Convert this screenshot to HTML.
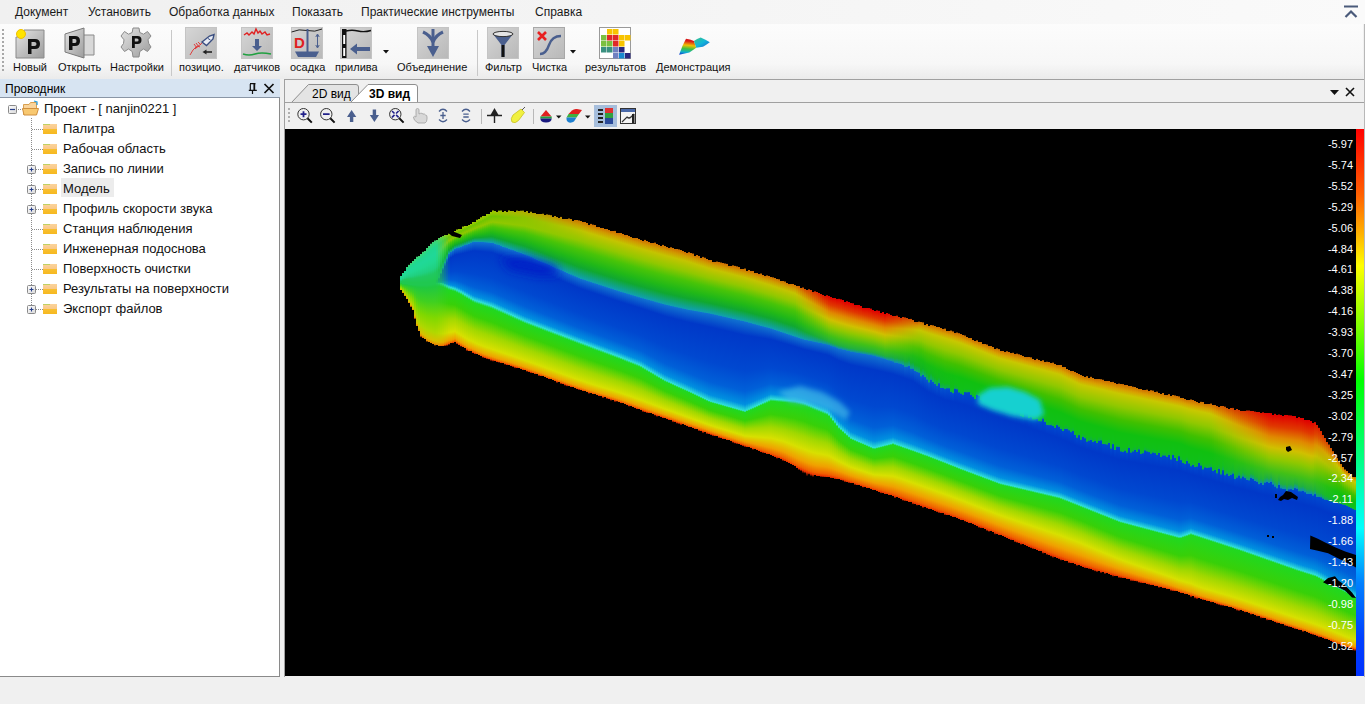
<!DOCTYPE html>
<html><head><meta charset="utf-8">
<style>
*{margin:0;padding:0;box-sizing:border-box}
html,body{width:1365px;height:704px;overflow:hidden;background:#f0f0f0;font-family:"Liberation Sans",sans-serif;font-size:12px;color:#000;position:relative}
.a{position:absolute;white-space:nowrap}
svg{position:absolute;overflow:visible}
#menu{left:0;top:0;width:1365px;height:24px;background:linear-gradient(to right,#f0f0f0,#f4f4f4 45%,#fafafa)}
#menu span{position:absolute;top:5px;font-size:12px;color:#1a1a1a}
#tb{left:0;top:24px;width:1363px;height:55px;background:linear-gradient(#fcfcfc,#f7f7f7 72%,#ebebeb)}
.lbl{position:absolute;top:37px;font-size:11px;color:#111}
.sep{position:absolute;top:6px;width:1px;height:46px;background:#c8c8c8}
#exp-h{left:0;top:79px;width:280px;height:19px;background:#d7e4f2;border-bottom:1px solid #8a96a6}
#exp{left:0;top:98px;width:280px;height:579px;background:#fff;border-right:1px solid #8a8a8a;border-bottom:1px solid #8a8a8a}
.tr{position:absolute;font-size:13px;color:#111}
#doc{left:284px;top:79px;width:1081px;height:598px;background:#f0f0f0;border-left:1px solid #a0a0a0;border-top:1px solid #a0a0a0}
#vt{left:285px;top:102px;width:1079px;height:27px;background:#f0f0f0;border-top:1px solid #a0a0a0}
#view{left:285px;top:129px;width:1071px;height:547px;background:#000;overflow:hidden}
#view i{position:absolute;top:0;height:547px}
#cbar{left:1356px;top:129px;width:8px;height:547px;background:linear-gradient(#ff0000,#ff6000 12%,#ffb000 19%,#ffff00 25%,#80ff00 36%,#00ff00 46%,#00ff80 60%,#00ffff 73%,#0080ff 83%,#0040ff 93%,#0030ff)}
#rb{left:1364px;top:24px;width:1px;height:653px;background:#b8b8b8}
#labels span{position:absolute;right:3px;color:#fff;font-size:11px;line-height:12px}
</style></head><body>
<div id="menu" class="a">
<span style="left:15px">Документ</span>
<span style="left:88px">Установить</span>
<span style="left:169px">Обработка данных</span>
<span style="left:292px">Показать</span>
<span style="left:361px">Практические инструменты</span>
<span style="left:535px">Справка</span>
<svg style="left:1343px;top:5px" width="16" height="14" viewBox="0 0 16 14"><path d="M1 1.5H15" stroke="#4a5a7a" stroke-width="2"/><path d="M2.5 12L8 6.5L13.5 12" stroke="#4a5a7a" stroke-width="2.2" fill="none"/></svg>
</div>
<div id="tb" class="a">
<svg style="left:2px;top:5px" width="3" height="44"><g fill="#a8a8a8"><rect x="0" y="0" width="2" height="2"/><rect x="0" y="4" width="2" height="2"/><rect x="0" y="8" width="2" height="2"/><rect x="0" y="12" width="2" height="2"/><rect x="0" y="16" width="2" height="2"/><rect x="0" y="20" width="2" height="2"/><rect x="0" y="24" width="2" height="2"/><rect x="0" y="28" width="2" height="2"/><rect x="0" y="32" width="2" height="2"/><rect x="0" y="36" width="2" height="2"/><rect x="0" y="40" width="2" height="2"/></g></svg>
<svg style="left:14px;top:3px" width="32" height="32" viewBox="0 0 32 32">
<defs><linearGradient id="gg" x1="0" y1="0" x2="1" y2="1"><stop offset="0" stop-color="#e4e4e4"/><stop offset="1" stop-color="#9c9c9c"/></linearGradient></defs>
<path d="M2 10H10V3H30V31H2Z" fill="url(#gg)" stroke="#8a8a8a"/>
<circle cx="7" cy="7" r="4.5" fill="#ffe400" stroke="#f0c000"/>
<path d="M14 27V12H21Q26 12 26 17Q26 22 21 22H17.5V27Z M17.5 15V19H20.5Q22.5 19 22.5 17Q22.5 15 20.5 15Z" fill="#111"/>
</svg>
<svg style="left:63px;top:3px" width="32" height="32" viewBox="0 0 32 32">
<path d="M19 8H31V28H19Z" fill="#d8d8d8" stroke="#8a8a8a"/>
<path d="M2 7L21 1V31L2 25Z" fill="url(#gg)" stroke="#7a7a7a"/>
<path d="M6 23V9H12Q17 9 17 14Q17 19 12 19H9.5V23Z M9.5 12V16H12Q13.5 16 13.5 14Q13.5 12 12 12Z" fill="#111"/>
</svg>
<svg style="left:120px;top:3px" width="32" height="32" viewBox="0 0 32 32">
<path d="M13 1H19L19.8 5.5L23.5 7.2L27.5 4.5L31 9L28 12.8L28.8 16.5L31 20L27.5 24.5L23.5 22L19.8 24.5L19 30H13L12.2 24.5L8.5 22L4.5 24.5L1 20L3.5 16.5L4 12.8L1 9L4.5 4.5L8.5 7.2L12.2 5.5Z" fill="url(#gg)" stroke="#8a8a8a"/>
<path d="M12 21V9H17.5Q21.5 9 21.5 13Q21.5 17 17.5 17H14.8V21Z M14.8 11.5V14.5H17Q18.6 14.5 18.6 13Q18.6 11.5 17 11.5Z" fill="#111"/>
</svg>
<div class="sep" style="left:171px"></div>
<svg style="left:185px;top:3px" width="32" height="32" viewBox="0 0 32 32">
<defs><linearGradient id="gb" x1="0" y1="0" x2="1" y2="1"><stop offset="0" stop-color="#d6d6d6"/><stop offset="1" stop-color="#b8b8b8"/></linearGradient></defs>
<rect x="0.5" y="0.5" width="31" height="31" fill="url(#gb)" stroke="#c4c4c4"/>
<path d="M17 15L24.5 9L29 7.5L28 12L21.5 18.5Z" fill="#e8ecf4" stroke="#3a4e80" stroke-width="1.4"/>
<path d="M23 11.5L25.5 13" stroke="#3a4e80" stroke-width="1"/>
<path d="M5 28Q8 22 11 20Q13 18 15 20M9 17L12 21M11 16L14 20M13 15L16 18M10 22L17 16" stroke="#e03030" stroke-width="0.9" fill="none"/>
<path d="M19 25H27" stroke="#222" stroke-width="1.6"/><path d="M21.5 22.5L17.5 25L21.5 27.5Z" fill="#222"/>
</svg>
<svg style="left:241px;top:3px" width="32" height="32" viewBox="0 0 32 32">
<rect x="0.5" y="0.5" width="31" height="31" fill="url(#gb)" stroke="#c4c4c4"/>
<path d="M3 8L6 6L8 8L11 5L13 7L15 2L17 6L19 4L21 7L24 5L26 8L29 7" stroke="#e02020" stroke-width="1.4" fill="none"/>
<path d="M14 12H18V19H21L16 24L11 19H14Z" fill="#4a5f8e"/>
<path d="M2 27Q8 29 14 27T30 27" stroke="#20a040" stroke-width="1.6" fill="none"/>
</svg>
<svg style="left:291px;top:3px" width="32" height="32" viewBox="0 0 32 32">
<rect x="0.5" y="0.5" width="31" height="31" fill="url(#gb)" stroke="#c4c4c4"/>
<path d="M0.5 5Q8 1.5 16 3.5T31 2" stroke="#222" stroke-width="1" fill="none"/>
<path d="M16.5 2V25" stroke="#4a5f8e" stroke-width="2"/>
<path d="M4 24.5H28L25 30H7Z" fill="#4a5f8e"/>
<text x="3" y="21" font-family="Liberation Sans" font-weight="bold" font-size="15" fill="#e02020">D</text>
<path d="M26.5 8V20M24.8 10L26.5 7L28.2 10M24.8 18L26.5 21L28.2 18" stroke="#4a5f8e" stroke-width="1" fill="none"/>
</svg>
<svg style="left:340px;top:3px" width="32" height="32" viewBox="0 0 32 32">
<rect x="0.5" y="0.5" width="31" height="31" fill="url(#gb)" stroke="#c4c4c4"/>
<rect x="2" y="2" width="4.5" height="29" fill="#111"/><rect x="3.2" y="8" width="2" height="9" fill="#fff"/><rect x="3.2" y="21" width="2" height="8" fill="#fff"/>
<path d="M6 4Q12 2.5 18 4T31 3.5" stroke="#111" stroke-width="1.4" fill="none"/>
<path d="M10 22L17 16.5V20H30V24H17V27.5Z" fill="#4a5f8e"/>
</svg>
<svg style="left:383px;top:26px" width="6" height="4"><path d="M0 0H6L3 3.5Z" fill="#111"/></svg>
<svg style="left:417px;top:3px" width="32" height="32" viewBox="0 0 32 32">
<rect x="0.5" y="0.5" width="31" height="31" fill="url(#gb)" stroke="#c4c4c4"/>
<path d="M6 5Q13 8 16 15M26 5Q19 8 16 15" stroke="#4a5f8e" stroke-width="3.2" fill="none"/>
<path d="M16 2V20" stroke="#4a5f8e" stroke-width="3"/>
<path d="M10 19H22L16 30Z" fill="#4a5f8e"/>
</svg>
<div class="sep" style="left:477px"></div>
<svg style="left:487px;top:3px" width="32" height="32" viewBox="0 0 32 32">
<rect x="0.5" y="0.5" width="31" height="31" fill="url(#gb)" stroke="#c4c4c4"/>
<path d="M6 7L14.5 18V30H17.5V18L26 7Z" fill="#4a5f8e"/>
<path d="M14.5 18H17.5V30H14.5Z" fill="#111"/>
<ellipse cx="16" cy="7" rx="10" ry="2.6" fill="#e4e4e4" stroke="#333" stroke-width="1"/>
</svg>
<svg style="left:533px;top:3px" width="32" height="32" viewBox="0 0 32 32">
<rect x="0.5" y="0.5" width="31" height="31" fill="url(#gb)" stroke="#a8a8a8"/>
<path d="M5 5L13 13M13 5L5 13" stroke="#e82020" stroke-width="2.6"/>
<path d="M7 27Q13 27 16 18T28 9" stroke="#4a5f8e" stroke-width="2.4" fill="none"/>
</svg>
<svg style="left:570px;top:26px" width="6" height="4"><path d="M0 0H6L3 3.5Z" fill="#111"/></svg>
<svg style="left:599px;top:3px" width="32" height="32" viewBox="0 0 32 32">
<rect x="0.5" y="0.5" width="31" height="31" fill="#fff" stroke="#9a9a9a"/>
<g><rect x="8" y="2" width="5.5" height="5.5" fill="#f8c400"/><rect x="14" y="2" width="5.5" height="5.5" fill="#f8c400"/><rect x="2" y="8" width="5.5" height="5.5" fill="#7cc040"/><rect x="8" y="8" width="5.5" height="5.5" fill="#e02828"/><rect x="14" y="8" width="5.5" height="5.5" fill="#e02828"/><rect x="20" y="8" width="5.5" height="5.5" fill="#f8c400"/><rect x="26" y="8" width="5.5" height="5.5" fill="#f8c400"/><rect x="2" y="14" width="5.5" height="5.5" fill="#7cc040"/><rect x="8" y="14" width="5.5" height="5.5" fill="#7cc040"/><rect x="14" y="14" width="5.5" height="5.5" fill="#e02828"/><rect x="20" y="14" width="5.5" height="5.5" fill="#f8c400"/><rect x="2" y="20" width="5.5" height="5.5" fill="#3a9080"/><rect x="8" y="20" width="5.5" height="5.5" fill="#3a9080"/><rect x="14" y="20" width="5.5" height="5.5" fill="#7080c0"/><rect x="20" y="20" width="5.5" height="5.5" fill="#2a2880"/><rect x="14" y="26" width="5.5" height="5.5" fill="#7080c0"/><rect x="20" y="26" width="5.5" height="5.5" fill="#1888d0"/><rect x="26" y="26" width="5.5" height="5.5" fill="#2a2880"/></g>
</svg>
<svg style="left:678px;top:12px" width="34" height="22" viewBox="0 0 34 22">
<defs><linearGradient id="gd" x1="0.2" y1="0.1" x2="0.1" y2="1"><stop offset="0" stop-color="#d81818"/><stop offset="0.3" stop-color="#f0c000"/><stop offset="0.55" stop-color="#40c040"/><stop offset="0.8" stop-color="#10b0d0"/><stop offset="1" stop-color="#1030d0"/></linearGradient>
<linearGradient id="gd2" x1="0" y1="0" x2="1" y2="1"><stop offset="0" stop-color="#40c080"/><stop offset="0.5" stop-color="#10b8d8"/><stop offset="1" stop-color="#2060d0"/></linearGradient></defs>
<path d="M1.1 18.7Q4 10 8 2.8Q12 3 15.9 5L18.2 11.8L11.4 16.4Z" fill="url(#gd)"/>
<path d="M15.9 5Q19 3 22.7 1.6Q27 3.5 31.8 6.2Q28 9 25 10.7L18.2 11.8Z" fill="url(#gd2)"/>
</svg>
<span class="lbl" style="left:13px">Новый</span>
<span class="lbl" style="left:58px">Открыть</span>
<span class="lbl" style="left:110px">Настройки</span>
<span class="lbl" style="left:179px">позицио.</span>
<span class="lbl" style="left:234px">датчиков</span>
<span class="lbl" style="left:290px">осадка</span>
<span class="lbl" style="left:335px">прилива</span>
<span class="lbl" style="left:397px">Объединение</span>
<span class="lbl" style="left:485px">Фильтр</span>
<span class="lbl" style="left:532px">Чистка</span>
<span class="lbl" style="left:585px">результатов</span>
<span class="lbl" style="left:656px">Демонстрация</span>

</div>
<div id="exp-h" class="a"><span class="a" style="left:5px;top:3px">Проводник</span>
<svg style="left:246px;top:3px" width="30" height="13" viewBox="0 0 30 13">
<path d="M4.3 2V8M8.3 2V8M4 1.7H9.5M2.8 8.3H10.8M6.5 8.5V12" stroke="#111" stroke-width="1.2" fill="none"/><rect x="7.6" y="2" width="1.6" height="6.3" fill="#111"/>
<path d="M18.5 2L27.5 11M27.5 2L18.5 11" stroke="#111" stroke-width="1.7"/>
</svg>

</div>
<div id="exp" class="a">
<svg style="left:0;top:0" width="280" height="240">
<defs><linearGradient id="fo" x1="0" y1="0" x2="0" y2="1"><stop offset="0" stop-color="#fbd39a"/><stop offset="0.45" stop-color="#f9c98a"/><stop offset="0.5" stop-color="#f8c030"/><stop offset="1" stop-color="#f6b820"/></linearGradient>
<linearGradient id="bx" x1="0" y1="0" x2="1" y2="1"><stop offset="0" stop-color="#ffffff"/><stop offset="1" stop-color="#d8d8d8"/></linearGradient></defs>
<path d="M31.5 20V211" stroke="#8c8c8c" stroke-dasharray="1 1" shape-rendering="crispEdges"/>
<rect x="8.5" y="7.5" width="8" height="8" rx="1" fill="url(#bx)" stroke="#8a8a8a"/>
<path d="M10 11.5H15" stroke="#28408a" stroke-width="1.2"/>
<path d="M18 11.5H23" stroke="#8c8c8c" stroke-dasharray="1 1"/>
<path d="M23.5 6.5H29L30.5 4.5H36.5V16.5H23.5Z" fill="#f9d49c" stroke="#d8a050"/>
<path d="M34 3L37 4V7" stroke="#2aa0e0" stroke-width="1.3" fill="none"/>
<path d="M22.5 10.5H38.5L36.5 17H24Z" fill="#f8c870" stroke="#d09040"/>
<path d="M32 31.5H43" stroke="#8c8c8c" stroke-dasharray="1 1"/>
<rect x="43" y="26" width="14" height="10" fill="url(#fo)"/>
<path d="M43 26.5H50" stroke="#c0d060" stroke-width="1"/>
<path d="M32 51.5H43" stroke="#8c8c8c" stroke-dasharray="1 1"/>
<rect x="43" y="46" width="14" height="10" fill="url(#fo)"/>
<path d="M43 46.5H50" stroke="#c0d060" stroke-width="1"/>
<path d="M32 71.5H43" stroke="#8c8c8c" stroke-dasharray="1 1"/>
<rect x="27.5" y="67.5" width="8" height="8" rx="1" fill="url(#bx)" stroke="#8a8a8a"/>
<path d="M29.5 71.5H33.5M31.5 69.5V73.5" stroke="#28408a" stroke-width="1.1"/>
<rect x="43" y="66" width="14" height="10" fill="url(#fo)"/>
<path d="M43 66.5H50" stroke="#c0d060" stroke-width="1"/>
<path d="M32 91.5H43" stroke="#8c8c8c" stroke-dasharray="1 1"/>
<rect x="27.5" y="87.5" width="8" height="8" rx="1" fill="url(#bx)" stroke="#8a8a8a"/>
<path d="M29.5 91.5H33.5M31.5 89.5V93.5" stroke="#28408a" stroke-width="1.1"/>
<rect x="43" y="86" width="14" height="10" fill="url(#fo)"/>
<path d="M43 86.5H50" stroke="#c0d060" stroke-width="1"/>
<path d="M32 111.5H43" stroke="#8c8c8c" stroke-dasharray="1 1"/>
<rect x="27.5" y="107.5" width="8" height="8" rx="1" fill="url(#bx)" stroke="#8a8a8a"/>
<path d="M29.5 111.5H33.5M31.5 109.5V113.5" stroke="#28408a" stroke-width="1.1"/>
<rect x="43" y="106" width="14" height="10" fill="url(#fo)"/>
<path d="M43 106.5H50" stroke="#c0d060" stroke-width="1"/>
<path d="M32 131.5H43" stroke="#8c8c8c" stroke-dasharray="1 1"/>
<rect x="43" y="126" width="14" height="10" fill="url(#fo)"/>
<path d="M43 126.5H50" stroke="#c0d060" stroke-width="1"/>
<path d="M32 151.5H43" stroke="#8c8c8c" stroke-dasharray="1 1"/>
<rect x="43" y="146" width="14" height="10" fill="url(#fo)"/>
<path d="M43 146.5H50" stroke="#c0d060" stroke-width="1"/>
<path d="M32 171.5H43" stroke="#8c8c8c" stroke-dasharray="1 1"/>
<rect x="43" y="166" width="14" height="10" fill="url(#fo)"/>
<path d="M43 166.5H50" stroke="#c0d060" stroke-width="1"/>
<path d="M32 191.5H43" stroke="#8c8c8c" stroke-dasharray="1 1"/>
<rect x="27.5" y="187.5" width="8" height="8" rx="1" fill="url(#bx)" stroke="#8a8a8a"/>
<path d="M29.5 191.5H33.5M31.5 189.5V193.5" stroke="#28408a" stroke-width="1.1"/>
<rect x="43" y="186" width="14" height="10" fill="url(#fo)"/>
<path d="M43 186.5H50" stroke="#c0d060" stroke-width="1"/>
<path d="M32 211.5H43" stroke="#8c8c8c" stroke-dasharray="1 1"/>
<rect x="27.5" y="207.5" width="8" height="8" rx="1" fill="url(#bx)" stroke="#8a8a8a"/>
<path d="M29.5 211.5H33.5M31.5 209.5V213.5" stroke="#28408a" stroke-width="1.1"/>
<rect x="43" y="206" width="14" height="10" fill="url(#fo)"/>
<path d="M43 206.5H50" stroke="#c0d060" stroke-width="1"/>
</svg>
<div class="a" style="left:61px;top:80px;width:53px;height:19px;background:#ececec"></div>
<span class="tr" style="left:44px;top:3px">Проект - [ nanjin0221 ]</span>
<span class="tr" style="left:63px;top:23px">Палитра</span>
<span class="tr" style="left:63px;top:43px">Рабочая область</span>
<span class="tr" style="left:63px;top:63px">Запись по линии</span>
<span class="tr" style="left:63px;top:83px">Модель</span>
<span class="tr" style="left:63px;top:103px">Профиль скорости звука</span>
<span class="tr" style="left:63px;top:123px">Станция наблюдения</span>
<span class="tr" style="left:63px;top:143px">Инженерная подоснова</span>
<span class="tr" style="left:63px;top:163px">Поверхность очистки</span>
<span class="tr" style="left:63px;top:183px">Результаты на поверхности</span>
<span class="tr" style="left:63px;top:203px">Экспорт файлов</span>
</div>
<div id="doc" class="a">
<svg style="left:0;top:0" width="1080" height="23">
<path d="M6.5 22.5L23.5 4.5H71Q73.5 4.5 73.5 7V22.5" fill="#e4e4e4" stroke="#8e8e8e"/>
<path d="M0 22.5H6.5M132.5 22.5H1080" stroke="#8e8e8e"/>
<path d="M65 23L83 4.5H130Q132.5 4.5 132.5 7V23" fill="#fff" stroke="#8e8e8e"/>
<path d="M1045 10H1054L1049.5 15Z" fill="#111"/>
<path d="M1061 8L1069 16M1069 8L1061 16" stroke="#111" stroke-width="1.6"/>
</svg>
<span class="a" style="left:27px;top:7px;font-size:12px">2D вид</span>
<span class="a" style="left:84px;top:7px;font-size:12px;font-weight:bold">3D вид</span>

</div>
<div id="vt" class="a">
<svg style="left:0;top:0" width="360" height="26" viewBox="285 103 360 26">
<g fill="#b0b0b0"><rect x="288" y="108" width="2" height="2"/><rect x="288" y="112" width="2" height="2"/><rect x="288" y="116" width="2" height="2"/><rect x="288" y="120" width="2" height="2"/></g>
<g fill="none" stroke="#333" stroke-width="1"><circle cx="303.5" cy="114.2" r="5.7"/><circle cx="326.3" cy="114.2" r="5.7"/><circle cx="395.3" cy="114.2" r="5.7"/></g>
<g stroke="#111" stroke-width="2"><path d="M307.5 118.3L311.8 122.6M330.3 118.3L334.6 122.6M399.3 118.3L403.6 122.6"/></g>
<path d="M300.5 114.2H306.5M303.5 111.2V117.2M323 114.2H329.6" stroke="#22228a" stroke-width="1.8"/>
<path d="M392 111L394.5 113.5M398.6 111L396.1 113.5M392 117.4L394.5 114.9M398.6 117.4L396.1 114.9" stroke="#22228a" stroke-width="1.6"/>
<path d="M351.6 110L356.3 117H353.3V122H349.9V117H347Z" fill="#4a5f8e"/>
<path d="M374.4 122L379 115H376.1V109.6H372.7V115H369.8Z" fill="#4a5f8e"/>
<path d="M418 123Q413 120 413.5 117Q414 115.5 416 117V110Q416 108.5 417.5 108.5Q419 108.5 419 110V114L420.5 113.3Q422 113 423 114Q424.5 113.5 425.5 115Q427 115 427 117V119Q427 122 425 123Z" fill="#d8d8d8" stroke="#a0a0a0" stroke-width="0.8"/>
<g stroke="#4a5f8e" stroke-width="1.3" fill="none"><path d="M439 111.5Q443 107 447 111.5M439 119.5Q443 124 447 119.5"/><path d="M443 112V119M440.3 115.5H445.7"/>
<path d="M462 111.5Q466 107 470 111.5M462 119.5Q466 124 470 119.5M463.3 114.2H468.7M463.3 117H468.7"/></g>
<path d="M481.5 109V124" stroke="#b8b8b8"/>
<path d="M494.5 123V114M487 115.5H502" stroke="#222" stroke-width="1.4"/><path d="M494.5 108L498.5 115H490.5Z" fill="#222"/>
<path d="M512 122Q510 119 513 115L521 109L524.5 112.5L518.5 120.5Q515 124 512 122Z" fill="#f0f040" stroke="#c8c020" stroke-width="0.8"/><path d="M522 110L525 107" stroke="#555"/>
<path d="M533.5 109V124" stroke="#b8b8b8"/>
<path d="M546 110L551.5 116.5H540.5Z" fill="#e02020"/><path d="M540.3 116.5H551.7V118.5H540.3Z" fill="#20a040"/><path d="M540.3 118.5H551.7Q551.5 122.5 546 122.5Q540.5 122.5 540.3 118.5Z" fill="#1a1a80"/>
<path d="M556 115.5H561.5L558.75 118.5Z" fill="#111"/>
<path d="M572 110.5Q574 108.5 577 109L582 110L579 114H568.5Z" fill="#e02020"/><path d="M568.5 114H579L576.5 117.5H566.5Z" fill="#40b040"/><path d="M566.5 117.5H576.5L574 121.5Q572 123 569 122.5Q566 121.5 566.5 117.5Z" fill="#1e80d0"/>
<path d="M585 115.5H590.5L587.75 118.5Z" fill="#111"/>
<rect x="594" y="105" width="23" height="22" fill="#a6bedc"/>
<g fill="#222"><rect x="598" y="109" width="5" height="2"/><rect x="598" y="113" width="5" height="2"/><rect x="598" y="117" width="5" height="2"/><rect x="598" y="121" width="5" height="2"/></g>
<rect x="605" y="108" width="8" height="5" fill="#e03030"/><rect x="605" y="113" width="8" height="5" fill="#30a040"/><rect x="605" y="118" width="8" height="6" fill="#2a4a9a"/>
<rect x="620.5" y="108.5" width="15" height="15" fill="#f4f4f4" stroke="#333"/><rect x="621" y="109" width="14" height="3" fill="#4a6aaa"/>
<path d="M622 122L627 117Q629 119 631 117L634 114" stroke="#333" stroke-width="1.2" fill="none"/><rect x="632" y="114" width="2.5" height="9" fill="#222"/>
</svg>

</div>
<div id="view" class="a"><i style="left:115px;width:2px;background:linear-gradient(#000 147.0px,#40d070 147.0px,#30d880 147.4px,#20d890 148.0px,#20d898 149.0px,#20d890 150.0px,#20d080 151.1px,#20c860 151.8px,#20c850 152.9px,#20c850 153.0px,#20c850 153.1px,#20c850 153.6px,#20c850 153.8px,#20c850 153.9px,#20c850 154.0px,#20c840 154.4px,#40d020 156.1px,#80d800 157.9px,#b0d800 159.6px,#d8c000 160.6px,#e89000 160.9px,#e07000 161.0px,#000 161.0px)"></i>
<i style="left:117px;width:2px;background:linear-gradient(#000 143.5px,#40d070 143.7px,#30d880 144.3px,#20d890 145.2px,#20d898 146.8px,#20d890 148.3px,#20d080 150.0px,#20c860 151.1px,#20c850 152.9px,#20c850 153.0px,#20c850 153.2px,#20c850 153.9px,#20c850 154.3px,#20c850 154.6px,#20c850 154.7px,#20c840 155.1px,#40d020 157.4px,#80d800 159.7px,#b0d800 161.9px,#d8c000 163.1px,#e89000 163.6px,#e07000 163.7px,#000 164.5px)"></i>
<i style="left:119px;width:2px;background:linear-gradient(#000 141.8px,#40d070 141.8px,#30d880 141.8px,#20d890 142.6px,#20d898 144.9px,#20d890 146.8px,#20d080 149.1px,#20c860 150.5px,#20c850 152.8px,#20c850 153.0px,#20c850 153.3px,#20c850 154.1px,#20c850 154.6px,#20c850 154.9px,#20c850 155.0px,#20c840 155.6px,#40d020 158.5px,#80d800 161.5px,#b0d800 164.3px,#d8c000 166.0px,#e89000 166.6px,#e07000 166.7px,#000 166.8px)"></i>
<i style="left:121px;width:2px;background:linear-gradient(#000 138.0px,#40d070 138.0px,#30d880 139.1px,#20d890 140.4px,#20d898 143.1px,#20d890 145.5px,#20d080 148.2px,#20c860 150.0px,#20c850 152.8px,#20c850 153.0px,#20c850 153.3px,#20c850 154.1px,#20c850 154.6px,#20c850 154.9px,#20c850 155.0px,#20c840 155.8px,#40d020 159.5px,#80d800 163.4px,#b0d800 167.0px,#d8c000 169.1px,#e89000 169.9px,#e07000 170.0px,#000 168.5px)"></i>
<i style="left:123px;width:2px;background:linear-gradient(#000 135.4px,#40d070 136.0px,#30d880 137.2px,#20d890 138.8px,#20d898 141.9px,#20d890 144.7px,#20d080 147.8px,#20c860 149.9px,#20c850 153.1px,#20c850 153.3px,#20c850 153.6px,#20c850 154.4px,#20c850 154.9px,#20c850 155.2px,#20c850 155.3px,#20c840 156.2px,#40d020 160.8px,#80d800 165.6px,#b0d800 170.0px,#d8c000 172.6px,#e89000 173.5px,#e07000 173.7px,#000 173.7px)"></i>
<i style="left:125px;width:2px;background:linear-gradient(#000 134.4px,#40d070 134.4px,#30d880 135.4px,#20d890 137.1px,#20d898 140.7px,#20d890 143.8px,#20d080 147.4px,#20c860 149.7px,#20c850 153.4px,#20c850 153.7px,#20c850 154.0px,#20c850 154.8px,#20c850 155.2px,#20c850 155.5px,#20c850 155.7px,#20c840 156.8px,#40d020 162.2px,#80d800 167.8px,#b0d800 173.0px,#d8c000 176.0px,#e89000 177.1px,#e07000 177.3px,#000 178.4px)"></i>
<i style="left:127px;width:2px;background:linear-gradient(#000 131.7px,#40d070 132.0px,#30d880 133.5px,#20d890 135.5px,#20d898 139.5px,#20d890 143.0px,#20d080 147.0px,#20c860 149.6px,#20c850 153.7px,#20c850 154.0px,#20c850 154.3px,#20c850 155.1px,#20c850 155.6px,#20c850 155.9px,#20c850 156.0px,#20c840 157.2px,#40d020 163.5px,#80d800 170.0px,#b0d800 176.0px,#d8c000 179.5px,#e89000 180.8px,#e07000 181.0px,#000 179.4px)"></i>
<i style="left:129px;width:2px;background:linear-gradient(#000 129.5px,#40d070 130.0px,#30d880 131.7px,#20d890 133.8px,#20d898 138.2px,#20d890 142.0px,#20d080 146.3px,#20c860 149.2px,#20c850 153.6px,#20c850 154.0px,#20c850 154.3px,#20c850 155.1px,#20c850 155.6px,#20c850 155.9px,#20c850 156.0px,#20c840 157.6px,#40d020 165.9px,#80d800 174.5px,#b0d800 182.4px,#d8c000 187.0px,#e89000 188.7px,#e07000 189.0px,#000 190.5px)"></i>
<i style="left:131px;width:2px;background:linear-gradient(#000 127.3px,#40d070 128.0px,#30d880 129.8px,#20d890 132.2px,#20d898 136.8px,#20d890 141.0px,#20d080 145.7px,#20c860 148.8px,#20c850 153.6px,#20c850 154.0px,#20c850 154.3px,#20c850 155.1px,#20c850 155.6px,#20c850 155.9px,#20c850 156.0px,#20c840 158.1px,#40d020 168.3px,#80d800 179.0px,#b0d800 188.8px,#d8c000 194.5px,#e89000 196.6px,#e07000 197.0px,#000 196.8px)"></i>
<i style="left:133px;width:2px;background:linear-gradient(#000 127.5px,#40d070 127.5px,#30d880 128.4px,#20d890 130.9px,#20d898 135.9px,#20d890 140.2px,#20d080 145.2px,#20c860 148.5px,#20c850 153.6px,#20c850 154.0px,#20c850 154.3px,#20c850 155.1px,#20c850 155.6px,#20c850 155.9px,#20c850 156.0px,#20c840 158.3px,#40d020 169.8px,#80d800 181.8px,#b0d800 192.8px,#d8c000 199.2px,#e89000 201.5px,#e07000 202.0px,#000 200.3px)"></i>
<i style="left:135px;width:2px;background:linear-gradient(#000 125.2px,#40d070 125.2px,#30d880 127.0px,#20d890 129.6px,#20d898 134.9px,#20d890 139.5px,#20d080 144.7px,#20c860 148.2px,#20c850 153.6px,#20c850 154.0px,#20c850 154.3px,#20c850 155.1px,#20c850 155.6px,#20c850 155.9px,#20c850 156.0px,#20c840 158.6px,#40d020 171.3px,#80d800 184.6px,#b0d800 196.8px,#d8c000 203.9px,#e89000 206.5px,#e07000 207.0px,#000 208.6px)"></i>
<i style="left:137px;width:2px;background:linear-gradient(#000 122.4px,#40d070 123.0px,#30d880 125.2px,#20d890 128.0px,#20d898 133.5px,#20d890 138.5px,#20d080 144.1px,#20c860 147.8px,#20c850 153.5px,#20c850 154.0px,#20c850 154.3px,#20c850 155.1px,#20c850 155.6px,#20c850 155.9px,#20c850 156.0px,#20c840 158.6px,#40d020 171.8px,#80d800 185.5px,#b0d800 198.1px,#d8c000 205.5px,#e89000 208.1px,#e07000 208.7px,#000 208.8px)"></i>
<i style="left:139px;width:2px;background:linear-gradient(#000 122.0px,#40d070 122.0px,#30d880 123.3px,#20d890 126.3px,#20d898 132.2px,#20d890 137.5px,#20d080 143.4px,#20c860 147.4px,#20c850 153.5px,#20c850 154.0px,#20c850 154.3px,#20c850 155.1px,#20c850 155.6px,#20c850 155.9px,#20c850 156.0px,#20c840 158.7px,#40d020 172.3px,#80d800 186.4px,#b0d800 199.5px,#d8c000 207.1px,#e89000 209.8px,#e07000 210.3px,#000 209.0px)"></i>
<i style="left:141px;width:2px;background:linear-gradient(#000 119.1px,#40d070 119.1px,#30d880 121.4px,#20d890 124.6px,#20d898 130.9px,#20d890 136.5px,#20d080 142.8px,#20c860 147.0px,#20c850 153.5px,#20c850 154.0px,#20c850 154.3px,#20c850 155.1px,#20c850 155.6px,#20c850 155.9px,#20c850 156.0px,#20c840 158.8px,#40d020 172.8px,#80d800 187.4px,#b0d800 200.8px,#d8c000 208.6px,#e89000 211.4px,#e07000 212.0px,#000 212.9px)"></i>
<i style="left:143px;width:2px;background:linear-gradient(#000 117.4px,#40d070 117.4px,#30d880 119.6px,#20d890 122.9px,#20d898 129.5px,#20d890 135.3px,#20d080 141.9px,#20c860 146.3px,#20c850 153.1px,#20c850 153.7px,#20c850 154.0px,#20c850 154.8px,#20c850 155.2px,#20c850 155.5px,#20c850 155.7px,#20c840 158.5px,#40d020 172.9px,#80d800 187.8px,#b0d800 201.5px,#d8c000 209.6px,#e89000 212.4px,#e07000 213.0px,#000 212.9px)"></i>
<i style="left:145px;width:2px;background:linear-gradient(#000 114.3px,#40d070 115.0px,#30d880 117.7px,#20d890 121.1px,#20d898 128.0px,#20d890 134.2px,#20d080 141.1px,#20c860 145.7px,#20c850 152.8px,#20c850 153.3px,#20c850 153.6px,#20c850 154.4px,#20c850 154.9px,#20c850 155.2px,#20c850 155.3px,#20c840 158.3px,#40d020 172.9px,#80d800 188.2px,#b0d800 202.3px,#d8c000 210.5px,#e89000 213.4px,#e07000 214.0px,#000 214.0px)"></i>
<i style="left:147px;width:2px;background:linear-gradient(#000 112.7px,#40d070 113.0px,#30d880 115.8px,#20d890 119.4px,#20d898 126.6px,#20d890 133.0px,#20d080 140.2px,#20c860 145.0px,#20c850 152.4px,#20c850 153.0px,#20c850 153.3px,#20c850 154.1px,#20c850 154.6px,#20c850 154.9px,#20c850 155.0px,#20c840 158.0px,#40d020 173.0px,#80d800 188.6px,#b0d800 203.0px,#d8c000 211.4px,#e89000 214.4px,#e07000 215.0px,#000 214.9px)"></i>
<i style="left:149px;width:2px;background:linear-gradient(#000 111.3px,#40d070 111.7px,#30d880 114.5px,#20d890 118.1px,#20d898 125.3px,#20d890 131.7px,#20d080 138.9px,#20c860 143.7px,#20c850 151.1px,#20c850 151.7px,#20c850 152.1px,#20c850 153.3px,#20c850 154.0px,#20c850 154.5px,#20c850 154.7px,#20c840 157.7px,#40d020 173.0px,#80d800 188.8px,#b0d800 203.5px,#d8c000 212.0px,#e89000 215.1px,#e07000 215.7px,#000 216.9px)"></i>
<i style="left:151px;width:2px;background:linear-gradient(#000 111.0px,#47cf68 111.0px,#37d777 113.1px,#26d786 116.7px,#28d78d 123.9px,#23d786 130.3px,#20ce79 137.5px,#1fc65d 142.3px,#1fc557 149.7px,#1fc259 150.3px,#1ebe59 150.9px,#1ebf59 152.5px,#1ec15a 153.5px,#1ec45a 154.1px,#21ca5a 154.3px,#20c93e 157.4px,#3fd01e 172.9px,#82d800 189.1px,#b3d900 203.9px,#dabe00 212.6px,#e98d00 215.7px,#e16b00 216.3px,#000 215.7px)"></i>
<i style="left:153px;width:2px;background:linear-gradient(#000 109.2px,#55ce58 109.2px,#45d565 111.8px,#31d471 115.4px,#38d577 122.6px,#29d473 129.0px,#20cb6a 136.2px,#1dc156 141.0px,#1dbf65 148.4px,#1db56b 149.0px,#19a96a 149.8px,#19ad6b 151.8px,#19b26d 152.9px,#19bc6f 153.6px,#23cd6d 154.0px,#20cb39 157.1px,#3ed01b 172.9px,#87d800 189.3px,#b9da00 204.4px,#ddb900 213.2px,#ea8600 216.4px,#e26200 217.0px,#000 216.2px)"></i>
<i style="left:155px;width:2px;background:linear-gradient(#000 107.9px,#62cd48 108.0px,#52d252 110.5px,#3dd15d 113.8px,#48d262 120.2px,#2ed15f 126.0px,#20c75b 132.5px,#1abd4f 136.8px,#1aba72 143.5px,#1aa97e 144.0px,#15957b 145.6px,#159a7e 149.8px,#15a381 152.2px,#15b483 153.8px,#26d181 154.5px,#20ce35 157.6px,#3dd017 173.2px,#8bd800 189.5px,#bedb00 204.5px,#e1b500 213.2px,#eb7f00 216.4px,#e35900 217.0px,#000 216.5px)"></i>
<i style="left:157px;width:2px;background:linear-gradient(#000 107.4px,#70cc38 107.4px,#60d040 109.2px,#48ce48 112.1px,#58d04c 117.9px,#34ce4c 123.0px,#20c44c 128.8px,#18b848 132.6px,#18b480 138.5px,#189c90 139.0px,#10808c 141.4px,#108890 147.8px,#109494 151.5px,#10ac98 153.9px,#28d494 155.0px,#20d030 158.1px,#3cd014 173.6px,#90d800 189.7px,#c4dc00 204.6px,#e4b000 213.3px,#ec7800 216.4px,#e45000 217.0px,#000 216.5px)"></i>
<i style="left:159px;width:2px;background:linear-gradient(#000 106.2px,#7ecb28 106.3px,#6ece2e 108.3px,#53cb33 110.8px,#68ce36 115.9px,#3acb39 120.3px,#20c13d 125.4px,#16b341 128.7px,#16ae8e 133.9px,#168fa2 134.3px,#0b6b9d 137.6px,#0b76a2 146.2px,#0b85a7 151.2px,#0ba4ad 154.5px,#2ad7a7 156.0px,#20d22b 159.0px,#3bd011 174.1px,#95d800 189.8px,#cadd00 204.3px,#e7ab00 212.7px,#ed7100 215.7px,#e54700 216.3px,#000 217.1px)"></i>
<i style="left:161px;width:2px;background:linear-gradient(#000 105.5px,#8bca18 105.7px,#7bcb1b 107.3px,#5fc81f 109.5px,#78cb21 113.8px,#3fc825 117.7px,#20bd2e 122.0px,#13af3a 124.9px,#13a99b 129.3px,#1383b5 129.7px,#0757ae 133.8px,#0763b5 144.7px,#0776bb 151.0px,#079cc1 155.1px,#2ddbbb 157.0px,#20d527 159.9px,#3ad00d 174.6px,#99d800 189.9px,#cfde00 203.9px,#eba700 212.1px,#ee6a00 215.1px,#e63e00 215.7px,#000 217.1px)"></i>
<i style="left:163px;width:2px;background:linear-gradient(#000 104.2px,#99c908 105.0px,#89c909 106.4px,#6ac50a 108.2px,#88c90b 111.8px,#45c512 115.0px,#20ba1f 118.6px,#11aa33 121.0px,#11a3a9 124.7px,#1176c7 125.0px,#0242bf 129.9px,#0251c7 143.1px,#0267ce 150.7px,#0294d6 155.7px,#2fdece 158.0px,#20d722 160.9px,#39d00a 175.1px,#9ed800 189.9px,#d5df00 203.6px,#eea200 211.6px,#ef6300 214.4px,#e73500 215.0px,#000 215.9px)"></i>
<i style="left:165px;width:2px;background:linear-gradient(#000 103.8px,#a0c800 104.0px,#90c800 105.4px,#70c400 107.1px,#90c800 110.6px,#48c408 113.7px,#20b818 117.1px,#10a830 119.5px,#10a0b0 123.0px,#1070d0 123.3px,#0038c8 128.6px,#0048d0 142.8px,#0060d8 150.9px,#0090e0 156.2px,#30e0d8 158.7px,#20d820 161.5px,#38d008 175.4px,#a0d800 189.8px,#d8e000 203.2px,#f0a000 211.0px,#f06000 213.8px,#e83000 214.3px,#000 214.1px)"></i>
<i style="left:167px;width:2px;background:linear-gradient(#000 103.3px,#a0c800 103.3px,#90c800 104.3px,#70c400 106.0px,#90c800 109.3px,#48c408 112.3px,#20b818 115.7px,#10a830 117.9px,#10a0b0 121.4px,#1070d0 121.7px,#0038c8 127.3px,#0048d0 142.4px,#0060d8 151.0px,#0090e0 156.7px,#30e0d8 159.3px,#20d820 162.0px,#38d008 175.6px,#a0d800 189.8px,#d8e000 202.8px,#f0a000 210.4px,#f06000 213.1px,#e83000 213.7px,#000 213.7px)"></i>
<i style="left:169px;width:2px;background:linear-gradient(#000 101.8px,#a0c800 102.0px,#90c800 103.3px,#70c400 104.9px,#90c800 108.1px,#48c408 111.0px,#20b818 114.2px,#10a830 116.4px,#10a0b0 119.7px,#1070d0 120.0px,#0038c8 126.0px,#0048d0 142.0px,#0060d8 151.2px,#0090e0 157.2px,#30e0d8 160.0px,#20d820 162.6px,#38d008 175.9px,#a0d800 189.7px,#d8e000 202.4px,#f0a000 209.8px,#f06000 212.5px,#e83000 213.0px,#000 211.2px)"></i>
<i style="left:171px;width:2px;background:linear-gradient(#000 100.0px,#a0c800 101.0px,#90c800 102.3px,#70c400 103.9px,#90c800 107.2px,#48c408 110.2px,#20b818 113.5px,#10a830 115.7px,#10a0b0 119.1px,#1070d0 119.3px,#0038c8 125.6px,#0048d0 142.2px,#0060d8 151.8px,#0090e0 158.1px,#30e0d8 161.0px,#20d820 163.7px,#38d008 177.0px,#a0d800 190.9px,#d8e000 203.7px,#f0a000 211.1px,#f06000 213.8px,#e83000 214.3px,#000 215.1px)"></i>
<i style="left:173px;width:2px;background:linear-gradient(#000 100.1px,#a0c800 100.1px,#90c800 101.3px,#70c400 103.0px,#90c800 106.3px,#48c408 109.3px,#20b818 112.7px,#10a830 114.9px,#10a0b0 118.4px,#1070d0 118.7px,#0038c8 125.2px,#0048d0 142.5px,#0060d8 152.5px,#0090e0 159.0px,#30e0d8 162.0px,#20d820 164.7px,#38d008 178.1px,#a0d800 192.1px,#d8e000 204.9px,#f0a000 212.4px,#f06000 215.1px,#e83000 215.7px,#000 216.4px)"></i>
<i style="left:175px;width:2px;background:linear-gradient(#000 100.1px,#a0c800 100.1px,#90c800 100.3px,#70c400 102.0px,#90c800 105.5px,#48c408 108.5px,#20b818 111.9px,#10a830 114.2px,#10a0b0 117.7px,#1070d0 118.0px,#0038c8 124.8px,#0048d0 142.8px,#0060d8 153.1px,#0090e0 159.9px,#30e0d8 163.0px,#20d820 165.7px,#38d008 179.2px,#a0d800 193.2px,#d8e000 206.2px,#f0a000 213.8px,#f06000 216.5px,#e83000 217.0px,#000 217.7px)"></i>
<i style="left:177px;width:2px;background:linear-gradient(#000 97.0px,#a0c800 98.1px,#90c800 99.4px,#70c400 101.1px,#90c800 104.6px,#48c408 107.7px,#20b818 111.1px,#10a830 113.4px,#10a0b0 116.9px,#1070d0 117.2px,#0038c8 124.3px,#0048d0 143.1px,#0060d8 153.9px,#0090e0 160.9px,#30e0d8 164.2px,#20d820 166.9px,#38d008 180.4px,#a0d800 194.5px,#d8e000 207.4px,#f0a000 215.0px,#f06000 217.7px,#e83000 218.2px,#000 217.5px)"></i>
<i style="left:179px;width:2px;background:linear-gradient(#000 97.4px,#a0c800 97.4px,#90c800 98.5px,#70c400 100.2px,#90c800 103.7px,#48c408 106.8px,#20b818 110.3px,#10a830 112.6px,#10a0b0 116.2px,#1070d0 116.5px,#0038c8 123.8px,#0048d0 143.4px,#0060d8 154.7px,#0090e0 162.0px,#30e0d8 165.5px,#20d820 168.2px,#38d008 181.7px,#a0d800 195.7px,#d8e000 208.7px,#f0a000 216.2px,#f06000 218.9px,#e83000 219.5px,#000 218.5px)"></i>
<i style="left:181px;width:2px;background:linear-gradient(#000 97.3px,#a0c800 97.3px,#90c800 97.6px,#70c400 99.3px,#90c800 102.8px,#48c408 106.0px,#20b818 109.5px,#10a830 111.8px,#10a0b0 115.4px,#1070d0 115.7px,#0038c8 123.3px,#0048d0 143.7px,#0060d8 155.5px,#0090e0 163.1px,#30e0d8 166.7px,#20d820 169.4px,#38d008 182.9px,#a0d800 196.9px,#d8e000 209.9px,#f0a000 217.5px,#f06000 220.2px,#e83000 220.7px,#000 222.3px)"></i>
<i style="left:183px;width:2px;background:linear-gradient(#000 96.1px,#a0c800 96.1px,#90c800 96.7px,#70c400 98.4px,#90c800 102.0px,#48c408 105.1px,#20b818 108.6px,#10a830 111.0px,#10a0b0 114.6px,#1070d0 114.9px,#0038c8 122.9px,#0048d0 144.1px,#0060d8 156.3px,#0090e0 164.2px,#30e0d8 167.9px,#20d820 170.6px,#38d008 184.1px,#a0d800 198.2px,#d8e000 211.1px,#f0a000 218.7px,#f06000 221.4px,#e83000 221.9px,#000 221.8px)"></i>
<i style="left:185px;width:2px;background:linear-gradient(#000 95.2px,#a0c800 95.2px,#90c800 95.8px,#70c400 97.5px,#90c800 101.1px,#48c408 104.3px,#20b818 107.8px,#10a830 110.2px,#10a0b0 113.9px,#1070d0 114.2px,#0038c8 122.4px,#0048d0 144.4px,#0060d8 157.1px,#0090e0 165.3px,#30e0d8 169.2px,#20d820 171.8px,#38d008 185.1px,#a0d800 199.0px,#d8e000 211.8px,#f0a000 219.3px,#f06000 221.9px,#e83000 222.5px,#000 221.8px)"></i>
<i style="left:187px;width:2px;background:linear-gradient(#000 93.0px,#a0c800 93.5px,#90c800 94.9px,#70c400 96.6px,#90c800 100.2px,#48c408 103.4px,#20b818 107.0px,#10a830 109.4px,#10a0b0 113.1px,#1070d0 113.4px,#0038c8 121.9px,#0048d0 144.7px,#0060d8 157.8px,#0090e0 166.4px,#30e0d8 170.4px,#20d820 173.0px,#38d008 186.3px,#a0d800 200.1px,#d8e000 212.8px,#f0a000 220.3px,#f06000 222.9px,#e83000 223.5px,#000 224.3px)"></i>
<i style="left:189px;width:2px;background:linear-gradient(#000 93.0px,#a0c800 93.0px,#90c800 93.8px,#70c400 95.7px,#90c800 99.4px,#48c408 102.7px,#20b818 106.4px,#10a830 108.9px,#10a0b0 112.7px,#1070d0 113.1px,#0038c8 121.8px,#0048d0 145.1px,#0060d8 158.5px,#0090e0 167.3px,#30e0d8 171.3px,#20d820 174.0px,#38d008 187.3px,#a0d800 201.1px,#d8e000 213.8px,#f0a000 221.2px,#f06000 223.9px,#e83000 224.4px,#000 225.3px)"></i>
<i style="left:191px;width:2px;background:linear-gradient(#000 90.3px,#a0c800 91.2px,#90c800 92.7px,#70c400 94.7px,#90c800 98.6px,#48c408 102.2px,#20b818 106.1px,#10a830 108.8px,#10a0b0 112.8px,#1070d0 113.2px,#0038c8 122.0px,#0048d0 145.5px,#0060d8 159.1px,#0090e0 167.9px,#30e0d8 172.0px,#20d820 174.7px,#38d008 188.0px,#a0d800 201.9px,#d8e000 214.7px,#f0a000 222.1px,#f06000 224.8px,#e83000 225.3px,#000 225.4px)"></i>
<i style="left:193px;width:2px;background:linear-gradient(#000 89.5px,#a0c800 89.9px,#90c800 91.6px,#70c400 93.7px,#90c800 97.9px,#48c408 101.6px,#20b818 105.8px,#10a830 108.6px,#10a0b0 112.9px,#1070d0 113.3px,#0038c8 122.2px,#0048d0 145.9px,#0060d8 159.6px,#0090e0 168.5px,#30e0d8 172.7px,#20d820 175.3px,#38d008 188.7px,#a0d800 202.6px,#d8e000 215.5px,#f0a000 223.0px,#f06000 225.7px,#e83000 226.2px,#000 225.9px)"></i>
<i style="left:195px;width:2px;background:linear-gradient(#000 87.9px,#a0c800 88.7px,#90c800 90.4px,#70c400 92.7px,#90c800 97.1px,#48c408 101.1px,#20b818 105.5px,#10a830 108.5px,#10a0b0 113.0px,#1070d0 113.4px,#0038c8 122.4px,#0048d0 146.4px,#0060d8 160.1px,#0090e0 169.1px,#30e0d8 173.3px,#20d820 176.0px,#38d008 189.4px,#a0d800 203.4px,#d8e000 216.3px,#f0a000 223.8px,#f06000 226.5px,#e83000 227.0px,#000 227.0px)"></i>
<i style="left:197px;width:2px;background:linear-gradient(#000 87.4px,#a0c800 87.5px,#90c800 89.3px,#70c400 91.7px,#90c800 96.3px,#48c408 100.5px,#20b818 105.2px,#10a830 108.3px,#10a0b0 113.1px,#1070d0 113.5px,#0038c8 122.6px,#0048d0 146.8px,#0060d8 160.7px,#0090e0 169.8px,#30e0d8 174.0px,#20d820 176.7px,#38d008 190.1px,#a0d800 204.1px,#d8e000 217.1px,#f0a000 224.6px,#f06000 227.3px,#e83000 227.8px,#000 229.0px)"></i>
<i style="left:199px;width:2px;background:linear-gradient(#000 87.0px,#a0c800 87.0px,#90c800 88.2px,#70c400 90.7px,#90c800 95.6px,#48c408 99.9px,#20b818 104.9px,#10a830 108.1px,#10a0b0 113.2px,#1070d0 113.6px,#0038c8 122.8px,#0048d0 147.2px,#0060d8 161.2px,#0090e0 170.4px,#30e0d8 174.7px,#20d820 177.4px,#38d008 190.8px,#a0d800 204.8px,#d8e000 217.8px,#f0a000 225.3px,#f06000 228.0px,#e83000 228.6px,#000 228.7px)"></i>
<i style="left:201px;width:2px;background:linear-gradient(#000 85.0px,#a0c800 85.1px,#90c800 87.1px,#70c400 89.6px,#90c800 94.8px,#48c408 99.4px,#20b818 104.5px,#10a830 108.0px,#10a0b0 113.3px,#1070d0 113.7px,#0038c8 123.0px,#0048d0 147.6px,#0060d8 161.8px,#0090e0 171.0px,#30e0d8 175.3px,#20d820 178.0px,#38d008 191.5px,#a0d800 205.5px,#d8e000 218.5px,#f0a000 226.0px,#f06000 228.7px,#e83000 229.3px,#000 230.3px)"></i>
<i style="left:203px;width:2px;background:linear-gradient(#000 84.8px,#a0c800 84.8px,#90c800 85.9px,#70c400 88.6px,#90c800 94.0px,#48c408 98.8px,#20b818 104.2px,#10a830 107.8px,#10a0b0 113.4px,#1070d0 113.8px,#0038c8 123.2px,#0048d0 148.0px,#0060d8 162.3px,#0090e0 171.6px,#30e0d8 176.0px,#20d820 178.7px,#38d008 192.2px,#a0d800 206.2px,#d8e000 219.1px,#f0a000 226.7px,#f06000 229.4px,#e83000 229.9px,#000 230.6px)"></i>
<i style="left:205px;width:2px;background:linear-gradient(#000 83.3px,#a0c700 83.3px,#91c800 84.8px,#71c400 87.6px,#90c800 93.3px,#48c408 98.3px,#20b818 103.9px,#10a830 107.7px,#10a0b0 113.5px,#1070d0 113.9px,#0038c8 123.4px,#0048d0 148.4px,#0060d8 162.9px,#0090e0 172.3px,#30e0d8 176.7px,#20d820 179.4px,#38d008 192.8px,#a0d800 206.9px,#d8e000 219.8px,#f0a000 227.3px,#f06000 230.0px,#e83000 230.6px,#000 232.2px)"></i>
<i style="left:207px;width:2px;background:linear-gradient(#000 80.9px,#a1c500 82.0px,#92c700 84.3px,#73c400 87.2px,#90c800 93.0px,#48c408 98.2px,#20b818 104.0px,#10a830 107.9px,#10a0b0 113.9px,#1070d0 114.4px,#0038c8 123.8px,#0048d0 149.1px,#0060d8 163.6px,#0090e0 173.0px,#30e0d8 177.5px,#20d820 180.1px,#38d008 193.6px,#a0d800 207.6px,#d8e000 220.5px,#f0a000 228.0px,#f06000 230.7px,#e83000 231.2px,#000 232.7px)"></i>
<i style="left:209px;width:2px;background:linear-gradient(#000 81.5px,#a2c400 82.0px,#93c600 84.3px,#74c400 87.3px,#90c800 93.3px,#48c408 98.5px,#20b818 104.5px,#10a830 108.5px,#10a0b0 114.6px,#1070d0 115.1px,#0038c8 124.6px,#0048d0 149.9px,#0060d8 164.4px,#0090e0 173.9px,#30e0d8 178.4px,#20d820 181.0px,#38d008 194.4px,#a0d800 208.3px,#d8e000 221.1px,#f0a000 228.6px,#f06000 231.3px,#e83000 231.8px,#000 231.8px)"></i>
<i style="left:211px;width:2px;background:linear-gradient(#000 82.7px,#a3c200 82.7px,#94c500 84.4px,#76c400 87.4px,#90c800 93.5px,#48c408 98.9px,#20b818 105.0px,#10a830 109.1px,#10a0b0 115.3px,#1070d0 115.8px,#0038c8 125.3px,#0048d0 150.7px,#0060d8 165.3px,#0090e0 174.8px,#30e0d8 179.3px,#20d820 181.9px,#38d008 195.2px,#a0d800 209.1px,#d8e000 221.8px,#f0a000 229.3px,#f06000 231.9px,#e83000 232.5px,#000 233.3px)"></i>
<i style="left:213px;width:2px;background:linear-gradient(#000 81.2px,#a4c000 82.0px,#96c400 84.4px,#78c400 87.5px,#90c800 93.7px,#48c408 99.3px,#20b818 105.5px,#10a830 109.6px,#10a0b0 116.0px,#1070d0 116.5px,#0038c8 126.1px,#0048d0 151.5px,#0060d8 166.2px,#0090e0 175.7px,#30e0d8 180.2px,#20d820 182.8px,#38d008 196.1px,#a0d800 209.8px,#d8e000 222.5px,#f0a000 229.9px,#f06000 232.6px,#e83000 233.1px,#000 233.7px)"></i>
<i style="left:215px;width:2px;background:linear-gradient(#000 81.0px,#a5be00 82.0px,#97c300 84.5px,#79c400 87.6px,#90c800 94.0px,#48c408 99.6px,#20b818 106.0px,#10a830 110.2px,#10a0b0 116.7px,#1070d0 117.3px,#0038c8 126.8px,#0048d0 152.4px,#0060d8 167.1px,#0090e0 176.6px,#30e0d8 181.1px,#20d820 183.7px,#38d008 196.9px,#a0d800 210.6px,#d8e000 223.2px,#f0a000 230.6px,#f06000 233.2px,#e83000 233.7px,#000 233.2px)"></i>
<i style="left:217px;width:2px;background:linear-gradient(#000 82.8px,#a6bd00 82.8px,#98c200 84.5px,#7bc400 87.8px,#90c800 94.2px,#48c408 100.0px,#20b818 106.5px,#10a830 110.8px,#10a0b0 117.5px,#1070d0 118.0px,#0038c8 127.6px,#0048d0 153.2px,#0060d8 167.9px,#0090e0 177.5px,#30e0d8 182.0px,#20d820 184.6px,#38d008 197.7px,#a0d800 211.3px,#d8e000 223.9px,#f0a000 231.2px,#f06000 233.8px,#e83000 234.3px,#000 234.1px)"></i>
<i style="left:219px;width:2px;background:linear-gradient(#000 82.2px,#a7bb00 82.2px,#9ac100 84.6px,#7dc400 87.9px,#90c800 94.5px,#48c408 100.4px,#20b818 107.0px,#10a830 111.4px,#10a0b0 118.2px,#1070d0 118.7px,#0038c8 128.4px,#0048d0 154.0px,#0060d8 168.8px,#0090e0 178.4px,#30e0d8 182.9px,#20d820 185.5px,#38d008 198.5px,#a0d800 212.0px,#d8e000 224.5px,#f0a000 231.8px,#f06000 234.4px,#e83000 234.9px,#000 235.8px)"></i>
<i style="left:221px;width:2px;background:linear-gradient(#000 82.8px,#a8b900 82.8px,#9bc000 84.6px,#7ec400 88.0px,#90c800 94.7px,#48c408 100.7px,#20b818 107.5px,#10a830 112.0px,#10a0b0 118.9px,#1070d0 119.5px,#0038c8 129.1px,#0048d0 154.9px,#0060d8 169.7px,#0090e0 179.3px,#30e0d8 183.8px,#20d820 186.4px,#38d008 199.3px,#a0d800 212.8px,#d8e000 225.2px,#f0a000 232.4px,#f06000 235.0px,#e83000 235.5px,#000 236.5px)"></i>
<i style="left:223px;width:2px;background:linear-gradient(#000 80.8px,#a9b700 82.0px,#9cbf00 84.7px,#80c400 88.1px,#90c800 95.0px,#48c408 101.1px,#20b818 108.0px,#10a830 112.5px,#10a0b0 119.6px,#1070d0 120.2px,#0038c8 129.9px,#0048d0 155.7px,#0060d8 170.5px,#0090e0 180.2px,#30e0d8 184.7px,#20d820 187.3px,#38d008 200.2px,#a0d800 213.5px,#d8e000 225.9px,#f0a000 233.1px,#f06000 235.6px,#e83000 236.2px,#000 235.9px)"></i>
<i style="left:225px;width:2px;background:linear-gradient(#000 81.9px,#aab600 82.0px,#9dbe00 84.7px,#82c400 88.2px,#90c800 95.2px,#48c408 101.5px,#20b818 108.5px,#10a830 113.1px,#10a0b0 120.3px,#1070d0 120.9px,#0038c8 130.6px,#0048d0 156.5px,#0060d8 171.4px,#0090e0 181.1px,#30e0d8 185.6px,#20d820 188.2px,#38d008 201.0px,#a0d800 214.3px,#d8e000 226.5px,#f0a000 233.7px,#f06000 236.2px,#e83000 236.8px,#000 235.2px)"></i>
<i style="left:227px;width:2px;background:linear-gradient(#000 82.1px,#abb400 82.1px,#9fbd00 84.8px,#83c400 88.3px,#90c800 95.5px,#48c408 101.8px,#20b818 109.0px,#10a830 113.7px,#10a0b0 121.0px,#1070d0 121.6px,#0038c8 131.4px,#0048d0 157.3px,#0060d8 172.3px,#0090e0 182.0px,#30e0d8 186.5px,#20d820 189.1px,#38d008 201.8px,#a0d800 215.0px,#d8e000 227.2px,#f0a000 234.3px,#f06000 236.9px,#e83000 237.4px,#000 237.8px)"></i>
<i style="left:229px;width:2px;background:linear-gradient(#000 82.8px,#acb200 82.8px,#a0bc00 84.8px,#85c400 88.5px,#90c800 95.7px,#48c408 102.2px,#20b818 109.4px,#10a830 114.3px,#10a0b0 121.8px,#1070d0 122.4px,#0038c8 132.1px,#0048d0 158.2px,#0060d8 173.1px,#0090e0 182.9px,#30e0d8 187.5px,#20d820 190.0px,#38d008 202.6px,#a0d800 215.8px,#d8e000 227.9px,#f0a000 235.0px,#f06000 237.5px,#e83000 238.0px,#000 239.6px)"></i>
<i style="left:231px;width:2px;background:linear-gradient(#000 81.1px,#adb000 82.0px,#a1bb00 84.9px,#87c400 88.6px,#90c800 96.0px,#48c408 102.5px,#20b818 109.9px,#10a830 114.9px,#10a0b0 122.5px,#1070d0 123.1px,#0038c8 132.9px,#0048d0 159.0px,#0060d8 174.0px,#0090e0 183.8px,#30e0d8 188.4px,#20d820 190.9px,#38d008 203.4px,#a0d800 216.5px,#d8e000 228.6px,#f0a000 235.6px,#f06000 238.1px,#e83000 238.6px,#000 237.6px)"></i>
<i style="left:233px;width:2px;background:linear-gradient(#000 82.4px,#aeae00 82.4px,#a3ba00 84.9px,#88c400 88.7px,#90c800 96.2px,#48c408 102.9px,#20b818 110.4px,#10a830 115.5px,#10a0b0 123.2px,#1070d0 123.8px,#0038c8 133.6px,#0048d0 159.8px,#0060d8 174.9px,#0090e0 184.7px,#30e0d8 189.3px,#20d820 191.8px,#38d008 204.3px,#a0d800 217.3px,#d8e000 229.3px,#f0a000 236.3px,#f06000 238.8px,#e83000 239.3px,#000 237.9px)"></i>
<i style="left:235px;width:2px;background:linear-gradient(#000 81.3px,#afad00 82.0px,#a4b900 85.0px,#8ac400 88.8px,#90c800 96.5px,#48c408 103.3px,#20b818 110.9px,#10a830 116.0px,#10a0b0 123.9px,#1070d0 124.5px,#0038c8 134.4px,#0048d0 160.6px,#0060d8 175.7px,#0090e0 185.6px,#30e0d8 190.2px,#20d820 192.7px,#38d008 205.1px,#a0d800 218.0px,#d8e000 230.0px,#f0a000 236.9px,#f06000 239.4px,#e83000 239.9px,#000 240.1px)"></i>
<i style="left:237px;width:2px;background:linear-gradient(#000 81.2px,#b0ab00 82.0px,#a5b800 85.0px,#8cc400 88.9px,#90c800 96.7px,#48c408 103.6px,#20b818 111.4px,#10a830 116.6px,#10a0b0 124.6px,#1070d0 125.3px,#0038c8 135.1px,#0048d0 161.5px,#0060d8 176.6px,#0090e0 186.5px,#30e0d8 191.1px,#20d820 193.6px,#38d008 205.9px,#a0d800 218.8px,#d8e000 230.7px,#f0a000 237.6px,#f06000 240.1px,#e83000 240.6px,#000 241.4px)"></i>
<i style="left:239px;width:2px;background:linear-gradient(#000 82.9px,#b1a900 82.9px,#a6b700 85.1px,#8dc400 89.0px,#90c800 97.0px,#48c408 104.0px,#20b818 111.9px,#10a830 117.2px,#10a0b0 125.3px,#1070d0 126.0px,#0038c8 135.9px,#0048d0 162.3px,#0060d8 177.5px,#0090e0 187.4px,#30e0d8 192.0px,#20d820 194.5px,#38d008 206.8px,#a0d800 219.6px,#d8e000 231.4px,#f0a000 238.3px,#f06000 240.7px,#e83000 241.2px,#000 239.3px)"></i>
<i style="left:241px;width:2px;background:linear-gradient(#000 82.4px,#b2a700 82.4px,#a8b600 85.5px,#8fc400 89.5px,#90c800 97.5px,#48c408 104.6px,#20b818 112.6px,#10a830 118.0px,#10a0b0 126.2px,#1070d0 126.9px,#0038c8 136.8px,#0048d0 163.1px,#0060d8 178.3px,#0090e0 188.2px,#30e0d8 192.8px,#20d820 195.2px,#38d008 207.5px,#a0d800 220.3px,#d8e000 232.1px,#f0a000 238.9px,#f06000 241.4px,#e83000 241.9px,#000 242.8px)"></i>
<i style="left:243px;width:2px;background:linear-gradient(#000 83.9px,#b3a600 83.9px,#a9b500 85.9px,#91c400 89.9px,#90c800 98.0px,#48c408 105.2px,#20b818 113.3px,#10a830 118.7px,#10a0b0 127.1px,#1070d0 127.7px,#0038c8 137.6px,#0048d0 163.9px,#0060d8 179.1px,#0090e0 188.9px,#30e0d8 193.5px,#20d820 196.0px,#38d008 208.2px,#a0d800 221.0px,#d8e000 232.8px,#f0a000 239.6px,#f06000 242.1px,#e83000 242.6px,#000 241.6px)"></i>
<i style="left:245px;width:2px;background:linear-gradient(#000 82.3px,#b4a400 83.1px,#aab400 86.3px,#92c400 90.4px,#90c800 98.6px,#48c408 105.9px,#20b818 114.0px,#10a830 119.5px,#10a0b0 127.9px,#1070d0 128.6px,#0038c8 138.5px,#0048d0 164.7px,#0060d8 179.8px,#0090e0 189.7px,#30e0d8 194.3px,#20d820 196.7px,#38d008 209.0px,#a0d800 221.7px,#d8e000 233.5px,#f0a000 240.3px,#f06000 242.8px,#e83000 243.3px,#000 244.5px)"></i>
<i style="left:247px;width:2px;background:linear-gradient(#000 84.4px,#b5a200 84.4px,#acb300 86.7px,#94c400 90.8px,#90c800 99.1px,#48c408 106.5px,#20b818 114.8px,#10a830 120.3px,#10a0b0 128.8px,#1070d0 129.5px,#0038c8 139.3px,#0048d0 165.6px,#0060d8 180.6px,#0090e0 190.5px,#30e0d8 195.1px,#20d820 197.5px,#38d008 209.7px,#a0d800 222.4px,#d8e000 234.2px,#f0a000 241.0px,#f06000 243.5px,#e83000 244.0px,#000 242.8px)"></i>
<i style="left:249px;width:2px;background:linear-gradient(#000 83.7px,#b6a000 83.8px,#adb200 87.1px,#96c400 91.3px,#90c800 99.6px,#48c408 107.1px,#20b818 115.5px,#10a830 121.1px,#10a0b0 129.7px,#1070d0 130.4px,#0038c8 140.2px,#0048d0 166.4px,#0060d8 181.4px,#0090e0 191.2px,#30e0d8 195.8px,#20d820 198.3px,#38d008 210.5px,#a0d800 223.2px,#d8e000 234.9px,#f0a000 241.7px,#f06000 244.2px,#e83000 244.7px,#000 245.4px)"></i>
<i style="left:251px;width:2px;background:linear-gradient(#000 85.0px,#b79f00 85.0px,#aeb100 87.5px,#97c400 91.7px,#90c800 100.2px,#48c408 107.7px,#20b818 116.2px,#10a830 121.8px,#10a0b0 130.5px,#1070d0 131.2px,#0038c8 141.0px,#0048d0 167.2px,#0060d8 182.2px,#0090e0 192.0px,#30e0d8 196.6px,#20d820 199.0px,#38d008 211.2px,#a0d800 223.9px,#d8e000 235.6px,#f0a000 242.4px,#f06000 244.9px,#e83000 245.4px,#000 244.2px)"></i>
<i style="left:253px;width:2px;background:linear-gradient(#000 84.9px,#b89d00 84.9px,#afb000 87.9px,#99c400 92.2px,#90c800 100.7px,#48c408 108.3px,#20b818 116.9px,#10a830 122.6px,#10a0b0 131.4px,#1070d0 132.1px,#0038c8 141.9px,#0048d0 168.0px,#0060d8 183.0px,#0090e0 192.8px,#30e0d8 197.3px,#20d820 199.8px,#38d008 212.0px,#a0d800 224.6px,#d8e000 236.3px,#f0a000 243.2px,#f06000 245.6px,#e83000 246.1px,#000 247.2px)"></i>
<i style="left:255px;width:2px;background:linear-gradient(#000 85.0px,#b89b00 85.0px,#b1b000 88.3px,#9bc400 92.6px,#90c800 101.3px,#48c408 108.9px,#20b818 117.6px,#10a830 123.4px,#10a0b0 132.3px,#1070d0 133.0px,#0038c8 142.8px,#0048d0 168.8px,#0060d8 183.8px,#0090e0 193.6px,#30e0d8 198.1px,#20d820 200.5px,#38d008 212.7px,#a0d800 225.4px,#d8e000 237.1px,#f0a000 243.9px,#f06000 246.3px,#e83000 246.8px,#000 245.6px)"></i>
<i style="left:257px;width:2px;background:linear-gradient(#000 84.2px,#b99900 85.3px,#b2af00 88.7px,#9dc400 93.0px,#90c800 101.8px,#48c408 109.6px,#20b818 118.3px,#10a830 124.1px,#10a0b0 133.1px,#1070d0 133.9px,#0038c8 143.6px,#0048d0 169.6px,#0060d8 184.6px,#0090e0 194.3px,#30e0d8 198.9px,#20d820 201.3px,#38d008 213.5px,#a0d800 226.1px,#d8e000 237.8px,#f0a000 244.6px,#f06000 247.1px,#e83000 247.5px,#000 246.8px)"></i>
<i style="left:259px;width:2px;background:linear-gradient(#000 86.4px,#ba9800 86.4px,#b3ae00 89.1px,#9ec400 93.5px,#90c800 102.3px,#48c408 110.2px,#20b818 119.0px,#10a830 124.9px,#10a0b0 134.0px,#1070d0 134.7px,#0038c8 144.5px,#0048d0 170.4px,#0060d8 185.4px,#0090e0 195.1px,#30e0d8 199.6px,#20d820 202.1px,#38d008 214.2px,#a0d800 226.9px,#d8e000 238.5px,#f0a000 245.4px,#f06000 247.8px,#e83000 248.3px,#000 246.6px)"></i>
<i style="left:261px;width:2px;background:linear-gradient(#000 84.8px,#bb9600 86.0px,#b4ad00 89.5px,#a0c400 93.9px,#90c800 102.9px,#48c408 110.8px,#20b818 119.7px,#10a830 125.7px,#10a0b0 134.9px,#1070d0 135.6px,#0038c8 145.3px,#0048d0 171.2px,#0060d8 186.1px,#0090e0 195.9px,#30e0d8 200.4px,#20d820 202.8px,#38d008 215.0px,#a0d800 227.6px,#d8e000 239.3px,#f0a000 246.1px,#f06000 248.5px,#e83000 249.0px,#000 248.5px)"></i>
<i style="left:263px;width:2px;background:linear-gradient(#000 85.3px,#bc9400 86.4px,#b6ac00 89.9px,#a2c400 94.4px,#90c800 103.4px,#48c408 111.4px,#20b818 120.4px,#10a830 126.5px,#10a0b0 135.7px,#1070d0 136.5px,#0038c8 146.2px,#0048d0 172.1px,#0060d8 186.9px,#0090e0 196.6px,#30e0d8 201.2px,#20d820 203.6px,#38d008 215.7px,#a0d800 228.4px,#d8e000 240.0px,#f0a000 246.8px,#f06000 249.2px,#e83000 249.7px,#000 248.5px)"></i>
<i style="left:265px;width:2px;background:linear-gradient(#000 85.6px,#bd9200 86.7px,#b7ab00 90.3px,#a3c400 94.8px,#90c800 103.9px,#48c408 112.0px,#20b818 121.1px,#10a830 127.2px,#10a0b0 136.6px,#1070d0 137.3px,#0038c8 147.0px,#0048d0 172.9px,#0060d8 187.7px,#0090e0 197.4px,#30e0d8 201.9px,#20d820 204.4px,#38d008 216.5px,#a0d800 229.1px,#d8e000 240.7px,#f0a000 247.5px,#f06000 250.0px,#e83000 250.5px,#000 250.5px)"></i>
<i style="left:267px;width:2px;background:linear-gradient(#000 87.6px,#be9100 87.6px,#b8aa00 90.7px,#a5c400 95.3px,#90c800 104.5px,#48c408 112.7px,#20b818 121.9px,#10a830 128.0px,#10a0b0 137.5px,#1070d0 138.2px,#0038c8 147.9px,#0048d0 173.7px,#0060d8 188.5px,#0090e0 198.2px,#30e0d8 202.7px,#20d820 205.1px,#38d008 217.2px,#a0d800 229.8px,#d8e000 241.5px,#f0a000 248.3px,#f06000 250.7px,#e83000 251.2px,#000 250.9px)"></i>
<i style="left:269px;width:2px;background:linear-gradient(#000 86.6px,#bf8f00 87.5px,#baa900 91.1px,#a7c400 95.7px,#90c800 105.0px,#48c408 113.3px,#20b818 122.6px,#10a830 128.8px,#10a0b0 138.3px,#1070d0 139.1px,#0038c8 148.7px,#0048d0 174.5px,#0060d8 189.3px,#0090e0 198.9px,#30e0d8 203.5px,#20d820 205.9px,#38d008 218.0px,#a0d800 230.6px,#d8e000 242.2px,#f0a000 249.0px,#f06000 251.4px,#e83000 251.9px,#000 251.3px)"></i>
<i style="left:271px;width:2px;background:linear-gradient(#000 88.0px,#c08d00 88.0px,#bba800 91.5px,#a8c400 96.2px,#90c800 105.5px,#48c408 113.9px,#20b818 123.3px,#10a830 129.5px,#10a0b0 139.2px,#1070d0 140.0px,#0038c8 149.6px,#0048d0 175.3px,#0060d8 190.1px,#0090e0 199.7px,#30e0d8 204.2px,#20d820 206.6px,#38d008 218.7px,#a0d800 231.3px,#d8e000 243.0px,#f0a000 249.7px,#f06000 252.2px,#e83000 252.6px,#000 254.2px)"></i>
<i style="left:273px;width:2px;background:linear-gradient(#000 89.4px,#c18b00 89.4px,#bca700 91.9px,#aac400 96.6px,#90c800 106.1px,#48c408 114.5px,#20b818 124.0px,#10a830 130.3px,#10a0b0 140.0px,#1070d0 140.8px,#0038c8 150.5px,#0048d0 176.1px,#0060d8 190.9px,#0090e0 200.5px,#30e0d8 205.0px,#20d820 207.4px,#38d008 219.5px,#a0d800 232.1px,#d8e000 243.7px,#f0a000 250.5px,#f06000 252.9px,#e83000 253.4px,#000 252.4px)"></i>
<i style="left:275px;width:2px;background:linear-gradient(#000 87.4px,#c28a00 88.5px,#bda600 92.3px,#acc400 97.1px,#90c800 106.6px,#48c408 115.1px,#20b818 124.7px,#10a830 131.1px,#10a0b0 140.9px,#1070d0 141.7px,#0038c8 151.3px,#0048d0 176.9px,#0060d8 191.7px,#0090e0 201.3px,#30e0d8 205.7px,#20d820 208.2px,#38d008 220.2px,#a0d800 232.8px,#d8e000 244.4px,#f0a000 251.2px,#f06000 253.6px,#e83000 254.1px,#000 255.3px)"></i>
<i style="left:277px;width:2px;background:linear-gradient(#000 89.9px,#c38800 89.9px,#bfa500 92.7px,#adc400 97.5px,#90c800 107.2px,#48c408 115.7px,#20b818 125.4px,#10a830 131.8px,#10a0b0 141.8px,#1070d0 142.6px,#0038c8 152.2px,#0048d0 177.7px,#0060d8 192.4px,#0090e0 202.0px,#30e0d8 206.5px,#20d820 208.9px,#38d008 221.0px,#a0d800 233.6px,#d8e000 245.2px,#f0a000 251.9px,#f06000 254.3px,#e83000 254.8px,#000 254.7px)"></i>
<i style="left:279px;width:2px;background:linear-gradient(#000 89.9px,#c48600 89.9px,#c0a400 93.1px,#afc400 97.9px,#90c800 107.7px,#48c408 116.4px,#20b818 126.1px,#10a830 132.6px,#10a0b0 142.6px,#1070d0 143.5px,#0038c8 153.0px,#0048d0 178.6px,#0060d8 193.2px,#0090e0 202.8px,#30e0d8 207.3px,#20d820 209.7px,#38d008 221.8px,#a0d800 234.3px,#d8e000 245.9px,#f0a000 252.6px,#f06000 255.1px,#e83000 255.5px,#000 256.9px)"></i>
<i style="left:281px;width:2px;background:linear-gradient(#000 89.9px,#c58400 89.9px,#c1a300 93.5px,#b1c400 98.4px,#90c800 108.2px,#48c408 117.0px,#20b818 126.8px,#10a830 133.4px,#10a0b0 143.5px,#1070d0 144.3px,#0038c8 153.9px,#0048d0 179.4px,#0060d8 194.0px,#0090e0 203.6px,#30e0d8 208.0px,#20d820 210.4px,#38d008 222.5px,#a0d800 235.0px,#d8e000 246.6px,#f0a000 253.4px,#f06000 255.8px,#e83000 256.3px,#000 257.6px)"></i>
<i style="left:283px;width:2px;background:linear-gradient(#000 88.9px,#c68200 90.0px,#c3a200 93.9px,#b2c400 98.8px,#90c800 108.8px,#48c408 117.6px,#20b818 127.5px,#10a830 134.2px,#10a0b0 144.4px,#1070d0 145.2px,#0038c8 154.7px,#0048d0 180.2px,#0060d8 194.8px,#0090e0 204.3px,#30e0d8 208.8px,#20d820 211.2px,#38d008 223.3px,#a0d800 235.8px,#d8e000 247.3px,#f0a000 254.1px,#f06000 256.5px,#e83000 257.0px,#000 256.2px)"></i>
<i style="left:285px;width:2px;background:linear-gradient(#000 89.8px,#c78100 90.4px,#c4a100 94.3px,#b4c400 99.3px,#90c800 109.3px,#48c408 118.2px,#20b818 128.2px,#10a830 134.9px,#10a0b0 145.2px,#1070d0 146.1px,#0038c8 155.6px,#0048d0 181.0px,#0060d8 195.6px,#0090e0 205.1px,#30e0d8 209.6px,#20d820 212.0px,#38d008 224.0px,#a0d800 236.5px,#d8e000 248.1px,#f0a000 254.8px,#f06000 257.2px,#e83000 257.7px,#000 256.4px)"></i>
<i style="left:287px;width:2px;background:linear-gradient(#000 91.7px,#c87f00 91.7px,#c5a000 94.7px,#b6c400 99.7px,#90c800 109.8px,#48c408 118.8px,#20b818 129.0px,#10a830 135.7px,#10a0b0 146.1px,#1070d0 146.9px,#0038c8 156.5px,#0048d0 181.8px,#0060d8 196.4px,#0090e0 205.9px,#30e0d8 210.3px,#20d820 212.7px,#38d008 224.7px,#a0d800 237.2px,#d8e000 248.8px,#f0a000 255.5px,#f06000 257.9px,#e83000 258.4px,#000 256.8px)"></i>
<i style="left:289px;width:2px;background:linear-gradient(#000 91.5px,#c97d00 91.5px,#c69f00 95.1px,#b7c400 100.2px,#90c800 110.4px,#48c408 119.5px,#20b818 129.7px,#10a830 136.5px,#10a0b0 147.0px,#1070d0 147.8px,#0038c8 157.3px,#0048d0 182.6px,#0060d8 197.2px,#0090e0 206.7px,#30e0d8 211.1px,#20d820 213.5px,#38d008 225.5px,#a0d800 238.0px,#d8e000 249.5px,#f0a000 256.2px,#f06000 258.6px,#e83000 259.1px,#000 257.6px)"></i>
<i style="left:291px;width:2px;background:linear-gradient(#000 91.1px,#ca7b00 91.5px,#c89e00 95.5px,#b9c400 100.6px,#90c800 110.9px,#48c408 120.1px,#20b818 130.4px,#10a830 137.2px,#10a0b0 147.8px,#1070d0 148.7px,#0038c8 158.2px,#0048d0 183.4px,#0060d8 198.0px,#0090e0 207.4px,#30e0d8 211.9px,#20d820 214.2px,#38d008 226.2px,#a0d800 238.7px,#d8e000 250.2px,#f0a000 256.9px,#f06000 259.3px,#e83000 259.8px,#000 259.6px)"></i>
<i style="left:293px;width:2px;background:linear-gradient(#000 91.1px,#cb7a00 91.8px,#c99d00 95.9px,#bbc400 101.1px,#90c800 111.5px,#48c408 120.7px,#20b818 131.1px,#10a830 138.0px,#10a0b0 148.7px,#1070d0 149.6px,#0038c8 159.0px,#0048d0 184.2px,#0060d8 198.7px,#0090e0 208.2px,#30e0d8 212.6px,#20d820 215.0px,#38d008 227.0px,#a0d800 239.4px,#d8e000 250.9px,#f0a000 257.6px,#f06000 260.0px,#e83000 260.4px,#000 260.7px)"></i>
<i style="left:295px;width:2px;background:linear-gradient(#000 92.4px,#cc7800 92.4px,#ca9c00 96.4px,#bcc400 101.6px,#90c800 112.0px,#48c408 121.3px,#20b818 131.8px,#10a830 138.7px,#10a0b0 149.5px,#1070d0 150.3px,#0038c8 159.8px,#0048d0 185.0px,#0060d8 199.5px,#0090e0 209.0px,#30e0d8 213.4px,#20d820 215.8px,#38d008 227.7px,#a0d800 240.1px,#d8e000 251.5px,#f0a000 258.2px,#f06000 260.6px,#e83000 261.1px,#000 260.6px)"></i>
<i style="left:297px;width:2px;background:linear-gradient(#000 93.5px,#cd7600 93.5px,#cc9b00 97.0px,#bec400 102.2px,#90c800 112.6px,#48c408 121.9px,#20b818 132.4px,#10a830 139.4px,#10a0b0 150.1px,#1070d0 151.0px,#0038c8 160.4px,#0048d0 185.7px,#0060d8 200.2px,#0090e0 209.7px,#30e0d8 214.1px,#20d820 216.5px,#38d008 228.4px,#a0d800 240.8px,#d8e000 252.2px,#f0a000 258.9px,#f06000 261.3px,#e83000 261.7px,#000 260.7px)"></i>
<i style="left:299px;width:2px;background:linear-gradient(#000 92.8px,#ce7400 93.5px,#cd9a00 97.6px,#c0c400 102.8px,#90c800 113.3px,#48c408 122.6px,#20b818 133.0px,#10a830 140.0px,#10a0b0 150.8px,#1070d0 151.6px,#0038c8 161.1px,#0048d0 186.4px,#0060d8 201.0px,#0090e0 210.4px,#30e0d8 214.9px,#20d820 217.3px,#38d008 229.1px,#a0d800 241.5px,#d8e000 252.9px,#f0a000 259.5px,#f06000 261.9px,#e83000 262.4px,#000 262.0px)"></i>
<i style="left:301px;width:2px;background:linear-gradient(#000 93.8px,#cf7300 94.1px,#ce9900 98.2px,#c1c400 103.4px,#90c800 113.9px,#48c408 123.2px,#20b818 133.7px,#10a830 140.6px,#10a0b0 151.4px,#1070d0 152.3px,#0038c8 161.8px,#0048d0 187.1px,#0060d8 201.7px,#0090e0 211.2px,#30e0d8 215.6px,#20d820 218.0px,#38d008 229.8px,#a0d800 242.2px,#d8e000 253.6px,#f0a000 260.2px,#f06000 262.6px,#e83000 263.0px,#000 262.0px)"></i>
<i style="left:303px;width:2px;background:linear-gradient(#000 95.7px,#d07100 95.7px,#cf9800 98.8px,#c3c400 104.0px,#90c800 114.5px,#48c408 123.8px,#20b818 134.3px,#10a830 141.3px,#10a0b0 152.1px,#1070d0 152.9px,#0038c8 162.4px,#0048d0 187.8px,#0060d8 202.4px,#0090e0 211.9px,#30e0d8 216.4px,#20d820 218.7px,#38d008 230.6px,#a0d800 242.9px,#d8e000 254.2px,#f0a000 260.8px,#f06000 263.2px,#e83000 263.7px,#000 264.9px)"></i>
<i style="left:305px;width:2px;background:linear-gradient(#000 94.4px,#d07000 95.3px,#d09800 99.4px,#c4c400 104.6px,#90c800 115.1px,#48c408 124.4px,#20b818 134.9px,#10a830 141.9px,#10a0b0 152.7px,#1070d0 153.6px,#0038c8 163.1px,#0048d0 188.5px,#0060d8 203.1px,#0090e0 212.7px,#30e0d8 217.1px,#20d820 219.5px,#38d008 231.3px,#a0d800 243.5px,#d8e000 254.9px,#f0a000 261.5px,#f06000 263.8px,#e83000 264.3px,#000 263.8px)"></i>
<i style="left:307px;width:2px;background:linear-gradient(#000 95.3px,#d07000 95.9px,#d09800 100.0px,#c4c400 105.2px,#90c800 115.7px,#48c408 125.1px,#20b818 135.6px,#10a830 142.6px,#10a0b0 153.4px,#1070d0 154.2px,#0038c8 163.8px,#0048d0 189.2px,#0060d8 203.9px,#0090e0 213.4px,#30e0d8 217.9px,#20d820 220.2px,#38d008 232.0px,#a0d800 244.2px,#d8e000 255.5px,#f0a000 262.1px,#f06000 264.4px,#e83000 264.9px,#000 264.7px)"></i>
<i style="left:309px;width:2px;background:linear-gradient(#000 96.0px,#d07000 96.5px,#d09800 100.6px,#c4c400 105.8px,#90c800 116.3px,#48c408 125.7px,#20b818 136.2px,#10a830 143.2px,#10a0b0 154.0px,#1070d0 154.9px,#0038c8 164.4px,#0048d0 189.9px,#0060d8 204.6px,#0090e0 214.2px,#30e0d8 218.6px,#20d820 221.0px,#38d008 232.7px,#a0d800 244.9px,#d8e000 256.1px,#f0a000 262.7px,#f06000 265.0px,#e83000 265.5px,#000 265.5px)"></i>
<i style="left:311px;width:2px;background:linear-gradient(#000 98.1px,#d07000 98.1px,#d09800 101.2px,#c4c400 106.4px,#90c800 117.0px,#48c408 126.3px,#20b818 136.8px,#10a830 143.8px,#10a0b0 154.6px,#1070d0 155.5px,#0038c8 165.1px,#0048d0 190.6px,#0060d8 205.3px,#0090e0 214.9px,#30e0d8 219.4px,#20d820 221.7px,#38d008 233.4px,#a0d800 245.5px,#d8e000 256.8px,#f0a000 263.3px,#f06000 265.6px,#e83000 266.1px,#000 265.7px)"></i>
<i style="left:313px;width:2px;background:linear-gradient(#000 98.1px,#d07000 98.1px,#d09800 101.8px,#c4c400 107.1px,#90c800 117.6px,#48c408 126.9px,#20b818 137.5px,#10a830 144.5px,#10a0b0 155.3px,#1070d0 156.2px,#0038c8 165.8px,#0048d0 191.3px,#0060d8 206.1px,#0090e0 215.6px,#30e0d8 220.1px,#20d820 222.5px,#38d008 234.1px,#a0d800 246.2px,#d8e000 257.4px,#f0a000 263.9px,#f06000 266.2px,#e83000 266.7px,#000 267.0px)"></i>
<i style="left:315px;width:2px;background:linear-gradient(#000 98.9px,#d07000 98.9px,#d09800 102.4px,#c4c400 107.7px,#90c800 118.2px,#48c408 127.6px,#20b818 138.1px,#10a830 145.1px,#10a0b0 155.9px,#1070d0 156.8px,#0038c8 166.4px,#0048d0 192.1px,#0060d8 206.8px,#0090e0 216.4px,#30e0d8 220.9px,#20d820 223.2px,#38d008 234.8px,#a0d800 246.9px,#d8e000 258.0px,#f0a000 264.5px,#f06000 266.8px,#e83000 267.3px,#000 265.7px)"></i>
<i style="left:317px;width:2px;background:linear-gradient(#000 99.5px,#d07000 99.5px,#d09800 103.0px,#c4c400 108.3px,#90c800 118.8px,#48c408 128.2px,#20b818 138.7px,#10a830 145.8px,#10a0b0 156.6px,#1070d0 157.5px,#0038c8 167.1px,#0048d0 192.8px,#0060d8 207.5px,#0090e0 217.1px,#30e0d8 221.6px,#20d820 223.9px,#38d008 235.5px,#a0d800 247.5px,#d8e000 258.6px,#f0a000 265.1px,#f06000 267.4px,#e83000 267.9px,#000 269.5px)"></i>
<i style="left:319px;width:2px;background:linear-gradient(#000 99.7px,#d07000 99.7px,#d09800 103.6px,#c4c400 108.9px,#90c800 119.4px,#48c408 128.8px,#20b818 139.4px,#10a830 146.4px,#10a0b0 157.2px,#1070d0 158.1px,#0038c8 167.8px,#0048d0 193.5px,#0060d8 208.2px,#0090e0 217.9px,#30e0d8 222.4px,#20d820 224.7px,#38d008 236.2px,#a0d800 248.1px,#d8e000 259.1px,#f0a000 265.6px,#f06000 268.0px,#e83000 268.5px,#000 267.7px)"></i>
<i style="left:321px;width:2px;background:linear-gradient(#000 100.5px,#d07000 100.5px,#d09800 104.2px,#c4c400 109.5px,#90c800 120.0px,#48c408 129.4px,#20b818 140.0px,#10a830 147.0px,#10a0b0 157.9px,#1070d0 158.8px,#0038c8 168.4px,#0048d0 194.2px,#0060d8 209.0px,#0090e0 218.6px,#30e0d8 223.1px,#20d820 225.4px,#38d008 236.9px,#a0d800 248.8px,#d8e000 259.7px,#f0a000 266.2px,#f06000 268.6px,#e83000 269.1px,#000 269.9px)"></i>
<i style="left:323px;width:2px;background:linear-gradient(#000 101.1px,#d07000 101.1px,#d09800 104.8px,#c4c400 110.1px,#90c800 120.7px,#48c408 130.1px,#20b818 140.6px,#10a830 147.7px,#10a0b0 158.5px,#1070d0 159.4px,#0038c8 169.1px,#0048d0 194.9px,#0060d8 209.7px,#0090e0 219.4px,#30e0d8 223.9px,#20d820 226.1px,#38d008 237.6px,#a0d800 249.4px,#d8e000 260.3px,#f0a000 266.8px,#f06000 269.2px,#e83000 269.7px,#000 268.4px)"></i>
<i style="left:325px;width:2px;background:linear-gradient(#000 102.4px,#d07000 102.4px,#d09800 105.4px,#c4c400 110.7px,#90c800 121.3px,#48c408 130.7px,#20b818 141.3px,#10a830 148.3px,#10a0b0 159.2px,#1070d0 160.1px,#0038c8 169.8px,#0048d0 195.6px,#0060d8 210.4px,#0090e0 220.1px,#30e0d8 224.6px,#20d820 226.9px,#38d008 238.3px,#a0d800 250.1px,#d8e000 260.9px,#f0a000 267.4px,#f06000 269.8px,#e83000 270.4px,#000 271.9px)"></i>
<i style="left:327px;width:2px;background:linear-gradient(#000 101.7px,#d07000 101.9px,#d09800 106.0px,#c4c400 111.3px,#90c800 121.9px,#48c408 131.3px,#20b818 141.9px,#10a830 149.0px,#10a0b0 159.8px,#1070d0 160.7px,#0038c8 170.4px,#0048d0 196.3px,#0060d8 211.2px,#0090e0 220.8px,#30e0d8 225.4px,#20d820 227.6px,#38d008 239.0px,#a0d800 250.7px,#d8e000 261.5px,#f0a000 268.0px,#f06000 270.5px,#e83000 271.0px,#000 271.2px)"></i>
<i style="left:329px;width:2px;background:linear-gradient(#000 101.4px,#d07000 102.5px,#d09800 106.6px,#c4c400 111.9px,#90c800 122.5px,#48c408 131.9px,#20b818 142.5px,#10a830 149.6px,#10a0b0 160.5px,#1070d0 161.4px,#0038c8 171.1px,#0048d0 197.0px,#0060d8 211.9px,#0090e0 221.6px,#30e0d8 226.1px,#20d820 228.4px,#38d008 239.7px,#a0d800 251.4px,#d8e000 262.1px,#f0a000 268.7px,#f06000 271.1px,#e83000 271.7px,#000 273.3px)"></i>
<i style="left:331px;width:2px;background:linear-gradient(#000 103.9px,#d07000 103.9px,#d09800 107.2px,#c4c400 112.5px,#90c800 123.1px,#48c408 132.6px,#20b818 143.2px,#10a830 150.2px,#10a0b0 161.1px,#1070d0 162.0px,#0038c8 171.8px,#0048d0 197.7px,#0060d8 212.6px,#0090e0 222.3px,#30e0d8 226.9px,#20d820 229.1px,#38d008 240.4px,#a0d800 252.1px,#d8e000 262.8px,#f0a000 269.3px,#f06000 271.8px,#e83000 272.3px,#000 272.6px)"></i>
<i style="left:333px;width:2px;background:linear-gradient(#000 104.3px,#d07000 104.3px,#d09800 107.8px,#c4c400 113.1px,#90c800 123.8px,#48c408 133.2px,#20b818 143.8px,#10a830 150.9px,#10a0b0 161.8px,#1070d0 162.7px,#0038c8 172.4px,#0048d0 198.4px,#0060d8 213.3px,#0090e0 223.1px,#30e0d8 227.6px,#20d820 229.8px,#38d008 241.1px,#a0d800 252.7px,#d8e000 263.4px,#f0a000 270.0px,#f06000 272.5px,#e83000 273.0px,#000 271.6px)"></i>
<i style="left:335px;width:2px;background:linear-gradient(#000 103.8px,#d07000 104.3px,#d09800 108.4px,#c4c400 113.7px,#90c800 124.4px,#48c408 133.8px,#20b818 144.4px,#10a830 151.5px,#10a0b0 162.4px,#1070d0 163.3px,#0038c8 173.1px,#0048d0 199.1px,#0060d8 214.1px,#0090e0 223.8px,#30e0d8 228.4px,#20d820 230.6px,#38d008 241.8px,#a0d800 253.4px,#d8e000 264.1px,#f0a000 270.6px,#f06000 273.1px,#e83000 273.7px,#000 272.5px)"></i>
<i style="left:337px;width:2px;background:linear-gradient(#000 105.1px,#d07000 105.1px,#d09800 109.0px,#c4c400 114.3px,#90c800 125.0px,#48c408 134.4px,#20b818 145.0px,#10a830 152.1px,#10a0b0 163.0px,#1070d0 163.9px,#0038c8 173.7px,#0048d0 199.8px,#0060d8 214.8px,#0090e0 224.6px,#30e0d8 229.2px,#20d820 231.4px,#38d008 242.6px,#a0d800 254.2px,#d8e000 264.8px,#f0a000 271.3px,#f06000 273.8px,#e83000 274.4px,#000 272.7px)"></i>
<i style="left:339px;width:2px;background:linear-gradient(#000 106.4px,#d07000 106.4px,#d09800 109.6px,#c4c400 114.9px,#90c800 125.6px,#48c408 135.0px,#20b818 145.6px,#10a830 152.7px,#10a0b0 163.6px,#1070d0 164.5px,#0038c8 174.3px,#0048d0 200.5px,#0060d8 215.6px,#0090e0 225.4px,#30e0d8 230.0px,#20d820 232.2px,#38d008 243.4px,#a0d800 254.9px,#d8e000 265.5px,#f0a000 272.0px,#f06000 274.6px,#e83000 275.2px,#000 274.9px)"></i>
<i style="left:341px;width:2px;background:linear-gradient(#000 106.0px,#d07000 106.1px,#d09800 110.2px,#c4c400 115.5px,#90c800 126.2px,#48c408 135.6px,#20b818 146.2px,#10a830 153.3px,#10a0b0 164.2px,#1070d0 165.1px,#0038c8 175.0px,#0048d0 201.2px,#0060d8 216.3px,#0090e0 226.2px,#30e0d8 230.8px,#20d820 233.0px,#38d008 244.1px,#a0d800 255.6px,#d8e000 266.2px,#f0a000 272.7px,#f06000 275.3px,#e83000 275.9px,#000 274.4px)"></i>
<i style="left:343px;width:2px;background:linear-gradient(#000 107.1px,#d07000 107.1px,#d09800 110.8px,#c4c400 116.1px,#90c800 126.8px,#48c408 136.2px,#20b818 146.8px,#10a830 153.9px,#10a0b0 164.8px,#1070d0 165.7px,#0038c8 175.6px,#0048d0 201.9px,#0060d8 217.1px,#0090e0 227.0px,#30e0d8 231.6px,#20d820 233.8px,#38d008 244.9px,#a0d800 256.3px,#d8e000 266.8px,#f0a000 273.4px,#f06000 276.0px,#e83000 276.6px,#000 277.7px)"></i>
<i style="left:345px;width:2px;background:linear-gradient(#000 107.6px,#d07000 107.6px,#d09800 111.4px,#c4c400 116.7px,#90c800 127.4px,#48c408 136.8px,#20b818 147.4px,#10a830 154.5px,#10a0b0 165.4px,#1070d0 166.3px,#0038c8 176.2px,#0048d0 202.7px,#0060d8 217.9px,#0090e0 227.8px,#30e0d8 232.4px,#20d820 234.6px,#38d008 245.7px,#a0d800 257.1px,#d8e000 267.5px,#f0a000 274.1px,#f06000 276.7px,#e83000 277.4px,#000 276.5px)"></i>
<i style="left:347px;width:2px;background:linear-gradient(#000 108.6px,#d07000 108.6px,#d09800 112.0px,#c4c400 117.3px,#90c800 128.0px,#48c408 137.4px,#20b818 148.0px,#10a830 155.1px,#10a0b0 166.0px,#1070d0 166.9px,#0038c8 176.8px,#0048d0 203.4px,#0060d8 218.6px,#0090e0 228.6px,#30e0d8 233.2px,#20d820 235.3px,#38d008 246.4px,#a0d800 257.8px,#d8e000 268.2px,#f0a000 274.8px,#f06000 277.5px,#e83000 278.1px,#000 276.9px)"></i>
<i style="left:349px;width:2px;background:linear-gradient(#000 109.3px,#d07000 109.3px,#d09800 112.6px,#c4c400 117.9px,#90c800 128.6px,#48c408 138.0px,#20b818 148.6px,#10a830 155.7px,#10a0b0 166.6px,#1070d0 167.5px,#0038c8 177.5px,#0048d0 204.1px,#0060d8 219.4px,#0090e0 229.3px,#30e0d8 234.0px,#20d820 236.1px,#38d008 247.2px,#a0d800 258.5px,#d8e000 269.0px,#f0a000 275.5px,#f06000 278.2px,#e83000 278.9px,#000 279.3px)"></i>
<i style="left:351px;width:2px;background:linear-gradient(#000 108.6px,#d07000 109.1px,#d09800 113.2px,#c4c400 118.5px,#90c800 129.2px,#48c408 138.6px,#20b818 149.2px,#10a830 156.3px,#10a0b0 167.2px,#1070d0 168.1px,#0038c8 178.1px,#0048d0 204.8px,#0060d8 220.1px,#0090e0 230.1px,#30e0d8 234.8px,#20d820 236.9px,#38d008 248.0px,#a0d800 259.3px,#d8e000 269.7px,#f0a000 276.3px,#f06000 278.9px,#e83000 279.6px,#000 279.8px)"></i>
<i style="left:353px;width:2px;background:linear-gradient(#000 110.0px,#d07000 110.0px,#d09800 113.8px,#c4c400 119.1px,#90c800 129.8px,#48c408 139.2px,#20b818 149.8px,#10a830 156.9px,#10a0b0 167.8px,#1070d0 168.7px,#0038c8 178.7px,#0048d0 205.5px,#0060d8 220.9px,#0090e0 230.9px,#30e0d8 235.6px,#20d820 237.7px,#38d008 248.7px,#a0d800 260.0px,#d8e000 270.3px,#f0a000 277.0px,#f06000 279.7px,#e83000 280.3px,#000 279.7px)"></i>
<i style="left:355px;width:2px;background:linear-gradient(#000 111.1px,#d07000 111.1px,#d09800 114.4px,#c4c400 119.7px,#90c800 130.3px,#48c408 139.8px,#20b818 150.4px,#10a830 157.5px,#10a0b0 168.4px,#1070d0 169.3px,#0038c8 179.4px,#0048d0 206.3px,#0060d8 221.8px,#0090e0 231.9px,#30e0d8 236.6px,#20d820 238.7px,#38d008 249.6px,#a0d800 260.8px,#d8e000 271.1px,#f0a000 277.7px,#f06000 280.4px,#e83000 281.1px,#000 281.0px)"></i>
<i style="left:357px;width:2px;background:linear-gradient(#000 111.8px,#d07000 111.8px,#d09800 115.0px,#c4c400 120.3px,#90c800 130.9px,#48c408 140.3px,#20b818 151.0px,#10a830 158.0px,#10a0b0 169.0px,#1070d0 169.8px,#0038c8 180.0px,#0048d0 207.2px,#0060d8 222.8px,#0090e0 233.0px,#30e0d8 237.8px,#20d820 239.9px,#38d008 250.7px,#a0d800 261.7px,#d8e000 271.8px,#f0a000 278.4px,#f06000 281.1px,#e83000 281.8px,#000 283.2px)"></i>
<i style="left:359px;width:2px;background:linear-gradient(#000 110.4px,#d07000 111.4px,#d09800 115.5px,#c4c400 120.8px,#90c800 131.5px,#48c408 140.9px,#20b818 151.5px,#10a830 158.6px,#10a0b0 169.5px,#1070d0 170.4px,#0038c8 180.7px,#0048d0 208.1px,#0060d8 223.9px,#0090e0 234.2px,#30e0d8 239.0px,#20d820 241.0px,#38d008 251.7px,#a0d800 262.6px,#d8e000 272.6px,#f0a000 279.1px,#f06000 281.8px,#e83000 282.5px,#000 283.1px)"></i>
<i style="left:361px;width:2px;background:linear-gradient(#000 111.5px,#d07000 112.0px,#d09800 116.1px,#c4c400 121.4px,#90c800 132.0px,#48c408 141.5px,#20b818 152.1px,#10a830 159.2px,#10a0b0 170.1px,#1070d0 171.0px,#0038c8 181.3px,#0048d0 209.0px,#0060d8 225.0px,#0090e0 235.4px,#30e0d8 240.2px,#20d820 242.2px,#38d008 252.7px,#a0d800 263.5px,#d8e000 273.4px,#f0a000 279.8px,#f06000 282.5px,#e83000 283.2px,#000 284.2px)"></i>
<i style="left:363px;width:2px;background:linear-gradient(#000 112.6px,#d07000 112.6px,#d09800 116.7px,#c4c400 122.0px,#90c800 132.6px,#48c408 142.0px,#20b818 152.6px,#10a830 159.7px,#10a0b0 170.6px,#1070d0 171.5px,#0038c8 182.0px,#0048d0 210.0px,#0060d8 226.0px,#0090e0 236.5px,#30e0d8 241.4px,#20d820 243.4px,#38d008 253.8px,#a0d800 264.4px,#d8e000 274.1px,#f0a000 280.5px,#f06000 283.1px,#e83000 283.8px,#000 283.7px)"></i>
<i style="left:365px;width:2px;background:linear-gradient(#000 114.0px,#d07000 114.0px,#d09800 117.2px,#c4c400 122.5px,#90c800 133.1px,#48c408 142.6px,#20b818 153.2px,#10a830 160.3px,#10a0b0 171.2px,#1070d0 172.1px,#0038c8 182.7px,#0048d0 210.9px,#0060d8 227.1px,#0090e0 237.7px,#30e0d8 242.6px,#20d820 244.6px,#38d008 254.8px,#a0d800 265.3px,#d8e000 274.8px,#f0a000 281.1px,#f06000 283.8px,#e83000 284.5px,#000 282.9px)"></i>
<i style="left:367px;width:2px;background:linear-gradient(#000 113.8px,#d07000 113.8px,#d09800 117.8px,#c4c400 123.1px,#90c800 133.7px,#48c408 143.1px,#20b818 153.8px,#10a830 160.8px,#10a0b0 171.8px,#1070d0 172.6px,#0038c8 183.3px,#0048d0 211.8px,#0060d8 228.1px,#0090e0 238.8px,#30e0d8 243.8px,#20d820 245.7px,#38d008 255.8px,#a0d800 266.2px,#d8e000 275.6px,#f0a000 281.8px,#f06000 284.5px,#e83000 285.2px,#000 284.5px)"></i>
<i style="left:369px;width:2px;background:linear-gradient(#000 113.1px,#d07000 114.2px,#d09800 118.3px,#c4c400 123.6px,#90c800 134.3px,#48c408 143.7px,#20b818 154.3px,#10a830 161.4px,#10a0b0 172.3px,#1070d0 173.2px,#0038c8 184.0px,#0048d0 212.7px,#0060d8 229.2px,#0090e0 240.0px,#30e0d8 245.0px,#20d820 246.9px,#38d008 256.9px,#a0d800 267.0px,#d8e000 276.3px,#f0a000 282.5px,#f06000 285.1px,#e83000 285.8px,#000 286.7px)"></i>
<i style="left:371px;width:2px;background:linear-gradient(#000 114.9px,#d07000 114.9px,#d09800 118.9px,#c4c400 124.2px,#90c800 134.8px,#48c408 144.3px,#20b818 154.9px,#10a830 162.0px,#10a0b0 172.9px,#1070d0 173.8px,#0038c8 184.6px,#0048d0 213.6px,#0060d8 230.3px,#0090e0 241.1px,#30e0d8 246.2px,#20d820 248.1px,#38d008 257.9px,#a0d800 267.9px,#d8e000 277.0px,#f0a000 283.1px,#f06000 285.8px,#e83000 286.5px,#000 287.9px)"></i>
<i style="left:373px;width:2px;background:linear-gradient(#000 115.6px,#d07000 115.6px,#d09800 119.4px,#c4c400 124.8px,#90c800 135.4px,#48c408 144.8px,#20b818 155.4px,#10a830 162.5px,#10a0b0 173.4px,#1070d0 174.3px,#0038c8 185.3px,#0048d0 214.5px,#0060d8 231.3px,#0090e0 242.3px,#30e0d8 247.4px,#20d820 249.2px,#38d008 258.9px,#a0d800 268.8px,#d8e000 277.8px,#f0a000 283.8px,#f06000 286.4px,#e83000 287.1px,#000 286.5px)"></i>
<i style="left:375px;width:2px;background:linear-gradient(#000 117.0px,#d07000 117.0px,#d09800 120.0px,#c4c400 125.3px,#90c800 135.9px,#48c408 145.4px,#20b818 156.0px,#10a830 163.1px,#10a0b0 174.0px,#1070d0 174.9px,#0038c8 185.9px,#0048d0 215.4px,#0060d8 232.4px,#0090e0 243.4px,#30e0d8 248.6px,#20d820 250.4px,#38d008 260.0px,#a0d800 269.7px,#d8e000 278.5px,#f0a000 284.5px,#f06000 287.1px,#e83000 287.8px,#000 286.3px)"></i>
<i style="left:377px;width:2px;background:linear-gradient(#000 115.4px,#d07000 116.4px,#d09800 120.6px,#c4c400 125.9px,#90c800 136.5px,#48c408 145.9px,#20b818 156.6px,#10a830 163.6px,#10a0b0 174.6px,#1070d0 175.4px,#0038c8 186.6px,#0048d0 216.3px,#0060d8 233.4px,#0090e0 244.6px,#30e0d8 249.8px,#20d820 251.6px,#38d008 261.0px,#a0d800 270.6px,#d8e000 279.3px,#f0a000 285.2px,#f06000 287.8px,#e83000 288.5px,#000 289.2px)"></i>
<i style="left:379px;width:2px;background:linear-gradient(#000 116.7px,#d07000 117.0px,#d09800 121.1px,#c4c400 126.4px,#90c800 137.1px,#48c408 146.5px,#20b818 157.1px,#10a830 164.2px,#10a0b0 175.1px,#1070d0 176.0px,#0038c8 187.2px,#0048d0 217.2px,#0060d8 234.5px,#0090e0 245.8px,#30e0d8 251.0px,#20d820 252.7px,#38d008 262.0px,#a0d800 271.5px,#d8e000 280.0px,#f0a000 285.9px,#f06000 288.5px,#e83000 289.2px,#000 288.5px)"></i>
<i style="left:381px;width:2px;background:linear-gradient(#000 118.4px,#d07000 118.4px,#d09800 121.7px,#c4c400 127.0px,#90c800 137.6px,#48c408 147.0px,#20b818 157.6px,#10a830 164.7px,#10a0b0 175.6px,#1070d0 176.5px,#0038c8 187.8px,#0048d0 218.0px,#0060d8 235.3px,#0090e0 246.6px,#30e0d8 251.9px,#20d820 253.6px,#38d008 262.9px,#a0d800 272.2px,#d8e000 280.7px,#f0a000 286.6px,#f06000 289.1px,#e83000 289.8px,#000 289.1px)"></i>
<i style="left:383px;width:2px;background:linear-gradient(#000 119.0px,#d07000 119.0px,#d09800 122.2px,#c4c400 127.5px,#90c800 138.1px,#48c408 147.5px,#20b818 158.1px,#10a830 165.1px,#10a0b0 176.0px,#1070d0 176.9px,#0038c8 188.3px,#0048d0 218.7px,#0060d8 236.1px,#0090e0 247.5px,#30e0d8 252.8px,#20d820 254.5px,#38d008 263.7px,#a0d800 273.0px,#d8e000 281.4px,#f0a000 287.2px,#f06000 289.8px,#e83000 290.5px,#000 291.0px)"></i>
<i style="left:385px;width:2px;background:linear-gradient(#000 118.2px,#d07000 118.6px,#d09800 122.7px,#c4c400 128.0px,#90c800 138.6px,#48c408 148.0px,#20b818 158.6px,#10a830 165.6px,#10a0b0 176.5px,#1070d0 177.4px,#0038c8 188.8px,#0048d0 219.4px,#0060d8 236.9px,#0090e0 248.4px,#30e0d8 253.7px,#20d820 255.4px,#38d008 264.5px,#a0d800 273.8px,#d8e000 282.1px,#f0a000 287.9px,#f06000 290.5px,#e83000 291.2px,#000 289.6px)"></i>
<i style="left:387px;width:2px;background:linear-gradient(#000 118.6px,#d07000 119.2px,#d09800 123.3px,#c4c400 128.6px,#90c800 139.1px,#48c408 148.5px,#20b818 159.1px,#10a830 166.1px,#10a0b0 176.9px,#1070d0 177.8px,#0038c8 189.3px,#0048d0 220.1px,#0060d8 237.7px,#0090e0 249.3px,#30e0d8 254.6px,#20d820 256.3px,#38d008 265.4px,#a0d800 274.5px,#d8e000 282.8px,#f0a000 288.6px,#f06000 291.2px,#e83000 291.9px,#000 293.6px)"></i>
<i style="left:389px;width:2px;background:linear-gradient(#000 119.5px,#d07000 119.7px,#d09800 123.8px,#c4c400 129.1px,#90c800 139.6px,#48c408 149.0px,#20b818 159.5px,#10a830 166.6px,#10a0b0 177.4px,#1070d0 178.3px,#0038c8 189.9px,#0048d0 220.8px,#0060d8 238.5px,#0090e0 250.1px,#30e0d8 255.5px,#20d820 257.2px,#38d008 266.2px,#a0d800 275.3px,#d8e000 283.6px,#f0a000 289.3px,#f06000 291.9px,#e83000 292.7px,#000 291.4px)"></i>
<i style="left:391px;width:2px;background:linear-gradient(#000 119.8px,#d07000 120.3px,#d09800 124.4px,#c4c400 129.6px,#90c800 140.1px,#48c408 149.5px,#20b818 160.0px,#10a830 167.0px,#10a0b0 177.9px,#1070d0 178.7px,#0038c8 190.4px,#0048d0 221.5px,#0060d8 239.4px,#0090e0 251.0px,#30e0d8 256.5px,#20d820 258.1px,#38d008 267.1px,#a0d800 276.1px,#d8e000 284.3px,#f0a000 290.0px,#f06000 292.6px,#e83000 293.4px,#000 294.8px)"></i>
<i style="left:393px;width:2px;background:linear-gradient(#000 120.0px,#d07000 120.8px,#d09800 124.9px,#c4c400 130.2px,#90c800 140.7px,#48c408 150.0px,#20b818 160.5px,#10a830 167.5px,#10a0b0 178.3px,#1070d0 179.2px,#0038c8 190.9px,#0048d0 222.2px,#0060d8 240.2px,#0090e0 251.9px,#30e0d8 257.4px,#20d820 259.0px,#38d008 267.9px,#a0d800 276.9px,#d8e000 285.0px,#f0a000 290.7px,#f06000 293.3px,#e83000 294.1px,#000 295.1px)"></i>
<i style="left:395px;width:2px;background:linear-gradient(#000 120.5px,#d07000 121.4px,#d09800 125.4px,#c4c400 130.7px,#90c800 141.2px,#48c408 150.5px,#20b818 161.0px,#10a830 168.0px,#10a0b0 178.8px,#1070d0 179.6px,#0038c8 191.4px,#0048d0 222.9px,#0060d8 241.0px,#0090e0 252.8px,#30e0d8 258.3px,#20d820 259.9px,#38d008 268.7px,#a0d800 277.6px,#d8e000 285.7px,#f0a000 291.4px,#f06000 294.0px,#e83000 294.8px,#000 296.5px)"></i>
<i style="left:397px;width:2px;background:linear-gradient(#000 122.0px,#d07000 122.0px,#d09800 126.0px,#c4c400 131.2px,#90c800 141.7px,#48c408 151.0px,#20b818 161.5px,#10a830 168.5px,#10a0b0 179.2px,#1070d0 180.1px,#0038c8 192.0px,#0048d0 223.6px,#0060d8 241.8px,#0090e0 253.6px,#30e0d8 259.2px,#20d820 260.8px,#38d008 269.6px,#a0d800 278.4px,#d8e000 286.4px,#f0a000 292.1px,#f06000 294.7px,#e83000 295.5px,#000 293.9px)"></i>
<i style="left:399px;width:2px;background:linear-gradient(#000 123.5px,#d07000 123.5px,#d09800 126.5px,#c4c400 131.7px,#90c800 142.2px,#48c408 151.5px,#20b818 162.0px,#10a830 168.9px,#10a0b0 179.7px,#1070d0 180.5px,#0038c8 192.5px,#0048d0 224.3px,#0060d8 242.6px,#0090e0 254.5px,#30e0d8 260.1px,#20d820 261.7px,#38d008 270.4px,#a0d800 279.2px,#d8e000 287.2px,#f0a000 292.8px,#f06000 295.5px,#e83000 296.2px,#000 295.8px)"></i>
<i style="left:401px;width:2px;background:linear-gradient(#000 123.6px,#d07000 123.6px,#d09800 127.1px,#c4c400 132.3px,#90c800 142.7px,#48c408 152.0px,#20b818 162.4px,#10a830 169.4px,#10a0b0 180.1px,#1070d0 181.0px,#0038c8 193.0px,#0048d0 225.0px,#0060d8 243.4px,#0090e0 255.4px,#30e0d8 261.0px,#20d820 262.6px,#38d008 271.3px,#a0d800 280.0px,#d8e000 287.9px,#f0a000 293.5px,#f06000 296.2px,#e83000 296.9px,#000 297.1px)"></i>
<i style="left:403px;width:2px;background:linear-gradient(#000 122.7px,#d07000 123.7px,#d09800 127.7px,#c4c400 132.9px,#90c800 143.3px,#48c408 152.5px,#20b818 162.9px,#10a830 169.8px,#10a0b0 180.5px,#1070d0 181.3px,#0038c8 193.4px,#0048d0 225.7px,#0060d8 244.2px,#0090e0 256.3px,#30e0d8 262.0px,#20d820 263.5px,#38d008 272.1px,#a0d800 280.8px,#d8e000 288.6px,#f0a000 294.2px,#f06000 296.9px,#e83000 297.7px,#000 296.3px)"></i>
<i style="left:405px;width:2px;background:linear-gradient(#000 123.5px,#d07000 124.4px,#d09800 128.4px,#c4c400 133.6px,#90c800 143.9px,#48c408 153.0px,#20b818 163.4px,#10a830 170.2px,#10a0b0 180.8px,#1070d0 181.7px,#0038c8 193.9px,#0048d0 226.4px,#0060d8 245.0px,#0090e0 257.2px,#30e0d8 262.9px,#20d820 264.5px,#38d008 273.0px,#a0d800 281.6px,#d8e000 289.3px,#f0a000 294.9px,#f06000 297.6px,#e83000 298.4px,#000 297.2px)"></i>
<i style="left:407px;width:2px;background:linear-gradient(#000 124.0px,#d07000 125.1px,#d09800 129.1px,#c4c400 134.2px,#90c800 144.5px,#48c408 153.6px,#20b818 163.8px,#10a830 170.7px,#10a0b0 181.2px,#1070d0 182.0px,#0038c8 194.3px,#0048d0 227.0px,#0060d8 245.9px,#0090e0 258.1px,#30e0d8 263.9px,#20d820 265.4px,#38d008 273.9px,#a0d800 282.4px,#d8e000 290.1px,#f0a000 295.6px,#f06000 298.3px,#e83000 299.1px,#000 297.5px)"></i>
<i style="left:409px;width:2px;background:linear-gradient(#000 126.9px,#d07000 126.9px,#d09800 129.7px,#c4c400 134.8px,#90c800 145.0px,#48c408 154.1px,#20b818 164.3px,#10a830 171.1px,#10a0b0 181.5px,#1070d0 182.4px,#0038c8 194.8px,#0048d0 227.7px,#0060d8 246.7px,#0090e0 259.1px,#30e0d8 264.8px,#20d820 266.4px,#38d008 274.8px,#a0d800 283.2px,#d8e000 290.8px,#f0a000 296.3px,#f06000 299.0px,#e83000 299.8px,#000 298.3px)"></i>
<i style="left:411px;width:2px;background:linear-gradient(#000 126.5px,#d07000 126.5px,#d09800 130.4px,#c4c400 135.5px,#90c800 145.6px,#48c408 154.6px,#20b818 164.7px,#10a830 171.5px,#10a0b0 181.9px,#1070d0 182.7px,#0038c8 195.2px,#0048d0 228.4px,#0060d8 247.5px,#0090e0 260.0px,#30e0d8 265.8px,#20d820 267.3px,#38d008 275.6px,#a0d800 284.0px,#d8e000 291.5px,#f0a000 297.0px,#f06000 299.7px,#e83000 300.5px,#000 299.1px)"></i>
<i style="left:413px;width:2px;background:linear-gradient(#000 126.5px,#d07000 127.2px,#d09800 131.1px,#c4c400 136.1px,#90c800 146.2px,#48c408 155.1px,#20b818 165.2px,#10a830 171.9px,#10a0b0 182.2px,#1070d0 183.1px,#0038c8 195.6px,#0048d0 229.1px,#0060d8 248.3px,#0090e0 260.9px,#30e0d8 266.7px,#20d820 268.2px,#38d008 276.5px,#a0d800 284.8px,#d8e000 292.2px,#f0a000 297.7px,#f06000 300.4px,#e83000 301.2px,#000 302.1px)"></i>
<i style="left:415px;width:2px;background:linear-gradient(#000 128.9px,#d07000 128.9px,#d09800 131.8px,#c4c400 136.8px,#90c800 146.8px,#48c408 155.7px,#20b818 165.7px,#10a830 172.3px,#10a0b0 182.6px,#1070d0 183.4px,#0038c8 196.1px,#0048d0 229.8px,#0060d8 249.2px,#0090e0 261.8px,#30e0d8 267.7px,#20d820 269.2px,#38d008 277.4px,#a0d800 285.6px,#d8e000 293.0px,#f0a000 298.4px,#f06000 301.1px,#e83000 301.9px,#000 301.8px)"></i>
<i style="left:417px;width:2px;background:linear-gradient(#000 127.4px,#d07000 128.6px,#d09800 132.4px,#c4c400 137.4px,#90c800 147.3px,#48c408 156.2px,#20b818 166.1px,#10a830 172.7px,#10a0b0 183.0px,#1070d0 183.8px,#0038c8 196.5px,#0048d0 230.5px,#0060d8 250.0px,#0090e0 262.7px,#30e0d8 268.7px,#20d820 270.1px,#38d008 278.2px,#a0d800 286.4px,#d8e000 293.7px,#f0a000 299.1px,#f06000 301.8px,#e83000 302.6px,#000 304.4px)"></i>
<i style="left:419px;width:2px;background:linear-gradient(#000 128.2px,#d07000 129.3px,#d09800 133.1px,#c4c400 138.0px,#90c800 147.9px,#48c408 156.7px,#20b818 166.6px,#10a830 173.2px,#10a0b0 183.3px,#1070d0 184.1px,#0038c8 197.0px,#0048d0 231.1px,#0060d8 250.8px,#0090e0 263.6px,#30e0d8 269.6px,#20d820 271.1px,#38d008 279.1px,#a0d800 287.2px,#d8e000 294.4px,#f0a000 299.8px,#f06000 302.4px,#e83000 303.3px,#000 302.9px)"></i>
<i style="left:421px;width:2px;background:linear-gradient(#000 130.1px,#d07000 130.1px,#d09800 133.8px,#c4c400 138.7px,#90c800 148.5px,#48c408 157.2px,#20b818 167.0px,#10a830 173.6px,#10a0b0 183.7px,#1070d0 184.5px,#0038c8 197.4px,#0048d0 231.8px,#0060d8 251.6px,#0090e0 264.5px,#30e0d8 270.6px,#20d820 272.0px,#38d008 280.0px,#a0d800 287.9px,#d8e000 295.1px,#f0a000 300.5px,#f06000 303.1px,#e83000 303.9px,#000 305.4px)"></i>
<i style="left:423px;width:2px;background:linear-gradient(#000 131.4px,#d07000 131.4px,#d09800 134.4px,#c4c400 139.3px,#90c800 149.1px,#48c408 157.7px,#20b818 167.5px,#10a830 174.0px,#10a0b0 184.0px,#1070d0 184.8px,#0038c8 197.8px,#0048d0 232.5px,#0060d8 252.4px,#0090e0 265.5px,#30e0d8 271.5px,#20d820 272.9px,#38d008 280.9px,#a0d800 288.7px,#d8e000 295.8px,#f0a000 301.2px,#f06000 303.8px,#e83000 304.6px,#000 305.0px)"></i>
<i style="left:425px;width:2px;background:linear-gradient(#000 131.0px,#d07000 131.3px,#d09800 135.0px,#c4c400 139.9px,#90c800 149.6px,#48c408 158.2px,#20b818 168.0px,#10a830 174.4px,#10a0b0 184.4px,#1070d0 185.2px,#0038c8 198.3px,#0048d0 233.1px,#0060d8 253.1px,#0090e0 266.2px,#30e0d8 272.3px,#20d820 273.7px,#38d008 281.6px,#a0d800 289.4px,#d8e000 296.5px,#f0a000 301.9px,#f06000 304.5px,#e83000 305.3px,#000 306.5px)"></i>
<i style="left:427px;width:2px;background:linear-gradient(#000 132.7px,#d07000 132.7px,#d09800 135.5px,#c4c400 140.4px,#90c800 150.1px,#48c408 158.7px,#20b818 168.4px,#10a830 174.9px,#10a0b0 184.9px,#1070d0 185.7px,#0038c8 198.8px,#0048d0 233.6px,#0060d8 253.7px,#0090e0 266.8px,#30e0d8 272.9px,#20d820 274.3px,#38d008 282.2px,#a0d800 290.1px,#d8e000 297.1px,#f0a000 302.5px,#f06000 305.2px,#e83000 306.0px,#000 307.4px)"></i>
<i style="left:429px;width:2px;background:linear-gradient(#000 132.8px,#d07000 132.8px,#d09800 136.1px,#c4c400 140.9px,#90c800 150.6px,#48c408 159.2px,#20b818 168.9px,#10a830 175.4px,#10a0b0 185.3px,#1070d0 186.1px,#0038c8 199.2px,#0048d0 234.2px,#0060d8 254.2px,#0090e0 267.3px,#30e0d8 273.4px,#20d820 274.8px,#38d008 282.8px,#a0d800 290.7px,#d8e000 297.8px,#f0a000 303.2px,#f06000 305.9px,#e83000 306.7px,#000 305.3px)"></i>
<i style="left:431px;width:2px;background:linear-gradient(#000 132.3px,#d07000 132.8px,#d09800 136.6px,#c4c400 141.4px,#90c800 151.1px,#48c408 159.7px,#20b818 169.4px,#10a830 175.8px,#10a0b0 185.8px,#1070d0 186.6px,#0038c8 199.7px,#0048d0 234.7px,#0060d8 254.8px,#0090e0 267.9px,#30e0d8 274.0px,#20d820 275.4px,#38d008 283.4px,#a0d800 291.3px,#d8e000 298.4px,#f0a000 303.8px,#f06000 306.5px,#e83000 307.4px,#000 307.3px)"></i>
<i style="left:433px;width:2px;background:linear-gradient(#000 133.3px,#d07000 133.3px,#d09800 137.1px,#c4c400 141.9px,#90c800 151.6px,#48c408 160.2px,#20b818 169.9px,#10a830 176.3px,#10a0b0 186.3px,#1070d0 187.1px,#0038c8 200.2px,#0048d0 235.2px,#0060d8 255.3px,#0090e0 268.4px,#30e0d8 274.6px,#20d820 276.0px,#38d008 284.0px,#a0d800 291.9px,#d8e000 299.0px,#f0a000 304.5px,#f06000 307.2px,#e83000 308.1px,#000 309.3px)"></i>
<i style="left:435px;width:2px;background:linear-gradient(#000 133.2px,#d07000 133.8px,#d09800 137.6px,#c4c400 142.4px,#90c800 152.1px,#48c408 160.7px,#20b818 170.3px,#10a830 176.8px,#10a0b0 186.7px,#1070d0 187.5px,#0038c8 200.7px,#0048d0 235.7px,#0060d8 255.9px,#0090e0 269.0px,#30e0d8 275.1px,#20d820 276.6px,#38d008 284.6px,#a0d800 292.5px,#d8e000 299.6px,#f0a000 305.1px,#f06000 307.9px,#e83000 308.8px,#000 309.4px)"></i>
<i style="left:437px;width:2px;background:linear-gradient(#000 134.0px,#d07000 134.3px,#d09800 138.1px,#c4c400 142.9px,#90c800 152.6px,#48c408 161.2px,#20b818 170.8px,#10a830 177.2px,#10a0b0 187.2px,#1070d0 188.0px,#0038c8 201.1px,#0048d0 236.2px,#0060d8 256.4px,#0090e0 269.6px,#30e0d8 275.7px,#20d820 277.1px,#38d008 285.1px,#a0d800 293.1px,#d8e000 300.2px,#f0a000 305.8px,#f06000 308.6px,#e83000 309.5px,#000 310.4px)"></i>
<i style="left:439px;width:2px;background:linear-gradient(#000 134.1px,#d07000 134.9px,#d09800 138.6px,#c4c400 143.4px,#90c800 153.1px,#48c408 161.6px,#20b818 171.3px,#10a830 177.7px,#10a0b0 187.6px,#1070d0 188.4px,#0038c8 201.6px,#0048d0 236.8px,#0060d8 257.0px,#0090e0 270.1px,#30e0d8 276.3px,#20d820 277.7px,#38d008 285.7px,#a0d800 293.7px,#d8e000 300.8px,#f0a000 306.4px,#f06000 309.2px,#e83000 310.1px,#000 310.1px)"></i>
<i style="left:441px;width:2px;background:linear-gradient(#000 134.4px,#d07000 135.4px,#d09800 139.1px,#c4c400 143.9px,#90c800 153.6px,#48c408 162.1px,#20b818 171.8px,#10a830 178.2px,#10a0b0 188.1px,#1070d0 188.9px,#0038c8 202.1px,#0048d0 237.3px,#0060d8 257.5px,#0090e0 270.7px,#30e0d8 276.9px,#20d820 278.3px,#38d008 286.3px,#a0d800 294.3px,#d8e000 301.4px,#f0a000 307.1px,#f06000 309.9px,#e83000 310.8px,#000 309.8px)"></i>
<i style="left:443px;width:2px;background:linear-gradient(#000 136.9px,#d07000 136.9px,#d09800 139.6px,#c4c400 144.4px,#90c800 154.1px,#48c408 162.6px,#20b818 172.2px,#10a830 178.7px,#10a0b0 188.5px,#1070d0 189.3px,#0038c8 202.6px,#0048d0 237.8px,#0060d8 258.0px,#0090e0 271.3px,#30e0d8 277.4px,#20d820 278.8px,#38d008 286.9px,#a0d800 294.9px,#d8e000 302.1px,#f0a000 307.7px,#f06000 310.6px,#e83000 311.5px,#000 310.9px)"></i>
<i style="left:445px;width:2px;background:linear-gradient(#000 137.3px,#d07000 137.3px,#d09800 140.1px,#c4c400 144.9px,#90c800 154.6px,#48c408 163.1px,#20b818 172.7px,#10a830 179.1px,#10a0b0 189.0px,#1070d0 189.8px,#0038c8 203.0px,#0048d0 238.3px,#0060d8 258.6px,#0090e0 271.8px,#30e0d8 278.0px,#20d820 279.4px,#38d008 287.5px,#a0d800 295.5px,#d8e000 302.7px,#f0a000 308.4px,#f06000 311.3px,#e83000 312.2px,#000 312.3px)"></i>
<i style="left:447px;width:2px;background:linear-gradient(#000 135.8px,#d07000 136.9px,#d09800 140.6px,#c4c400 145.4px,#90c800 155.1px,#48c408 163.6px,#20b818 173.2px,#10a830 179.6px,#10a0b0 189.5px,#1070d0 190.3px,#0038c8 203.5px,#0048d0 238.8px,#0060d8 259.1px,#0090e0 272.4px,#30e0d8 278.6px,#20d820 280.0px,#38d008 288.1px,#a0d800 296.1px,#d8e000 303.3px,#f0a000 309.0px,#f06000 311.9px,#e83000 312.9px,#000 313.9px)"></i>
<i style="left:449px;width:2px;background:linear-gradient(#000 136.4px,#d07000 137.4px,#d09800 141.2px,#c4c400 146.0px,#90c800 155.5px,#48c408 164.1px,#20b818 173.7px,#10a830 180.1px,#10a0b0 189.9px,#1070d0 190.7px,#0038c8 204.0px,#0048d0 239.4px,#0060d8 259.7px,#0090e0 273.0px,#30e0d8 279.1px,#20d820 280.6px,#38d008 288.7px,#a0d800 296.7px,#d8e000 303.9px,#f0a000 309.6px,#f06000 312.6px,#e83000 313.6px,#000 314.7px)"></i>
<i style="left:451px;width:2px;background:linear-gradient(#000 136.8px,#d07000 137.9px,#d09800 141.7px,#c4c400 146.5px,#90c800 156.0px,#48c408 164.6px,#20b818 174.1px,#10a830 180.5px,#10a0b0 190.4px,#1070d0 191.2px,#0038c8 204.5px,#0048d0 239.9px,#0060d8 260.2px,#0090e0 273.5px,#30e0d8 279.7px,#20d820 281.1px,#38d008 289.3px,#a0d800 297.3px,#d8e000 304.5px,#f0a000 310.3px,#f06000 313.3px,#e83000 314.3px,#000 314.9px)"></i>
<i style="left:453px;width:2px;background:linear-gradient(#000 137.7px,#d07000 138.5px,#d09800 142.2px,#c4c400 147.0px,#90c800 156.5px,#48c408 165.0px,#20b818 174.6px,#10a830 181.0px,#10a0b0 190.8px,#1070d0 191.6px,#0038c8 204.9px,#0048d0 240.4px,#0060d8 260.8px,#0090e0 274.1px,#30e0d8 280.3px,#20d820 281.7px,#38d008 289.9px,#a0d800 297.9px,#d8e000 305.1px,#f0a000 310.9px,#f06000 314.0px,#e83000 314.9px,#000 314.4px)"></i>
<i style="left:455px;width:2px;background:linear-gradient(#000 140.1px,#d07000 140.1px,#d09800 142.7px,#c4c400 147.5px,#90c800 157.0px,#48c408 165.5px,#20b818 175.1px,#10a830 181.5px,#10a0b0 191.3px,#1070d0 192.1px,#0038c8 205.4px,#0048d0 240.9px,#0060d8 261.3px,#0090e0 274.6px,#30e0d8 280.9px,#20d820 282.3px,#38d008 290.5px,#a0d800 298.5px,#d8e000 305.7px,#f0a000 311.6px,#f06000 314.6px,#e83000 315.6px,#000 315.6px)"></i>
<i style="left:457px;width:2px;background:linear-gradient(#000 139.9px,#d07000 139.9px,#d09800 143.2px,#c4c400 148.0px,#90c800 157.5px,#48c408 166.0px,#20b818 175.6px,#10a830 181.9px,#10a0b0 191.7px,#1070d0 192.5px,#0038c8 205.9px,#0048d0 241.4px,#0060d8 261.9px,#0090e0 275.2px,#30e0d8 281.4px,#20d820 282.8px,#38d008 291.1px,#a0d800 299.1px,#d8e000 306.4px,#f0a000 312.2px,#f06000 315.3px,#e83000 316.3px,#000 317.2px)"></i>
<i style="left:459px;width:2px;background:linear-gradient(#000 139.1px,#d07000 140.0px,#d09800 143.7px,#c4c400 148.5px,#90c800 158.0px,#48c408 166.5px,#20b818 176.0px,#10a830 182.4px,#10a0b0 192.2px,#1070d0 193.0px,#0038c8 206.4px,#0048d0 241.9px,#0060d8 262.4px,#0090e0 275.8px,#30e0d8 282.0px,#20d820 283.4px,#38d008 291.7px,#a0d800 299.7px,#d8e000 307.0px,#f0a000 312.9px,#f06000 316.0px,#e83000 317.0px,#000 318.2px)"></i>
<i style="left:461px;width:2px;background:linear-gradient(#000 141.6px,#d07000 141.6px,#d09800 144.3px,#c4c400 149.1px,#90c800 158.6px,#48c408 167.1px,#20b818 176.6px,#10a830 183.0px,#10a0b0 192.7px,#1070d0 193.5px,#0038c8 206.7px,#0048d0 241.7px,#0060d8 261.8px,#0090e0 274.9px,#30e0d8 281.1px,#20d820 282.5px,#38d008 291.2px,#a0d800 299.6px,#d8e000 307.1px,#f0a000 313.4px,#f06000 316.6px,#e83000 317.7px,#000 316.5px)"></i>
<i style="left:463px;width:2px;background:linear-gradient(#000 141.3px,#d07000 141.3px,#d09800 144.9px,#c4c400 149.7px,#90c800 159.2px,#48c408 167.7px,#20b818 177.2px,#10a830 183.5px,#10a0b0 193.3px,#1070d0 194.1px,#0038c8 207.0px,#0048d0 241.4px,#0060d8 261.2px,#0090e0 274.1px,#30e0d8 280.2px,#20d820 281.7px,#38d008 290.7px,#a0d800 299.5px,#d8e000 307.3px,#f0a000 313.8px,#f06000 317.2px,#e83000 318.4px,#000 317.6px)"></i>
<i style="left:465px;width:2px;background:linear-gradient(#000 142.4px,#d07000 142.4px,#d09800 145.5px,#c4c400 150.3px,#90c800 159.8px,#48c408 168.2px,#20b818 177.7px,#10a830 184.1px,#10a0b0 193.8px,#1070d0 194.6px,#0038c8 207.3px,#0048d0 241.2px,#0060d8 260.6px,#0090e0 273.3px,#30e0d8 279.2px,#20d820 280.8px,#38d008 290.2px,#a0d800 299.3px,#d8e000 307.5px,#f0a000 314.3px,#f06000 317.9px,#e83000 319.1px,#000 317.4px)"></i>
<i style="left:467px;width:2px;background:linear-gradient(#000 142.5px,#d07000 142.5px,#d09800 146.1px,#c4c400 150.9px,#90c800 160.4px,#48c408 168.8px,#20b818 178.3px,#10a830 184.6px,#10a0b0 194.4px,#1070d0 195.2px,#0038c8 207.6px,#0048d0 240.9px,#0060d8 260.0px,#0090e0 272.5px,#30e0d8 278.3px,#20d820 280.0px,#38d008 289.7px,#a0d800 299.2px,#d8e000 307.7px,#f0a000 314.7px,#f06000 318.5px,#e83000 319.8px,#000 320.8px)"></i>
<i style="left:469px;width:2px;background:linear-gradient(#000 143.6px,#d07000 143.6px,#d09800 146.8px,#c4c400 151.5px,#90c800 161.0px,#48c408 169.4px,#20b818 178.9px,#10a830 185.2px,#10a0b0 194.9px,#1070d0 195.7px,#0038c8 207.9px,#0048d0 240.6px,#0060d8 259.4px,#0090e0 271.7px,#30e0d8 277.4px,#20d820 279.1px,#38d008 289.2px,#a0d800 299.1px,#d8e000 307.8px,#f0a000 315.2px,#f06000 319.1px,#e83000 320.5px,#000 319.1px)"></i>
<i style="left:471px;width:2px;background:linear-gradient(#000 144.5px,#d07000 144.5px,#d09800 147.4px,#c4c400 152.1px,#90c800 161.6px,#48c408 170.0px,#20b818 179.4px,#10a830 185.7px,#10a0b0 195.4px,#1070d0 196.2px,#0038c8 208.3px,#0048d0 240.4px,#0060d8 258.8px,#0090e0 270.8px,#30e0d8 276.5px,#20d820 278.2px,#38d008 288.7px,#a0d800 298.9px,#d8e000 308.0px,#f0a000 315.7px,#f06000 319.8px,#e83000 321.2px,#000 320.2px)"></i>
<i style="left:473px;width:2px;background:linear-gradient(#000 145.0px,#d07000 145.0px,#d09800 148.0px,#c4c400 152.7px,#90c800 162.1px,#48c408 170.5px,#20b818 180.0px,#10a830 186.3px,#10a0b0 196.0px,#1070d0 196.8px,#0038c8 208.6px,#0048d0 240.1px,#0060d8 258.2px,#0090e0 270.0px,#30e0d8 275.5px,#20d820 277.4px,#38d008 288.2px,#a0d800 298.8px,#d8e000 308.2px,#f0a000 316.1px,#f06000 320.4px,#e83000 321.9px,#000 321.8px)"></i>
<i style="left:475px;width:2px;background:linear-gradient(#000 144.1px,#d07000 144.9px,#d09800 148.6px,#c4c400 153.3px,#90c800 162.7px,#48c408 171.1px,#20b818 180.5px,#10a830 186.8px,#10a0b0 196.5px,#1070d0 197.3px,#0038c8 208.9px,#0048d0 239.8px,#0060d8 257.6px,#0090e0 269.2px,#30e0d8 274.6px,#20d820 276.5px,#38d008 287.7px,#a0d800 298.6px,#d8e000 308.3px,#f0a000 316.6px,#f06000 321.0px,#e83000 322.6px,#000 323.4px)"></i>
<i style="left:477px;width:2px;background:linear-gradient(#000 146.3px,#d07000 146.3px,#d09800 149.2px,#c4c400 153.9px,#90c800 163.3px,#48c408 171.7px,#20b818 181.1px,#10a830 187.4px,#10a0b0 197.1px,#1070d0 197.8px,#0038c8 209.2px,#0048d0 239.6px,#0060d8 257.0px,#0090e0 268.4px,#30e0d8 273.7px,#20d820 275.6px,#38d008 287.2px,#a0d800 298.5px,#d8e000 308.5px,#f0a000 317.0px,#f06000 321.7px,#e83000 323.3px,#000 323.9px)"></i>
<i style="left:479px;width:2px;background:linear-gradient(#000 147.3px,#d07000 147.3px,#d09800 149.8px,#c4c400 154.5px,#90c800 163.9px,#48c408 172.3px,#20b818 181.7px,#10a830 187.9px,#10a0b0 197.6px,#1070d0 198.4px,#0038c8 209.5px,#0048d0 239.3px,#0060d8 256.4px,#0090e0 267.6px,#30e0d8 272.8px,#20d820 274.8px,#38d008 286.7px,#a0d800 298.3px,#d8e000 308.7px,#f0a000 317.5px,#f06000 322.3px,#e83000 324.0px,#000 323.0px)"></i>
<i style="left:481px;width:2px;background:linear-gradient(#000 146.1px,#d07000 146.8px,#d09800 150.4px,#c4c400 155.1px,#90c800 164.5px,#48c408 172.8px,#20b818 182.2px,#10a830 188.5px,#10a0b0 198.1px,#1070d0 198.9px,#0038c8 209.9px,#0048d0 239.0px,#0060d8 255.8px,#0090e0 266.7px,#30e0d8 271.8px,#20d820 273.9px,#38d008 286.2px,#a0d800 298.2px,#d8e000 308.8px,#f0a000 318.0px,#f06000 323.0px,#e83000 324.7px,#000 323.3px)"></i>
<i style="left:483px;width:2px;background:linear-gradient(#000 147.5px,#d07000 147.5px,#d09800 151.0px,#c4c400 155.7px,#90c800 165.1px,#48c408 173.4px,#20b818 182.8px,#10a830 189.0px,#10a0b0 198.7px,#1070d0 199.5px,#0038c8 210.2px,#0048d0 238.8px,#0060d8 255.2px,#0090e0 265.9px,#30e0d8 270.9px,#20d820 273.0px,#38d008 285.7px,#a0d800 298.0px,#d8e000 309.0px,#f0a000 318.4px,#f06000 323.6px,#e83000 325.4px,#000 324.9px)"></i>
<i style="left:485px;width:2px;background:linear-gradient(#000 147.7px,#d07000 148.0px,#d09800 151.6px,#c4c400 156.3px,#90c800 165.7px,#48c408 174.0px,#20b818 183.4px,#10a830 189.6px,#10a0b0 199.2px,#1070d0 200.0px,#0038c8 210.5px,#0048d0 238.5px,#0060d8 254.6px,#0090e0 265.1px,#30e0d8 270.0px,#20d820 272.2px,#38d008 285.2px,#a0d800 297.9px,#d8e000 309.1px,#f0a000 318.9px,#f06000 324.3px,#e83000 326.1px,#000 325.9px)"></i>
<i style="left:487px;width:2px;background:linear-gradient(#000 148.1px,#d07000 148.7px,#d09800 152.3px,#c4c400 157.0px,#90c800 166.3px,#48c408 174.7px,#20b818 184.0px,#10a830 190.3px,#10a0b0 199.9px,#1070d0 200.7px,#0038c8 211.1px,#0048d0 238.9px,#0060d8 254.9px,#0090e0 265.3px,#30e0d8 270.2px,#20d820 272.3px,#38d008 285.5px,#a0d800 298.3px,#d8e000 309.6px,#f0a000 319.5px,#f06000 325.0px,#e83000 326.8px,#000 325.0px)"></i>
<i style="left:489px;width:2px;background:linear-gradient(#000 149.3px,#d07000 149.3px,#d09800 153.0px,#c4c400 157.7px,#90c800 167.0px,#48c408 175.3px,#20b818 184.7px,#10a830 190.9px,#10a0b0 200.6px,#1070d0 201.3px,#0038c8 211.7px,#0048d0 239.3px,#0060d8 255.2px,#0090e0 265.5px,#30e0d8 270.3px,#20d820 272.5px,#38d008 285.8px,#a0d800 298.7px,#d8e000 310.1px,#f0a000 320.1px,#f06000 325.7px,#e83000 327.6px,#000 326.7px)"></i>
<i style="left:491px;width:2px;background:linear-gradient(#000 149.9px,#d07000 150.0px,#d09800 153.6px,#c4c400 158.3px,#90c800 167.7px,#48c408 176.0px,#20b818 185.4px,#10a830 191.6px,#10a0b0 201.2px,#1070d0 202.0px,#0038c8 212.3px,#0048d0 239.7px,#0060d8 255.4px,#0090e0 265.7px,#30e0d8 270.5px,#20d820 272.7px,#38d008 286.1px,#a0d800 299.1px,#d8e000 310.6px,#f0a000 320.7px,#f06000 326.3px,#e83000 328.3px,#000 329.8px)"></i>
<i style="left:493px;width:2px;background:linear-gradient(#000 149.9px,#d07000 150.7px,#d09800 154.3px,#c4c400 159.0px,#90c800 168.3px,#48c408 176.7px,#20b818 186.0px,#10a830 192.3px,#10a0b0 201.9px,#1070d0 202.7px,#0038c8 212.9px,#0048d0 240.1px,#0060d8 255.7px,#0090e0 265.9px,#30e0d8 270.7px,#20d820 272.9px,#38d008 286.4px,#a0d800 299.5px,#d8e000 311.1px,#f0a000 321.3px,#f06000 327.0px,#e83000 329.0px,#000 329.5px)"></i>
<i style="left:495px;width:2px;background:linear-gradient(#000 151.7px,#d07000 151.7px,#d09800 155.0px,#c4c400 159.7px,#90c800 169.0px,#48c408 177.3px,#20b818 186.7px,#10a830 192.9px,#10a0b0 202.6px,#1070d0 203.3px,#0038c8 213.5px,#0048d0 240.5px,#0060d8 256.0px,#0090e0 266.1px,#30e0d8 270.8px,#20d820 273.1px,#38d008 286.7px,#a0d800 299.9px,#d8e000 311.6px,#f0a000 322.0px,#f06000 327.8px,#e83000 329.8px,#000 329.0px)"></i>
<i style="left:497px;width:2px;background:linear-gradient(#000 151.9px,#d07000 152.0px,#d09800 155.6px,#c4c400 160.3px,#90c800 169.7px,#48c408 178.0px,#20b818 187.4px,#10a830 193.6px,#10a0b0 203.2px,#1070d0 204.0px,#0038c8 214.1px,#0048d0 240.9px,#0060d8 256.3px,#0090e0 266.3px,#30e0d8 271.0px,#20d820 273.3px,#38d008 287.1px,#a0d800 300.4px,#d8e000 312.1px,#f0a000 322.7px,#f06000 328.6px,#e83000 330.6px,#000 332.2px)"></i>
<i style="left:499px;width:2px;background:linear-gradient(#000 152.3px,#d07000 152.7px,#d09800 156.3px,#c4c400 161.0px,#90c800 170.3px,#48c408 178.7px,#20b818 188.0px,#10a830 194.3px,#10a0b0 203.9px,#1070d0 204.7px,#0038c8 214.6px,#0048d0 241.2px,#0060d8 256.5px,#0090e0 266.5px,#30e0d8 271.2px,#20d820 273.4px,#38d008 287.4px,#a0d800 300.9px,#d8e000 312.8px,#f0a000 323.5px,#f06000 329.5px,#e83000 331.6px,#000 332.0px)"></i>
<i style="left:501px;width:2px;background:linear-gradient(#000 154.1px,#d07000 154.1px,#d09800 157.0px,#c4c400 161.7px,#90c800 171.0px,#48c408 179.3px,#20b818 188.7px,#10a830 194.9px,#10a0b0 204.6px,#1070d0 205.3px,#0038c8 215.2px,#0048d0 241.6px,#0060d8 256.8px,#0090e0 266.7px,#30e0d8 271.3px,#20d820 273.6px,#38d008 287.8px,#a0d800 301.5px,#d8e000 313.5px,#f0a000 324.4px,#f06000 330.5px,#e83000 332.7px,#000 331.5px)"></i>
<i style="left:503px;width:2px;background:linear-gradient(#000 155.2px,#d07000 155.2px,#d09800 157.6px,#c4c400 162.3px,#90c800 171.7px,#48c408 180.0px,#20b818 189.4px,#10a830 195.6px,#10a0b0 205.2px,#1070d0 206.0px,#0038c8 215.8px,#0048d0 242.0px,#0060d8 257.1px,#0090e0 266.9px,#30e0d8 271.5px,#20d820 273.8px,#38d008 288.2px,#a0d800 302.1px,#d8e000 314.3px,#f0a000 325.4px,#f06000 331.7px,#e83000 333.9px,#000 333.2px)"></i>
<i style="left:505px;width:2px;background:linear-gradient(#000 154.7px,#d07000 154.7px,#d09800 158.3px,#c4c400 163.0px,#90c800 172.3px,#48c408 180.7px,#20b818 190.0px,#10a830 196.3px,#10a0b0 205.9px,#1070d0 206.7px,#0038c8 216.4px,#0048d0 242.4px,#0060d8 257.4px,#0090e0 267.1px,#30e0d8 271.7px,#20d820 274.0px,#38d008 288.7px,#a0d800 302.8px,#d8e000 315.2px,#f0a000 326.5px,#f06000 332.9px,#e83000 335.1px,#000 334.3px)"></i>
<i style="left:507px;width:2px;background:linear-gradient(#000 155.2px,#d07000 155.3px,#d09800 159.0px,#c4c400 163.7px,#90c800 173.0px,#48c408 181.3px,#20b818 190.7px,#10a830 196.9px,#10a0b0 206.6px,#1070d0 207.3px,#0038c8 217.0px,#0048d0 242.8px,#0060d8 257.6px,#0090e0 267.3px,#30e0d8 271.8px,#20d820 274.2px,#38d008 289.1px,#a0d800 303.4px,#d8e000 315.9px,#f0a000 327.5px,#f06000 334.0px,#e83000 336.3px,#000 335.0px)"></i>
<i style="left:509px;width:2px;background:linear-gradient(#000 155.5px,#d07000 156.0px,#d09800 159.6px,#c4c400 164.3px,#90c800 173.7px,#48c408 182.0px,#20b818 191.4px,#10a830 197.6px,#10a0b0 207.2px,#1070d0 208.0px,#0038c8 217.6px,#0048d0 243.2px,#0060d8 257.9px,#0090e0 267.5px,#30e0d8 272.0px,#20d820 274.4px,#38d008 289.5px,#a0d800 304.0px,#d8e000 316.7px,#f0a000 328.4px,#f06000 335.1px,#e83000 337.5px,#000 336.5px)"></i>
<i style="left:511px;width:2px;background:linear-gradient(#000 156.8px,#d16a00 156.8px,#d19300 160.6px,#c6c100 165.5px,#94c800 174.7px,#4cc408 183.0px,#22b818 192.4px,#11a831 198.7px,#109fb0 207.9px,#1070d0 208.7px,#0038c8 218.2px,#0048d0 243.7px,#0060d8 258.4px,#0090e0 268.0px,#30e0d8 272.4px,#20d820 274.9px,#38d008 290.1px,#a0d800 304.7px,#d8e000 317.5px,#f0a000 329.4px,#f06000 336.2px,#e83000 338.6px,#000 336.5px)"></i>
<i style="left:513px;width:2px;background:linear-gradient(#000 157.2px,#d26300 157.3px,#d28d00 161.6px,#c7bd00 166.6px,#97c700 175.8px,#50c407 184.0px,#24b918 193.4px,#12a932 199.7px,#109eaf 208.6px,#1070d0 209.3px,#0038c8 218.9px,#0048d0 244.3px,#0060d8 258.9px,#0090e0 268.4px,#30e0d8 272.9px,#20d820 275.3px,#38d008 290.7px,#a0d800 305.4px,#d8e000 318.3px,#f0a000 330.3px,#f06000 337.2px,#e83000 339.6px,#000 341.3px)"></i>
<i style="left:515px;width:2px;background:linear-gradient(#000 158.7px,#d35d00 158.7px,#d38800 162.5px,#c9ba00 167.7px,#9bc700 176.8px,#54c507 185.1px,#25b918 194.4px,#13a933 200.8px,#109daf 209.3px,#1070d0 210.0px,#0038c8 219.5px,#0048d0 244.8px,#0060d8 259.4px,#0090e0 268.9px,#30e0d8 273.3px,#20d820 275.8px,#38d008 291.3px,#a0d800 306.1px,#d8e000 319.1px,#f0a000 331.2px,#f06000 338.2px,#e83000 340.6px,#000 342.3px)"></i>
<i style="left:517px;width:2px;background:linear-gradient(#000 158.3px,#d45600 158.7px,#d48200 163.5px,#cab600 168.9px,#9fc600 177.9px,#58c506 186.1px,#27ba18 195.5px,#14aa34 201.8px,#109cae 209.9px,#1070d0 210.7px,#0038c8 220.1px,#0048d0 245.4px,#0060d8 259.9px,#0090e0 269.4px,#30e0d8 273.8px,#20d820 276.3px,#38d008 291.8px,#a0d800 306.7px,#d8e000 319.8px,#f0a000 332.0px,#f06000 339.1px,#e83000 341.6px,#000 344.3px)"></i>
<i style="left:519px;width:2px;background:linear-gradient(#000 160.5px,#d55000 160.5px,#d57d00 164.4px,#ccb300 170.0px,#a2c600 178.9px,#5dc506 187.0px,#29ba18 196.4px,#15aa35 202.8px,#109bae 210.5px,#1070d0 211.2px,#0038c8 220.7px,#0048d0 246.0px,#0060d8 260.5px,#0090e0 270.0px,#30e0d8 274.4px,#20d820 276.9px,#38d008 292.5px,#a0d800 307.4px,#d8e000 320.5px,#f0a000 332.9px,#f06000 340.0px,#e83000 342.5px,#000 344.6px)"></i>
<i style="left:521px;width:2px;background:linear-gradient(#000 160.9px,#d54a00 160.9px,#d57700 165.4px,#ceaf00 171.1px,#a6c500 179.9px,#61c505 187.9px,#2bbb18 197.2px,#15ab35 203.6px,#109bad 210.9px,#1070d0 211.6px,#0038c8 221.2px,#0048d0 246.6px,#0060d8 261.3px,#0090e0 270.8px,#30e0d8 275.2px,#20d820 277.7px,#38d008 293.3px,#a0d800 308.2px,#d8e000 321.3px,#f0a000 333.7px,#f06000 340.8px,#e83000 343.4px,#000 347.4px)"></i>
<i style="left:523px;width:2px;background:linear-gradient(#000 160.0px,#d64300 160.7px,#d67200 166.3px,#cfac00 172.2px,#aac500 180.8px,#65c605 188.8px,#2dbb18 198.1px,#16ab36 204.4px,#109aad 211.4px,#1070d0 212.0px,#0038c8 221.6px,#0048d0 247.3px,#0060d8 262.0px,#0090e0 271.6px,#30e0d8 276.1px,#20d820 278.5px,#38d008 294.2px,#a0d800 309.0px,#d8e000 322.1px,#f0a000 334.5px,#f06000 341.7px,#e83000 344.2px,#000 345.7px)"></i>
<i style="left:525px;width:2px;background:linear-gradient(#000 161.5px,#d73d00 161.5px,#d76c00 167.2px,#d1a900 173.3px,#adc400 181.8px,#69c604 189.7px,#2fbc18 198.9px,#17ac37 205.3px,#1099ac 211.8px,#1070d0 212.5px,#0038c8 222.1px,#0048d0 247.9px,#0060d8 262.7px,#0090e0 272.4px,#30e0d8 276.9px,#20d820 279.4px,#38d008 295.0px,#a0d800 309.8px,#d8e000 322.8px,#f0a000 335.2px,#f06000 342.4px,#e83000 345.0px,#000 347.4px)"></i>
<i style="left:527px;width:2px;background:linear-gradient(#000 163.1px,#d83600 163.1px,#d86700 168.2px,#d2a500 174.3px,#b1c400 182.7px,#6dc604 190.6px,#30bc18 199.7px,#18ac38 206.1px,#1098ac 212.2px,#1070d0 212.9px,#0038c8 222.6px,#0048d0 248.6px,#0060d8 263.5px,#0090e0 273.2px,#30e0d8 277.8px,#20d820 280.2px,#38d008 295.7px,#a0d800 310.5px,#d8e000 323.4px,#f0a000 335.8px,#f06000 343.1px,#e83000 345.7px,#000 348.1px)"></i>
<i style="left:529px;width:2px;background:linear-gradient(#000 162.1px,#d93000 162.7px,#d96100 169.1px,#d4a200 175.4px,#b5c300 183.6px,#71c603 191.5px,#32bd18 200.6px,#19ad39 206.9px,#1097ab 212.7px,#1070d0 213.3px,#0038c8 223.1px,#0048d0 249.2px,#0060d8 264.2px,#0090e0 274.0px,#30e0d8 278.6px,#20d820 281.0px,#38d008 296.4px,#a0d800 311.1px,#d8e000 323.9px,#f0a000 336.3px,#f06000 343.5px,#e83000 346.2px,#000 345.4px)"></i>
<i style="left:531px;width:2px;background:linear-gradient(#000 163.3px,#da2a00 163.3px,#da5c00 170.0px,#d69e00 176.5px,#b8c300 184.6px,#75c703 192.3px,#34bd18 201.4px,#1aad3a 207.7px,#1096ab 213.1px,#1070d0 213.7px,#0038c8 223.6px,#0048d0 249.8px,#0060d8 265.0px,#0090e0 274.8px,#30e0d8 279.4px,#20d820 281.8px,#38d008 297.1px,#a0d800 311.7px,#d8e000 324.4px,#f0a000 336.7px,#f06000 343.9px,#e83000 346.5px,#000 346.7px)"></i>
<i style="left:533px;width:2px;background:linear-gradient(#000 164.4px,#db2300 164.4px,#db5600 170.9px,#d79b00 177.5px,#bcc300 185.5px,#79c703 193.2px,#36bd18 202.2px,#1bad3b 208.6px,#1095ab 213.5px,#1070d0 214.1px,#0038c8 224.0px,#0048d0 250.5px,#0060d8 265.7px,#0090e0 275.6px,#30e0d8 280.2px,#20d820 282.6px,#38d008 297.8px,#a0d800 312.2px,#d8e000 324.7px,#f0a000 336.9px,#f06000 344.2px,#e83000 346.8px,#000 345.2px)"></i>
<i style="left:535px;width:2px;background:linear-gradient(#000 165.0px,#dc1d00 165.0px,#dc5100 171.9px,#d99700 178.6px,#c0c200 186.4px,#7dc702 194.1px,#38be18 203.0px,#1cae3c 209.4px,#1094aa 214.0px,#1070d0 214.5px,#0038c8 224.5px,#0048d0 251.1px,#0060d8 266.4px,#0090e0 276.4px,#30e0d8 281.1px,#20d820 283.4px,#38d008 298.4px,#a0d800 312.6px,#d8e000 325.0px,#f0a000 337.2px,#f06000 344.4px,#e83000 347.0px,#000 348.2px)"></i>
<i style="left:537px;width:2px;background:linear-gradient(#000 166.3px,#dd1600 166.3px,#dd4b00 172.8px,#da9400 179.6px,#c3c200 187.4px,#82c702 194.9px,#3abe18 203.8px,#1dae3d 210.2px,#1093aa 214.4px,#1070d0 215.0px,#0038c8 225.0px,#0048d0 251.8px,#0060d8 267.2px,#0090e0 277.2px,#30e0d8 281.9px,#20d820 284.2px,#38d008 299.1px,#a0d800 313.1px,#d8e000 325.4px,#f0a000 337.4px,#f06000 344.6px,#e83000 347.2px,#000 348.4px)"></i>
<i style="left:539px;width:2px;background:linear-gradient(#000 167.0px,#de1000 167.0px,#de4600 173.7px,#dc9100 180.7px,#c7c100 188.3px,#86c701 195.8px,#3bbf18 204.7px,#1eaf3e 211.0px,#1092a9 214.8px,#1070d0 215.4px,#0038c8 225.5px,#0048d0 252.4px,#0060d8 267.9px,#0090e0 278.0px,#30e0d8 282.8px,#20d820 285.0px,#38d008 299.7px,#a0d800 313.6px,#d8e000 325.8px,#f0a000 337.7px,#f06000 344.8px,#e83000 347.4px,#000 348.5px)"></i>
<i style="left:541px;width:2px;background:linear-gradient(#000 165.6px,#df0a00 166.7px,#df4000 174.6px,#de8d00 181.7px,#cbc100 189.2px,#8ac801 196.6px,#3dbf18 205.5px,#1faf3f 211.8px,#1091a9 215.3px,#1070d0 215.8px,#0038c8 226.0px,#0048d0 253.1px,#0060d8 268.7px,#0090e0 278.8px,#30e0d8 283.6px,#20d820 285.8px,#38d008 300.4px,#a0d800 314.2px,#d8e000 326.2px,#f0a000 338.0px,#f06000 345.1px,#e83000 347.7px,#000 348.5px)"></i>
<i style="left:543px;width:2px;background:linear-gradient(#000 166.7px,#e00300 167.3px,#e03b00 175.5px,#df8a00 182.8px,#cec000 190.2px,#8ec800 197.5px,#3fc018 206.4px,#20b040 212.7px,#1090a8 215.9px,#1070d0 216.4px,#0038c8 226.7px,#0048d0 254.3px,#0060d8 270.1px,#0090e0 280.4px,#30e0d8 285.3px,#20d820 287.5px,#38d008 301.7px,#a0d800 315.2px,#d8e000 326.9px,#f0a000 338.5px,#f06000 345.5px,#e83000 348.1px,#000 346.6px)"></i>
<i style="left:545px;width:2px;background:linear-gradient(#000 167.7px,#e00000 167.8px,#e03800 176.2px,#e08800 183.6px,#d0c000 191.0px,#90c800 198.4px,#40c018 207.2px,#20b040 213.6px,#1090a8 216.6px,#1070d0 217.1px,#0038c8 227.7px,#0048d0 256.0px,#0060d8 272.3px,#0090e0 282.9px,#30e0d8 287.8px,#20d820 289.9px,#38d008 303.7px,#a0d800 316.6px,#d8e000 327.9px,#f0a000 339.2px,#f06000 345.9px,#e83000 348.4px,#000 349.5px)"></i>
<i style="left:547px;width:2px;background:linear-gradient(#000 168.6px,#e00000 168.6px,#e03800 176.8px,#e08800 184.2px,#d0c000 191.6px,#90c800 199.0px,#40c018 207.9px,#20b040 214.4px,#1090a8 217.3px,#1070d0 217.8px,#0038c8 228.7px,#0048d0 257.7px,#0060d8 274.4px,#0090e0 285.3px,#30e0d8 290.4px,#20d820 292.4px,#38d008 305.6px,#a0d800 318.1px,#d8e000 329.0px,#f0a000 339.9px,#f06000 346.4px,#e83000 348.8px,#000 347.8px)"></i>
<i style="left:549px;width:2px;background:linear-gradient(#000 168.6px,#e00000 168.9px,#e03800 177.3px,#e08800 184.8px,#d0c000 192.2px,#90c800 199.7px,#40c018 208.6px,#20b040 215.1px,#1090a8 218.0px,#1070d0 218.5px,#0038c8 229.7px,#0048d0 259.4px,#0060d8 276.5px,#0090e0 287.7px,#30e0d8 292.9px,#20d820 294.8px,#38d008 307.6px,#a0d800 319.6px,#d8e000 330.1px,#f0a000 340.6px,#f06000 346.9px,#e83000 349.3px,#000 350.4px)"></i>
<i style="left:551px;width:2px;background:linear-gradient(#000 170.2px,#e00000 170.2px,#e03800 177.9px,#e08800 185.4px,#d0c000 192.9px,#90c800 200.3px,#40c018 209.3px,#20b040 215.8px,#1090a8 218.8px,#1070d0 219.3px,#0038c8 230.7px,#0048d0 261.2px,#0060d8 278.7px,#0090e0 290.1px,#30e0d8 295.5px,#20d820 297.3px,#38d008 309.6px,#a0d800 321.1px,#d8e000 331.2px,#f0a000 341.4px,#f06000 347.5px,#e83000 349.8px,#000 348.1px)"></i>
<i style="left:553px;width:2px;background:linear-gradient(#000 169.4px,#e00000 170.0px,#e03800 178.5px,#e08800 186.0px,#d0c000 193.5px,#90c800 201.0px,#40c018 210.0px,#20b040 216.5px,#1090a8 219.5px,#1070d0 220.0px,#0038c8 231.7px,#0048d0 262.9px,#0060d8 280.8px,#0090e0 292.5px,#30e0d8 298.0px,#20d820 299.8px,#38d008 311.6px,#a0d800 322.7px,#d8e000 332.3px,#f0a000 342.1px,#f06000 348.1px,#e83000 350.3px,#000 349.5px)"></i>
<i style="left:555px;width:2px;background:linear-gradient(#000 170.0px,#e00000 170.7px,#e03800 179.1px,#e08800 186.6px,#d0c000 194.1px,#90c800 201.6px,#40c018 210.5px,#20b040 217.0px,#1090a8 220.0px,#1070d0 220.5px,#0038c8 232.4px,#0048d0 264.1px,#0060d8 282.4px,#0090e0 294.3px,#30e0d8 299.8px,#20d820 301.6px,#38d008 313.1px,#a0d800 323.9px,#d8e000 333.3px,#f0a000 342.9px,#f06000 348.7px,#e83000 350.8px,#000 350.9px)"></i>
<i style="left:557px;width:2px;background:linear-gradient(#000 170.7px,#e00000 171.3px,#e03800 179.8px,#e08800 187.2px,#d0c000 194.7px,#90c800 202.1px,#40c018 211.1px,#20b040 217.5px,#1090a8 220.5px,#1070d0 221.0px,#0038c8 233.1px,#0048d0 265.4px,#0060d8 283.9px,#0090e0 296.0px,#30e0d8 301.7px,#20d820 303.3px,#38d008 314.6px,#a0d800 325.1px,#d8e000 334.2px,#f0a000 343.6px,#f06000 349.3px,#e83000 351.4px,#000 351.6px)"></i>
<i style="left:559px;width:2px;background:linear-gradient(#000 173.0px,#e00000 173.0px,#e03800 180.4px,#e08800 187.8px,#d0c000 195.3px,#90c800 202.7px,#40c018 211.6px,#20b040 218.0px,#1090a8 221.0px,#1070d0 221.5px,#0038c8 233.8px,#0048d0 266.6px,#0060d8 285.5px,#0090e0 297.8px,#30e0d8 303.5px,#20d820 305.1px,#38d008 316.1px,#a0d800 326.3px,#d8e000 335.2px,#f0a000 344.4px,#f06000 350.0px,#e83000 352.0px,#000 353.3px)"></i>
<i style="left:561px;width:2px;background:linear-gradient(#000 171.7px,#e00000 172.7px,#e03800 181.1px,#e08800 188.5px,#d0c000 195.9px,#90c800 203.3px,#40c018 212.1px,#20b040 218.5px,#1090a8 221.5px,#1070d0 222.0px,#0038c8 234.5px,#0048d0 267.8px,#0060d8 287.0px,#0090e0 299.5px,#30e0d8 305.3px,#20d820 306.9px,#38d008 317.6px,#a0d800 327.5px,#d8e000 336.2px,#f0a000 345.1px,#f06000 350.6px,#e83000 352.7px,#000 351.6px)"></i>
<i style="left:563px;width:2px;background:linear-gradient(#000 173.1px,#e00000 173.3px,#e03800 181.7px,#e08800 189.1px,#d0c000 196.4px,#90c800 203.8px,#40c018 212.7px,#20b040 219.1px,#1090a8 222.0px,#1070d0 222.5px,#0038c8 235.2px,#0048d0 269.1px,#0060d8 288.5px,#0090e0 301.2px,#30e0d8 307.2px,#20d820 308.7px,#38d008 319.1px,#a0d800 328.8px,#d8e000 337.2px,#f0a000 345.9px,#f06000 351.3px,#e83000 353.3px,#000 353.9px)"></i>
<i style="left:565px;width:2px;background:linear-gradient(#000 173.7px,#e00000 174.0px,#e03800 182.3px,#e08800 189.7px,#d0c000 197.0px,#90c800 204.4px,#40c018 213.2px,#20b040 219.6px,#1090a8 222.5px,#1070d0 223.0px,#0038c8 235.9px,#0048d0 270.3px,#0060d8 290.1px,#0090e0 303.0px,#30e0d8 309.0px,#20d820 310.5px,#38d008 320.6px,#a0d800 330.0px,#d8e000 338.2px,#f0a000 346.7px,#f06000 351.9px,#e83000 353.9px,#000 353.1px)"></i>
<i style="left:567px;width:2px;background:linear-gradient(#000 174.2px,#e00000 174.6px,#e03800 182.9px,#e08800 190.2px,#d0c000 197.5px,#90c800 204.8px,#40c018 213.6px,#20b040 219.9px,#1090a8 222.9px,#1070d0 223.3px,#0038c8 236.3px,#0048d0 270.9px,#0060d8 290.8px,#0090e0 303.8px,#30e0d8 309.9px,#20d820 311.3px,#38d008 321.4px,#a0d800 330.7px,#d8e000 338.8px,#f0a000 347.3px,#f06000 352.6px,#e83000 354.5px,#000 353.5px)"></i>
<i style="left:569px;width:2px;background:linear-gradient(#000 176.1px,#e00000 176.1px,#e03800 183.5px,#e08800 190.7px,#d0c000 198.0px,#90c800 205.3px,#40c018 214.0px,#20b040 220.3px,#1090a8 223.2px,#1070d0 223.7px,#0038c8 236.8px,#0048d0 271.6px,#0060d8 291.6px,#0090e0 304.6px,#30e0d8 310.7px,#20d820 312.2px,#38d008 322.2px,#a0d800 331.5px,#d8e000 339.5px,#f0a000 348.0px,#f06000 353.2px,#e83000 355.2px,#000 355.9px)"></i>
<i style="left:571px;width:2px;background:linear-gradient(#000 175.6px,#e00000 175.8px,#e03800 184.0px,#e08800 191.3px,#d0c000 198.5px,#90c800 205.7px,#40c018 214.4px,#20b040 220.7px,#1090a8 223.6px,#1070d0 224.0px,#0038c8 237.2px,#0048d0 272.2px,#0060d8 292.3px,#0090e0 305.5px,#30e0d8 311.6px,#20d820 313.1px,#38d008 323.0px,#a0d800 332.2px,#d8e000 340.1px,#f0a000 348.6px,#f06000 353.8px,#e83000 355.8px,#000 356.5px)"></i>
<i style="left:573px;width:2px;background:linear-gradient(#000 176.5px,#e00000 176.5px,#e03800 184.6px,#e08800 191.8px,#d0c000 199.0px,#90c800 206.2px,#40c018 214.8px,#20b040 221.0px,#1090a8 223.9px,#1070d0 224.4px,#0038c8 237.6px,#0048d0 272.8px,#0060d8 293.1px,#0090e0 306.3px,#30e0d8 312.5px,#20d820 313.9px,#38d008 323.8px,#a0d800 332.9px,#d8e000 340.8px,#f0a000 349.2px,#f06000 354.5px,#e83000 356.4px,#000 356.5px)"></i>
<i style="left:575px;width:2px;background:linear-gradient(#000 176.7px,#e00000 177.0px,#e03800 185.2px,#e08800 192.3px,#d0c000 199.5px,#90c800 206.6px,#40c018 215.2px,#20b040 221.4px,#1090a8 224.3px,#1070d0 224.7px,#0038c8 238.0px,#0048d0 273.5px,#0060d8 293.9px,#0090e0 307.1px,#30e0d8 313.3px,#20d820 314.8px,#38d008 324.6px,#a0d800 333.6px,#d8e000 341.5px,#f0a000 349.9px,#f06000 355.1px,#e83000 357.0px,#000 357.0px)"></i>
<i style="left:577px;width:2px;background:linear-gradient(#000 178.8px,#e00000 178.8px,#e03800 185.7px,#e08800 192.8px,#d0c000 199.9px,#90c800 207.1px,#40c018 215.6px,#20b040 221.8px,#1090a8 224.6px,#1070d0 225.1px,#0038c8 238.5px,#0048d0 274.1px,#0060d8 294.6px,#0090e0 308.0px,#30e0d8 314.2px,#20d820 315.6px,#38d008 325.3px,#a0d800 334.4px,#d8e000 342.1px,#f0a000 350.5px,#f06000 355.7px,#e83000 357.7px,#000 358.7px)"></i>
<i style="left:579px;width:2px;background:linear-gradient(#000 179.0px,#e00000 179.0px,#e03800 186.3px,#e08800 193.4px,#d0c000 200.4px,#90c800 207.5px,#40c018 216.0px,#20b040 222.1px,#1090a8 225.0px,#1070d0 225.4px,#0038c8 238.9px,#0048d0 274.7px,#0060d8 295.4px,#0090e0 308.8px,#30e0d8 315.1px,#20d820 316.5px,#38d008 326.1px,#a0d800 335.1px,#d8e000 342.8px,#f0a000 351.1px,#f06000 356.3px,#e83000 358.3px,#000 356.9px)"></i>
<i style="left:581px;width:2px;background:linear-gradient(#000 178.9px,#e00000 178.9px,#e03800 186.8px,#e08800 193.9px,#d0c000 200.9px,#90c800 208.0px,#40c018 216.4px,#20b040 222.5px,#1090a8 225.3px,#1070d0 225.8px,#0038c8 239.3px,#0048d0 275.4px,#0060d8 296.1px,#0090e0 309.6px,#30e0d8 316.0px,#20d820 317.3px,#38d008 326.9px,#a0d800 335.8px,#d8e000 343.4px,#f0a000 351.7px,#f06000 356.9px,#e83000 358.9px,#000 358.4px)"></i>
<i style="left:583px;width:2px;background:linear-gradient(#000 178.5px,#e00000 179.5px,#e03800 187.4px,#e08800 194.4px,#d0c000 201.4px,#90c800 208.4px,#40c018 216.8px,#20b040 222.9px,#1090a8 225.7px,#1070d0 226.1px,#0038c8 239.7px,#0048d0 276.0px,#0060d8 296.9px,#0090e0 310.5px,#30e0d8 316.8px,#20d820 318.2px,#38d008 327.7px,#a0d800 336.5px,#d8e000 344.1px,#f0a000 352.3px,#f06000 357.5px,#e83000 359.5px,#000 359.1px)"></i>
<i style="left:585px;width:2px;background:linear-gradient(#000 179.1px,#e00000 180.1px,#e03800 188.0px,#e08800 194.9px,#d0c000 201.9px,#90c800 208.8px,#40c018 217.2px,#20b040 223.2px,#1090a8 226.0px,#1070d0 226.5px,#0038c8 240.2px,#0048d0 276.6px,#0060d8 297.6px,#0090e0 311.3px,#30e0d8 317.7px,#20d820 319.1px,#38d008 328.5px,#a0d800 337.2px,#d8e000 344.7px,#f0a000 353.0px,#f06000 358.2px,#e83000 360.1px,#000 359.1px)"></i>
<i style="left:587px;width:2px;background:linear-gradient(#000 181.4px,#e00000 181.4px,#e03800 188.5px,#e08800 195.5px,#d0c000 202.4px,#90c800 209.3px,#40c018 217.6px,#20b040 223.6px,#1090a8 226.4px,#1070d0 226.8px,#0038c8 240.6px,#0048d0 277.3px,#0060d8 298.4px,#0090e0 312.1px,#30e0d8 318.6px,#20d820 319.9px,#38d008 329.3px,#a0d800 338.0px,#d8e000 345.4px,#f0a000 353.6px,#f06000 358.8px,#e83000 360.7px,#000 361.4px)"></i>
<i style="left:589px;width:2px;background:linear-gradient(#000 181.7px,#e00000 181.7px,#e03800 189.1px,#e08800 196.0px,#d0c000 202.9px,#90c800 209.8px,#40c018 218.1px,#20b040 224.1px,#1090a8 226.9px,#1070d0 227.3px,#0038c8 241.0px,#0048d0 277.6px,#0060d8 298.6px,#0090e0 312.3px,#30e0d8 318.7px,#20d820 320.1px,#38d008 329.6px,#a0d800 338.3px,#d8e000 345.8px,#f0a000 354.1px,#f06000 359.4px,#e83000 361.4px,#000 359.8px)"></i>
<i style="left:591px;width:2px;background:linear-gradient(#000 181.0px,#e00000 181.8px,#e03800 189.6px,#e08800 196.6px,#d0c000 203.5px,#90c800 210.4px,#40c018 218.7px,#20b040 224.7px,#1090a8 227.5px,#1070d0 227.9px,#0038c8 241.5px,#0048d0 277.6px,#0060d8 298.4px,#0090e0 311.9px,#30e0d8 318.2px,#20d820 319.6px,#38d008 329.3px,#a0d800 338.3px,#d8e000 345.9px,#f0a000 354.5px,#f06000 359.9px,#e83000 362.0px,#000 360.2px)"></i>
<i style="left:593px;width:2px;background:linear-gradient(#000 181.3px,#e00000 182.3px,#e03800 190.2px,#e08800 197.1px,#d0c000 204.1px,#90c800 211.0px,#40c018 219.3px,#20b040 225.3px,#1090a8 228.1px,#1070d0 228.6px,#0038c8 241.9px,#0048d0 277.6px,#0060d8 298.1px,#0090e0 311.4px,#30e0d8 317.7px,#20d820 319.1px,#38d008 329.1px,#a0d800 338.2px,#d8e000 346.1px,#f0a000 354.9px,#f06000 360.5px,#e83000 362.6px,#000 361.1px)"></i>
<i style="left:595px;width:2px;background:linear-gradient(#000 183.9px,#e00000 183.9px,#e03800 190.7px,#e08800 197.7px,#d0c000 204.6px,#90c800 211.6px,#40c018 219.9px,#20b040 226.0px,#1090a8 228.8px,#1070d0 229.3px,#0038c8 242.4px,#0048d0 277.6px,#0060d8 297.8px,#0090e0 311.0px,#30e0d8 317.2px,#20d820 318.6px,#38d008 328.8px,#a0d800 338.2px,#d8e000 346.2px,#f0a000 355.3px,#f06000 361.0px,#e83000 363.2px,#000 364.6px)"></i>
<i style="left:597px;width:2px;background:linear-gradient(#000 182.7px,#e00000 183.4px,#e03800 191.3px,#e08800 198.2px,#d0c000 205.2px,#90c800 212.2px,#40c018 220.5px,#20b040 226.5px,#1090a8 229.3px,#0f6ed0 229.8px,#0038c8 242.9px,#0048d0 277.6px,#0060d8 297.5px,#0090e0 310.6px,#30e0d8 316.6px,#20d820 318.1px,#38d008 328.6px,#a0d800 338.2px,#d8e000 346.4px,#f0a000 355.7px,#f06000 361.6px,#e83000 363.9px,#000 363.0px)"></i>
<i style="left:599px;width:2px;background:linear-gradient(#000 185.0px,#e00000 185.0px,#e03800 191.8px,#e08800 198.8px,#d0c000 205.8px,#90c800 212.8px,#40c018 221.2px,#20b040 227.3px,#1090a8 230.1px,#0f6ed0 230.5px,#0038c8 243.3px,#0048d0 277.6px,#0060d8 297.3px,#0090e0 310.1px,#30e0d8 316.1px,#20d820 317.6px,#38d008 328.3px,#a0d800 338.2px,#d8e000 346.5px,#f0a000 356.1px,#f06000 362.2px,#e83000 364.5px,#000 364.7px)"></i>
<i style="left:601px;width:2px;background:linear-gradient(#000 184.1px,#df0600 184.4px,#df3e00 192.1px,#de8b00 198.9px,#ccc000 206.0px,#8cc800 213.1px,#3ec018 221.5px,#1fb03f 227.6px,#1091a8 230.7px,#0f6cd0 231.2px,#0038c8 243.8px,#0048d0 277.6px,#0060d8 297.0px,#0090e0 309.7px,#30e0d8 315.6px,#20d820 317.1px,#38d008 328.1px,#a0d800 338.1px,#d8e000 346.7px,#f0a000 356.5px,#f06000 362.8px,#e83000 365.2px,#000 365.0px)"></i>
<i style="left:603px;width:2px;background:linear-gradient(#000 184.4px,#de0d00 184.9px,#de4300 192.4px,#dd8f00 199.1px,#c9c100 206.2px,#88c701 213.3px,#3cbf18 221.8px,#1eaf3e 227.8px,#1092a7 231.2px,#0e6cd0 231.7px,#0038c8 244.2px,#0048d0 277.6px,#0060d8 296.7px,#0090e0 309.2px,#30e0d8 315.1px,#20d820 316.6px,#38d008 327.8px,#a0d800 338.1px,#d8e000 346.9px,#f0a000 356.9px,#f06000 363.3px,#e83000 365.8px,#000 366.0px)"></i>
<i style="left:605px;width:2px;background:linear-gradient(#000 186.0px,#dd1300 186.0px,#dd4900 192.7px,#db9200 199.2px,#c5c100 206.5px,#83c701 213.6px,#3abf18 222.1px,#1daf3d 227.9px,#1093a7 231.6px,#0e6ad0 232.1px,#0038c8 244.7px,#0048d0 277.6px,#0060d8 296.5px,#0090e0 308.8px,#30e0d8 314.5px,#20d820 316.1px,#38d008 327.6px,#a0d800 338.1px,#d8e000 347.0px,#f0a000 357.3px,#f06000 363.9px,#e83000 366.5px,#000 366.4px)"></i>
<i style="left:607px;width:2px;background:linear-gradient(#000 186.8px,#dc1a00 186.8px,#dd4e00 192.9px,#da9600 199.3px,#c1c200 206.7px,#7fc702 213.9px,#38be18 222.4px,#1caf3b 228.3px,#1094a6 232.3px,#0d6ad0 232.8px,#0038c8 245.1px,#0048d0 277.6px,#0060d8 296.2px,#0090e0 308.3px,#30e0d8 314.0px,#20d820 315.6px,#38d008 327.3px,#a0d800 338.0px,#d8e000 347.2px,#f0a000 357.7px,#f06000 364.5px,#e83000 367.1px,#000 365.6px)"></i>
<i style="left:609px;width:2px;background:linear-gradient(#000 186.7px,#db2000 186.7px,#dc5400 193.2px,#d89900 199.4px,#bec200 207.0px,#7bc702 214.3px,#36be18 222.8px,#1baf3a 229.2px,#1095a4 233.4px,#0d68d0 233.9px,#0038c8 245.8px,#0048d0 278.2px,#0060d8 296.9px,#0090e0 309.0px,#30e0d8 314.7px,#20d820 316.3px,#38d008 328.0px,#a0d800 338.7px,#d8e000 347.8px,#f0a000 358.3px,#f06000 365.2px,#e83000 367.8px,#000 369.5px)"></i>
<i style="left:611px;width:2px;background:linear-gradient(#000 186.2px,#db2600 187.0px,#db5900 193.5px,#d79d00 199.5px,#bac300 207.2px,#77c602 214.6px,#34be17 223.2px,#1baf39 229.1px,#1097a3 233.5px,#0d68d0 234.0px,#0038c8 246.5px,#0048d0 278.9px,#0060d8 297.6px,#0090e0 309.7px,#30e0d8 315.4px,#20d820 317.0px,#38d008 328.7px,#a0d800 339.3px,#d8e000 348.4px,#f0a000 359.0px,#f06000 365.8px,#e83000 368.5px,#000 368.4px)"></i>
<i style="left:613px;width:2px;background:linear-gradient(#000 187.8px,#da2d00 187.8px,#da5f00 193.7px,#d5a000 199.6px,#b6c300 207.4px,#72c602 215.0px,#32be17 223.6px,#1aaf37 229.6px,#1098a1 234.3px,#0c66d0 234.8px,#0038c8 247.2px,#0048d0 279.7px,#0060d8 298.3px,#0090e0 310.4px,#30e0d8 316.1px,#20d820 317.7px,#38d008 329.4px,#a0d800 340.0px,#d8e000 349.0px,#f0a000 359.6px,#f06000 366.5px,#e83000 369.1px,#000 368.5px)"></i>
<i style="left:615px;width:2px;background:linear-gradient(#000 189.1px,#d93300 189.1px,#da6500 194.0px,#d4a400 199.7px,#b3c400 207.7px,#6ec603 215.3px,#2fbd17 224.0px,#19af36 230.1px,#10999e 234.9px,#0c66d0 235.5px,#0038c8 247.9px,#0048d0 280.4px,#0060d8 299.0px,#0090e0 311.1px,#30e0d8 316.8px,#20d820 318.4px,#38d008 330.1px,#a0d800 340.7px,#d8e000 349.7px,#f0a000 360.3px,#f06000 367.2px,#e83000 369.8px,#000 369.7px)"></i>
<i style="left:617px;width:2px;background:linear-gradient(#000 188.4px,#d83a00 188.5px,#d96b00 194.3px,#d2a700 199.8px,#afc400 207.9px,#6ac503 215.7px,#2dbd17 224.4px,#18af34 230.5px,#109b9c 235.5px,#0b64d0 236.1px,#0038c8 248.6px,#0048d0 281.1px,#0060d8 299.7px,#0090e0 311.8px,#30e0d8 317.5px,#20d820 319.1px,#38d008 330.8px,#a0d800 341.4px,#d8e000 350.4px,#f0a000 361.0px,#f06000 367.9px,#e83000 370.5px,#000 371.9px)"></i>
<i style="left:619px;width:2px;background:linear-gradient(#000 187.8px,#d74000 189.0px,#d87000 194.5px,#d1ab00 199.9px,#abc500 208.2px,#65c503 216.0px,#2bbd17 224.9px,#17b033 232.2px,#109c99 237.4px,#0b64d0 238.0px,#0038c8 249.3px,#0048d0 281.8px,#0060d8 300.4px,#0090e0 312.5px,#30e0d8 318.2px,#20d820 319.8px,#38d008 331.5px,#a0d800 342.1px,#d8e000 351.1px,#f0a000 361.7px,#f06000 368.6px,#e83000 371.2px,#000 372.5px)"></i>
<i style="left:621px;width:2px;background:linear-gradient(#000 188.6px,#d64600 189.5px,#d87600 194.8px,#cfaf00 200.0px,#a8c500 208.4px,#61c503 216.4px,#28bd16 225.3px,#16b031 232.0px,#109d95 237.4px,#0b62d0 238.0px,#0038c8 250.0px,#0048d0 282.4px,#0060d8 301.1px,#0090e0 313.2px,#30e0d8 318.9px,#20d820 320.5px,#38d008 332.2px,#a0d800 342.8px,#d8e000 351.8px,#f0a000 362.4px,#f06000 369.3px,#e83000 371.9px,#000 371.5px)"></i>
<i style="left:623px;width:2px;background:linear-gradient(#000 190.0px,#d54d00 190.0px,#d77c00 195.1px,#ceb200 200.1px,#a4c500 208.6px,#5dc403 216.7px,#26bd16 225.7px,#15b02f 231.0px,#109f92 236.6px,#0a62d0 237.2px,#0038c8 250.8px,#0048d0 283.2px,#0060d8 301.8px,#0090e0 313.9px,#30e0d8 319.6px,#20d820 321.2px,#38d008 332.9px,#a0d800 343.5px,#d8e000 352.5px,#f0a000 363.1px,#f06000 370.0px,#e83000 372.6px,#000 372.5px)"></i>
<i style="left:625px;width:2px;background:linear-gradient(#000 189.4px,#d45300 190.5px,#d68200 195.3px,#ccb600 200.2px,#a0c600 208.9px,#58c404 217.1px,#24bc16 226.2px,#14b12d 233.7px,#10a08e 239.4px,#0a60d0 240.0px,#0038c8 251.4px,#0048d0 283.9px,#0060d8 302.5px,#0090e0 314.6px,#30e0d8 320.3px,#20d820 321.9px,#38d008 333.6px,#a0d800 344.2px,#d8e000 353.2px,#f0a000 363.8px,#f06000 370.7px,#e83000 373.3px,#000 372.6px)"></i>
<i style="left:627px;width:2px;background:linear-gradient(#000 190.7px,#d35a00 191.0px,#d68700 195.6px,#cbb900 200.2px,#9dc600 209.1px,#54c304 217.5px,#21bc15 226.6px,#13b22b 233.6px,#10a289 239.4px,#095fd0 240.0px,#0038c8 252.1px,#0048d0 284.6px,#0060d8 303.2px,#0090e0 315.3px,#30e0d8 321.0px,#20d820 322.6px,#38d008 334.3px,#a0d800 344.9px,#d8e000 353.9px,#f0a000 364.5px,#f06000 371.4px,#e83000 374.0px,#000 375.6px)"></i>
<i style="left:629px;width:2px;background:linear-gradient(#000 192.6px,#d26000 192.6px,#d58d00 196.0px,#cabd00 200.5px,#99c700 209.7px,#4fc304 218.4px,#1fbc15 227.7px,#12b229 235.9px,#10a485 241.9px,#095ed0 242.5px,#0038c8 253.6px,#0048d0 285.6px,#0060d8 304.1px,#0090e0 316.1px,#30e0d8 321.7px,#20d820 323.3px,#38d008 335.0px,#a0d800 345.6px,#d8e000 354.6px,#f0a000 365.2px,#f06000 372.1px,#e83000 374.7px,#000 375.0px)"></i>
<i style="left:631px;width:2px;background:linear-gradient(#000 193.2px,#d16600 193.2px,#d59300 196.4px,#c8c100 200.8px,#95c700 210.3px,#4bc304 219.2px,#1cbc15 228.9px,#11b327 236.3px,#10a580 242.5px,#095ed0 243.1px,#0038c8 255.0px,#0048d0 286.8px,#0060d8 305.0px,#0090e0 316.9px,#30e0d8 322.4px,#20d820 324.0px,#38d008 335.7px,#a0d800 346.3px,#d8e000 355.3px,#f0a000 365.9px,#f06000 372.8px,#e83000 375.4px,#000 376.7px)"></i>
<i style="left:633px;width:2px;background:linear-gradient(#000 192.4px,#d06d00 192.7px,#d49900 196.7px,#c7c400 201.0px,#92c800 210.8px,#46c204 220.1px,#19bc14 230.0px,#10b425 237.0px,#10a77b 243.3px,#085cd0 244.0px,#0038c8 256.5px,#0048d0 287.9px,#0060d8 305.9px,#0090e0 317.7px,#30e0d8 323.1px,#20d820 324.7px,#38d008 336.4px,#a0d800 347.0px,#d8e000 356.0px,#f0a000 366.6px,#f06000 373.5px,#e83000 376.1px,#000 374.8px)"></i>
<i style="left:635px;width:2px;background:linear-gradient(#000 193.5px,#d07000 193.5px,#d49c00 197.3px,#c6c600 201.5px,#90c800 211.6px,#44c204 221.1px,#18bc14 231.2px,#10b424 240.6px,#10a877 247.0px,#085cd0 247.7px,#0038c8 257.9px,#0048d0 288.9px,#0060d8 306.8px,#0090e0 318.4px,#30e0d8 323.9px,#20d820 325.4px,#38d008 337.1px,#a0d800 347.7px,#d8e000 356.7px,#f0a000 367.3px,#f06000 374.2px,#e83000 376.8px,#000 376.2px)"></i>
<i style="left:637px;width:2px;background:linear-gradient(#000 192.7px,#d07000 193.9px,#d49c00 197.9px,#c6c600 202.2px,#90c800 212.5px,#44c204 222.3px,#17bc14 232.6px,#10b523 239.4px,#10a974 245.8px,#075ad0 246.5px,#0038c8 259.4px,#0048d0 290.0px,#0060d8 307.7px,#0090e0 319.2px,#30e0d8 324.6px,#20d820 326.2px,#38d008 337.8px,#a0d800 348.4px,#d8e000 357.4px,#f0a000 368.0px,#f06000 374.9px,#e83000 377.5px,#000 379.3px)"></i>
<i style="left:639px;width:2px;background:linear-gradient(#000 195.6px,#d07000 195.6px,#d49c00 198.6px,#c6c600 202.9px,#90c800 213.4px,#44c204 223.5px,#17bc14 234.0px,#10b622 241.5px,#10a971 247.8px,#075ad0 248.4px,#0038c8 260.8px,#0048d0 291.1px,#0060d8 308.6px,#0090e0 320.0px,#30e0d8 325.3px,#20d820 326.9px,#38d008 338.5px,#a0d800 349.1px,#d8e000 358.1px,#f0a000 368.7px,#f06000 375.6px,#e83000 378.2px,#000 378.4px)"></i>
<i style="left:641px;width:2px;background:linear-gradient(#000 195.3px,#d07000 195.3px,#d59d00 199.2px,#c6c600 203.6px,#90c800 214.4px,#43c203 224.6px,#17bd13 235.4px,#10b622 244.0px,#10a96e 250.2px,#0758d0 250.9px,#0038c8 262.2px,#0048d0 292.2px,#0060d8 309.5px,#0090e0 320.8px,#30e0d8 326.0px,#20d820 327.6px,#38d008 339.2px,#a0d800 349.8px,#d8e000 358.8px,#f0a000 369.4px,#f06000 376.3px,#e83000 378.9px,#000 379.6px)"></i>
<i style="left:643px;width:2px;background:linear-gradient(#000 196.6px,#d07000 196.6px,#d59d00 199.9px,#c6c600 204.2px,#90c800 215.1px,#43c203 225.5px,#16bd13 236.4px,#10b721 247.0px,#10aa6b 253.1px,#0658d0 253.8px,#0038c8 263.2px,#0048d0 293.1px,#0060d8 310.3px,#0090e0 321.5px,#30e0d8 326.8px,#20d820 328.4px,#38d008 340.0px,#a0d800 350.5px,#d8e000 359.5px,#f0a000 370.1px,#f06000 377.0px,#e83000 379.6px,#000 379.5px)"></i>
<i style="left:645px;width:2px;background:linear-gradient(#000 196.3px,#d07000 196.3px,#d59d00 200.5px,#c7c700 204.9px,#90c800 215.8px,#43c103 226.4px,#16bd13 237.3px,#10b721 244.4px,#10aa69 250.4px,#0656d0 251.0px,#0038c8 264.2px,#0048d0 294.0px,#0060d8 311.2px,#0090e0 322.3px,#30e0d8 327.6px,#20d820 329.1px,#38d008 340.7px,#a0d800 351.3px,#d8e000 360.2px,#f0a000 370.8px,#f06000 377.6px,#e83000 380.3px,#000 379.3px)"></i>
<i style="left:647px;width:2px;background:linear-gradient(#000 196.0px,#d07000 196.7px,#d59d00 201.1px,#c7c700 205.5px,#90c800 216.5px,#43c103 227.2px,#15bd13 238.3px,#10b820 246.6px,#10ab66 252.5px,#0556d0 253.1px,#0038c8 265.1px,#0048d0 294.9px,#0060d8 312.0px,#0090e0 323.1px,#30e0d8 328.3px,#20d820 329.9px,#38d008 341.5px,#a0d800 352.0px,#d8e000 361.0px,#f0a000 371.5px,#f06000 378.3px,#e83000 381.0px,#000 381.1px)"></i>
<i style="left:649px;width:2px;background:linear-gradient(#000 196.6px,#d07000 197.2px,#d69e00 201.7px,#c7c700 206.1px,#90c800 217.3px,#42c102 228.1px,#15be12 239.3px,#10b820 248.8px,#10ab63 254.5px,#0554d0 255.2px,#0038c8 266.1px,#0048d0 295.8px,#0060d8 312.8px,#0090e0 323.9px,#30e0d8 329.1px,#20d820 330.7px,#38d008 342.2px,#a0d800 352.8px,#d8e000 361.7px,#f0a000 372.2px,#f06000 379.0px,#e83000 381.6px,#000 380.0px)"></i>
<i style="left:651px;width:2px;background:linear-gradient(#000 197.5px,#d07000 197.8px,#d69e00 202.3px,#c7c700 206.7px,#90c800 218.0px,#42c102 229.0px,#15be12 240.3px,#10b91f 250.8px,#10ab60 256.4px,#0554d0 257.0px,#0038c8 267.1px,#0048d0 296.6px,#0060d8 313.6px,#0090e0 324.7px,#30e0d8 329.9px,#20d820 331.5px,#38d008 343.0px,#a0d800 353.5px,#d8e000 362.4px,#f0a000 372.9px,#f06000 379.7px,#e83000 382.3px,#000 383.2px)"></i>
<i style="left:653px;width:2px;background:linear-gradient(#000 197.8px,#d07000 198.3px,#d69e00 202.9px,#c7c700 207.3px,#90c800 218.7px,#42c102 229.8px,#14be12 241.3px,#10ba1e 248.6px,#10ac5d 254.0px,#0452d0 254.7px,#0038c8 268.1px,#0048d0 297.5px,#0060d8 314.5px,#0090e0 325.5px,#30e0d8 330.7px,#20d820 332.2px,#38d008 343.7px,#a0d800 354.2px,#d8e000 363.1px,#f0a000 373.6px,#f06000 380.4px,#e83000 383.0px,#000 384.3px)"></i>
<i style="left:655px;width:2px;background:linear-gradient(#000 199.4px,#d07000 199.4px,#d69e00 203.5px,#c7c700 207.9px,#90c800 219.4px,#42c102 230.7px,#14be12 242.2px,#10ba1e 253.6px,#10ac5b 258.9px,#0452d0 259.5px,#0038c8 269.0px,#0048d0 298.4px,#0060d8 315.3px,#0090e0 326.3px,#30e0d8 331.4px,#20d820 333.0px,#38d008 344.5px,#a0d800 354.9px,#d8e000 363.8px,#f0a000 374.3px,#f06000 381.1px,#e83000 383.7px,#000 384.2px)"></i>
<i style="left:657px;width:2px;background:linear-gradient(#000 200.4px,#d07000 200.4px,#d69e00 204.1px,#c7c700 208.5px,#90c800 220.2px,#42c102 231.6px,#13be12 243.2px,#10bb1d 253.5px,#10ad58 258.7px,#0350d0 259.3px,#0038c8 270.0px,#0048d0 299.3px,#0060d8 316.1px,#0090e0 327.1px,#30e0d8 332.2px,#20d820 333.8px,#38d008 345.2px,#a0d800 355.7px,#d8e000 364.5px,#f0a000 375.0px,#f06000 381.7px,#e83000 384.3px,#000 382.8px)"></i>
<i style="left:659px;width:2px;background:linear-gradient(#000 199.2px,#d07000 200.0px,#d69e00 204.7px,#c7c700 209.1px,#90c800 220.9px,#42c102 232.4px,#13be12 244.2px,#10bc1c 254.4px,#10ad55 259.4px,#0350d0 260.1px,#0038c8 270.9px,#0048d0 300.1px,#0060d8 316.9px,#0090e0 327.9px,#30e0d8 333.0px,#20d820 334.6px,#38d008 346.0px,#a0d800 356.4px,#d8e000 365.2px,#f0a000 375.6px,#f06000 382.4px,#e83000 385.0px,#000 386.5px)"></i>
<i style="left:661px;width:2px;background:linear-gradient(#000 201.6px,#d07000 201.6px,#d79f00 205.3px,#c7c700 209.7px,#90c800 221.5px,#41c101 233.0px,#13bf11 244.8px,#10bc1c 254.2px,#10ad52 259.0px,#034ed0 259.7px,#0038c8 271.4px,#0048d0 300.8px,#0060d8 317.7px,#0090e0 328.7px,#30e0d8 333.8px,#20d820 335.4px,#38d008 346.8px,#a0d800 357.1px,#d8e000 366.0px,#f0a000 376.3px,#f06000 383.1px,#e83000 385.7px,#000 384.1px)"></i>
<i style="left:663px;width:2px;background:linear-gradient(#000 202.0px,#d07000 202.0px,#d79f00 206.0px,#c7c700 210.3px,#90c800 222.1px,#41c101 233.6px,#12bf11 245.4px,#10bd1b 254.5px,#10ae4f 259.1px,#024ed0 259.7px,#0038c8 271.9px,#0048d0 301.4px,#0060d8 318.4px,#0090e0 329.4px,#30e0d8 334.6px,#20d820 336.2px,#38d008 347.5px,#a0d800 357.9px,#d8e000 366.7px,#f0a000 377.0px,#f06000 383.8px,#e83000 386.4px,#000 384.6px)"></i>
<i style="left:665px;width:2px;background:linear-gradient(#000 201.1px,#d07000 202.0px,#d79f00 206.7px,#c8c800 210.9px,#90c800 222.7px,#41c001 234.2px,#12bf11 245.9px,#10bd1b 258.5px,#10ae4d 262.9px,#024cd0 263.5px,#0038c8 272.3px,#0048d0 302.0px,#0060d8 319.1px,#0090e0 330.2px,#30e0d8 335.4px,#20d820 336.9px,#38d008 348.3px,#a0d800 358.6px,#d8e000 367.4px,#f0a000 377.7px,#f06000 384.5px,#e83000 387.0px,#000 385.6px)"></i>
<i style="left:667px;width:2px;background:linear-gradient(#000 202.2px,#d07000 202.7px,#d79f00 207.3px,#c8c800 211.6px,#90c800 223.2px,#41c001 234.8px,#11bf11 246.5px,#10be1a 259.8px,#10af4a 263.9px,#014cd0 264.6px,#0038c8 272.8px,#0048d0 302.6px,#0060d8 319.8px,#0090e0 331.0px,#30e0d8 336.2px,#20d820 337.7px,#38d008 349.1px,#a0d800 359.4px,#d8e000 368.2px,#f0a000 378.5px,#f06000 385.2px,#e83000 387.7px,#000 387.3px)"></i>
<i style="left:669px;width:2px;background:linear-gradient(#000 204.3px,#d07000 204.3px,#d8a000 208.0px,#c8c800 212.2px,#90c800 223.8px,#40c000 235.4px,#11c010 247.1px,#10be1a 255.5px,#10af47 259.4px,#014ad0 260.1px,#0038c8 273.2px,#0048d0 303.2px,#0060d8 320.5px,#0090e0 331.8px,#30e0d8 337.0px,#20d820 338.5px,#38d008 349.9px,#a0d800 360.1px,#d8e000 368.9px,#f0a000 379.2px,#f06000 385.9px,#e83000 388.4px,#000 388.1px)"></i>
<i style="left:671px;width:2px;background:linear-gradient(#000 203.1px,#d07000 204.0px,#d8a000 208.7px,#c8c800 212.8px,#90c800 224.4px,#40c000 236.0px,#11c010 247.6px,#10bf19 256.3px,#10af44 260.1px,#014ad0 260.7px,#0038c8 273.7px,#0048d0 303.9px,#0060d8 321.2px,#0090e0 332.5px,#30e0d8 337.8px,#20d820 339.3px,#38d008 350.6px,#a0d800 360.9px,#d8e000 369.6px,#f0a000 379.9px,#f06000 386.6px,#e83000 389.2px,#000 388.2px)"></i>
<i style="left:673px;width:2px;background:linear-gradient(#000 203.5px,#d07000 204.7px,#d8a000 209.3px,#c8c800 213.4px,#90c800 225.0px,#40c000 236.6px,#10c010 248.2px,#10c018 259.6px,#10b041 263.2px,#0048d0 263.8px,#0038c8 274.2px,#0048d0 304.5px,#0060d8 321.9px,#0090e0 333.3px,#30e0d8 338.6px,#20d820 340.1px,#38d008 351.4px,#a0d800 361.7px,#d8e000 370.4px,#f0a000 380.7px,#f06000 387.3px,#e83000 389.9px,#000 388.0px)"></i>
<i style="left:675px;width:2px;background:linear-gradient(#000 205.2px,#d07000 205.4px,#d8a000 210.0px,#c8c800 214.1px,#90c800 225.7px,#40c000 237.3px,#10c010 248.9px,#10c018 260.9px,#10b040 264.4px,#0048d0 264.9px,#0038c8 274.8px,#0048d0 305.2px,#0060d8 322.6px,#0090e0 334.1px,#30e0d8 339.4px,#20d820 340.9px,#38d008 352.2px,#a0d800 362.4px,#d8e000 371.1px,#f0a000 381.4px,#f06000 388.1px,#e83000 390.6px,#000 390.4px)"></i>
<i style="left:677px;width:2px;background:linear-gradient(#000 205.6px,#d07000 206.2px,#d8a000 210.8px,#c8c800 214.9px,#90c800 226.4px,#40c000 238.0px,#10c010 249.6px,#10c018 261.9px,#10b040 265.4px,#0048d0 266.0px,#0038c8 275.5px,#0048d0 305.9px,#0060d8 323.4px,#0090e0 334.8px,#30e0d8 340.1px,#20d820 341.7px,#38d008 352.9px,#a0d800 363.2px,#d8e000 371.9px,#f0a000 382.1px,#f06000 388.8px,#e83000 391.4px,#000 390.8px)"></i>
<i style="left:679px;width:2px;background:linear-gradient(#000 206.0px,#d07000 207.0px,#d8a000 211.6px,#c8c800 215.7px,#90c800 227.2px,#40c000 238.8px,#10c010 250.3px,#10c018 259.5px,#10b040 263.0px,#0048d0 263.6px,#0038c8 276.2px,#0048d0 306.6px,#0060d8 324.1px,#0090e0 335.5px,#30e0d8 340.9px,#20d820 342.4px,#38d008 353.7px,#a0d800 363.9px,#d8e000 372.6px,#f0a000 382.9px,#f06000 389.5px,#e83000 392.1px,#000 392.6px)"></i>
<i style="left:681px;width:2px;background:linear-gradient(#000 207.5px,#d07000 207.8px,#d8a000 212.4px,#c8c800 216.4px,#90c800 228.0px,#40c000 239.5px,#10c010 251.0px,#10c018 259.7px,#10b040 263.1px,#0048d0 263.7px,#0038c8 276.9px,#0048d0 307.3px,#0060d8 324.9px,#0090e0 336.3px,#30e0d8 341.6px,#20d820 343.2px,#38d008 354.4px,#a0d800 364.7px,#d8e000 373.4px,#f0a000 383.6px,#f06000 390.3px,#e83000 392.9px,#000 391.6px)"></i>
<i style="left:683px;width:2px;background:linear-gradient(#000 208.6px,#d07000 208.6px,#d8a000 213.2px,#c8c800 217.2px,#90c800 228.7px,#40c000 240.3px,#10c010 251.8px,#10c018 259.6px,#10b040 263.0px,#0048d0 263.6px,#0038c8 277.6px,#0048d0 308.1px,#0060d8 325.6px,#0090e0 337.0px,#30e0d8 342.4px,#20d820 343.9px,#38d008 355.2px,#a0d800 365.4px,#d8e000 374.2px,#f0a000 384.4px,#f06000 391.1px,#e83000 393.6px,#000 392.6px)"></i>
<i style="left:685px;width:2px;background:linear-gradient(#000 208.9px,#d07000 209.4px,#d8a000 214.0px,#c8c800 218.0px,#90c800 229.5px,#40c000 241.0px,#10c010 252.5px,#10c018 262.1px,#10b040 265.5px,#0048d0 266.1px,#0038c8 278.3px,#0048d0 308.8px,#0060d8 326.3px,#0090e0 337.8px,#30e0d8 343.1px,#20d820 344.7px,#38d008 355.9px,#a0d800 366.2px,#d8e000 374.9px,#f0a000 385.2px,#f06000 391.9px,#e83000 394.4px,#000 393.0px)"></i>
<i style="left:687px;width:2px;background:linear-gradient(#000 210.9px,#d07000 210.9px,#d8a000 214.8px,#c8c800 218.8px,#90c800 230.3px,#40c000 241.7px,#10c010 253.2px,#10c018 263.9px,#10b040 267.4px,#0048d0 267.9px,#0038c8 279.0px,#0048d0 309.5px,#0060d8 327.1px,#0090e0 338.5px,#30e0d8 343.9px,#20d820 345.4px,#38d008 356.7px,#a0d800 367.0px,#d8e000 375.7px,#f0a000 386.0px,#f06000 392.6px,#e83000 395.2px,#000 394.4px)"></i>
<i style="left:689px;width:2px;background:linear-gradient(#000 212.1px,#d07000 212.1px,#d8a000 215.6px,#c8c800 219.6px,#90c800 231.0px,#40c000 242.5px,#10c010 253.9px,#10c018 266.5px,#10b040 269.9px,#0048d0 270.5px,#0038c8 279.7px,#0048d0 310.3px,#0060d8 327.8px,#0090e0 339.3px,#30e0d8 344.6px,#20d820 346.2px,#38d008 357.5px,#a0d800 367.7px,#d8e000 376.5px,#f0a000 386.8px,#f06000 393.4px,#e83000 396.0px,#000 395.7px)"></i>
<i style="left:691px;width:2px;background:linear-gradient(#000 211.0px,#d07000 211.8px,#d8a000 216.4px,#c8c800 220.4px,#90c800 231.8px,#40c000 243.2px,#10c010 254.7px,#10c018 262.1px,#10b040 265.6px,#0048d0 266.1px,#0038c8 280.4px,#0048d0 311.0px,#0060d8 328.6px,#0090e0 340.0px,#30e0d8 345.4px,#20d820 346.9px,#38d008 358.2px,#a0d800 368.5px,#d8e000 377.3px,#f0a000 387.5px,#f06000 394.2px,#e83000 396.8px,#000 397.5px)"></i>
<i style="left:693px;width:2px;background:linear-gradient(#000 213.2px,#d07000 213.2px,#d8a000 217.2px,#c8c800 221.2px,#90c800 232.6px,#40c000 244.0px,#10c010 255.4px,#10c018 263.2px,#10b040 266.6px,#0048d0 267.2px,#0038c8 281.1px,#0048d0 311.7px,#0060d8 329.3px,#0090e0 340.8px,#30e0d8 346.1px,#20d820 347.7px,#38d008 359.0px,#a0d800 369.3px,#d8e000 378.0px,#f0a000 388.3px,#f06000 395.0px,#e83000 397.6px,#000 399.0px)"></i>
<i style="left:695px;width:2px;background:linear-gradient(#000 212.5px,#d07000 213.4px,#d8a000 218.0px,#c8c800 221.9px,#90c800 233.3px,#40c000 244.7px,#10c010 256.1px,#10c018 267.3px,#10b040 270.7px,#0048d0 271.3px,#0038c8 281.8px,#0048d0 312.4px,#0060d8 330.0px,#0090e0 341.5px,#30e0d8 346.9px,#20d820 348.4px,#38d008 359.8px,#a0d800 370.1px,#d8e000 378.8px,#f0a000 389.1px,#f06000 395.8px,#e83000 398.4px,#000 399.4px)"></i>
<i style="left:697px;width:2px;background:linear-gradient(#000 215.1px,#d07000 215.1px,#d8a000 218.7px,#c8c800 222.7px,#90c800 234.1px,#40c000 245.5px,#10c010 256.8px,#10c018 268.1px,#10b040 271.5px,#0048d0 272.1px,#0038c8 282.5px,#0048d0 313.2px,#0060d8 330.8px,#0090e0 342.3px,#30e0d8 347.6px,#20d820 349.2px,#38d008 360.5px,#a0d800 370.8px,#d8e000 379.6px,#f0a000 389.9px,#f06000 396.6px,#e83000 399.2px,#000 398.5px)"></i>
<i style="left:699px;width:2px;background:linear-gradient(#000 214.9px,#d07000 215.0px,#d8a000 219.5px,#c8c800 223.5px,#90c800 234.9px,#40c000 246.2px,#10c010 257.6px,#10c018 265.5px,#10b040 268.9px,#0048d0 269.5px,#0038c8 283.2px,#0048d0 313.9px,#0060d8 331.5px,#0090e0 343.0px,#30e0d8 348.4px,#20d820 349.9px,#38d008 361.3px,#a0d800 371.6px,#d8e000 380.4px,#f0a000 390.7px,#f06000 397.4px,#e83000 400.0px,#000 400.4px)"></i>
<i style="left:701px;width:2px;background:linear-gradient(#000 215.2px,#d07000 215.8px,#d8a000 220.3px,#c8c800 224.3px,#90c800 235.6px,#40c000 247.0px,#10c010 258.3px,#10c018 266.1px,#10b040 269.5px,#0048d0 270.0px,#0038c8 284.0px,#0048d0 314.6px,#0060d8 332.3px,#0090e0 343.8px,#30e0d8 349.1px,#20d820 350.7px,#38d008 362.0px,#a0d800 372.4px,#d8e000 381.2px,#f0a000 391.5px,#f06000 398.2px,#e83000 400.8px,#000 402.1px)"></i>
<i style="left:703px;width:2px;background:linear-gradient(#000 217.1px,#d07000 217.1px,#d8a000 221.1px,#c8c800 225.1px,#90c800 236.4px,#40c000 247.7px,#10c010 259.0px,#10c018 266.4px,#10b040 269.8px,#0048d0 270.3px,#0038c8 284.7px,#0048d0 315.3px,#0060d8 333.0px,#0090e0 344.5px,#30e0d8 349.9px,#20d820 351.4px,#38d008 362.8px,#a0d800 373.2px,#d8e000 381.9px,#f0a000 392.3px,#f06000 399.0px,#e83000 401.6px,#000 402.9px)"></i>
<i style="left:705px;width:2px;background:linear-gradient(#000 217.3px,#d07000 217.4px,#d8a000 221.9px,#c8c800 225.9px,#90c800 237.2px,#40c000 248.4px,#10c010 259.7px,#10c018 270.8px,#10b040 274.2px,#0048d0 274.7px,#0038c8 285.4px,#0048d0 316.1px,#0060d8 333.7px,#0090e0 345.3px,#30e0d8 350.6px,#20d820 352.2px,#38d008 363.6px,#a0d800 373.9px,#d8e000 382.7px,#f0a000 393.1px,#f06000 399.8px,#e83000 402.4px,#000 402.5px)"></i>
<i style="left:707px;width:2px;background:linear-gradient(#000 217.5px,#d07000 218.2px,#d8a000 222.7px,#c8c800 226.7px,#90c800 237.9px,#40c000 249.2px,#10c010 260.5px,#10c018 269.3px,#10b040 272.7px,#0048d0 273.2px,#0038c8 286.1px,#0048d0 316.8px,#0060d8 334.5px,#0090e0 346.0px,#30e0d8 351.4px,#20d820 352.9px,#38d008 364.3px,#a0d800 374.7px,#d8e000 383.5px,#f0a000 393.9px,#f06000 400.6px,#e83000 403.2px,#000 402.5px)"></i>
<i style="left:709px;width:2px;background:linear-gradient(#000 219.6px,#d07000 219.6px,#d8a000 223.5px,#c8c800 227.4px,#90c800 238.7px,#40c000 249.9px,#10c010 261.2px,#10c018 269.8px,#10b040 273.1px,#0048d0 273.7px,#0038c8 286.8px,#0048d0 317.5px,#0060d8 335.2px,#0090e0 346.7px,#30e0d8 352.1px,#20d820 353.7px,#38d008 365.1px,#a0d800 375.5px,#d8e000 384.3px,#f0a000 394.7px,#f06000 401.4px,#e83000 404.0px,#000 405.7px)"></i>
<i style="left:711px;width:2px;background:linear-gradient(#000 219.0px,#d07000 219.8px,#d8a000 224.3px,#c8c800 228.2px,#90c800 239.5px,#40c000 250.7px,#10c010 261.9px,#10c018 273.0px,#10b040 276.4px,#0048d0 276.9px,#0038c8 287.5px,#0048d0 318.3px,#0060d8 336.0px,#0090e0 347.5px,#30e0d8 352.9px,#20d820 354.4px,#38d008 365.9px,#a0d800 376.2px,#d8e000 385.1px,#f0a000 395.5px,#f06000 402.2px,#e83000 404.8px,#000 403.2px)"></i>
<i style="left:713px;width:2px;background:linear-gradient(#000 219.6px,#d07000 220.6px,#d8a000 225.1px,#c8c800 229.0px,#90c800 240.2px,#40c000 251.4px,#10c010 262.6px,#10c018 270.5px,#10b040 273.8px,#0048d0 274.4px,#0038c8 288.2px,#0048d0 319.0px,#0060d8 336.7px,#0090e0 348.2px,#30e0d8 353.6px,#20d820 355.2px,#38d008 366.6px,#a0d800 377.0px,#d8e000 385.8px,#f0a000 396.2px,#f06000 403.0px,#e83000 405.6px,#000 405.4px)"></i>
<i style="left:715px;width:2px;background:linear-gradient(#000 222.0px,#d07000 222.0px,#d8a000 225.7px,#c8c800 229.7px,#90c800 240.9px,#40c000 252.1px,#10c010 263.3px,#10c018 273.7px,#10b040 277.0px,#0048d0 277.6px,#0038c8 288.9px,#0048d0 319.6px,#0060d8 337.3px,#0090e0 348.9px,#30e0d8 354.2px,#20d820 355.8px,#38d008 367.3px,#a0d800 377.7px,#d8e000 386.6px,#f0a000 397.0px,#f06000 403.8px,#e83000 406.4px,#000 405.4px)"></i>
<i style="left:717px;width:2px;background:linear-gradient(#000 221.7px,#d07000 221.8px,#d8a000 226.3px,#c8c800 230.2px,#90c800 241.5px,#40c000 252.7px,#10c010 264.0px,#10c018 271.7px,#10b040 275.1px,#0048d0 275.6px,#0038c8 289.6px,#0048d0 320.2px,#0060d8 337.8px,#0090e0 349.3px,#30e0d8 354.7px,#20d820 356.3px,#38d008 367.8px,#a0d800 378.3px,#d8e000 387.2px,#f0a000 397.8px,#f06000 404.6px,#e83000 407.2px,#000 407.3px)"></i>
<i style="left:719px;width:2px;background:linear-gradient(#000 223.1px,#d07000 223.1px,#d8a000 226.8px,#c8c800 230.7px,#90c800 242.1px,#40c000 253.4px,#10c010 264.7px,#10c018 272.3px,#10b040 275.7px,#0048d0 276.2px,#0038c8 290.3px,#0048d0 320.8px,#0060d8 338.4px,#0090e0 349.8px,#30e0d8 355.2px,#20d820 356.8px,#38d008 368.4px,#a0d800 378.9px,#d8e000 387.9px,#f0a000 398.5px,#f06000 405.4px,#e83000 408.0px,#000 406.8px)"></i>
<i style="left:721px;width:2px;background:linear-gradient(#000 221.6px,#d07000 222.8px,#d8a000 227.3px,#c8c800 231.3px,#90c800 242.6px,#40c000 254.0px,#10c010 265.4px,#10c018 276.6px,#10b040 280.0px,#0048d0 280.6px,#0038c8 291.0px,#0048d0 321.4px,#0060d8 338.9px,#0090e0 350.3px,#30e0d8 355.6px,#20d820 357.2px,#38d008 368.9px,#a0d800 379.6px,#d8e000 388.6px,#f0a000 399.2px,#f06000 406.1px,#e83000 408.8px,#000 408.8px)"></i>
<i style="left:723px;width:2px;background:linear-gradient(#000 222.9px,#d07000 223.2px,#d8a000 227.8px,#c8c800 231.8px,#90c800 243.2px,#40c000 254.6px,#10c010 266.0px,#10c018 278.1px,#10b040 281.5px,#0048d0 282.0px,#0038c8 291.7px,#0048d0 322.0px,#0060d8 339.4px,#0090e0 350.8px,#30e0d8 356.1px,#20d820 357.7px,#38d008 369.5px,#a0d800 380.2px,#d8e000 389.3px,#f0a000 400.0px,#f06000 406.9px,#e83000 409.6px,#000 408.9px)"></i>
<i style="left:725px;width:2px;background:linear-gradient(#000 224.4px,#d07000 224.4px,#d8a000 228.3px,#c8c800 232.3px,#90c800 243.8px,#40c000 255.3px,#10c010 266.7px,#10c018 276.8px,#10b040 280.2px,#0048d0 280.8px,#0038c8 292.4px,#0048d0 322.6px,#0060d8 339.9px,#0090e0 351.3px,#30e0d8 356.6px,#20d820 358.2px,#38d008 370.0px,#a0d800 380.8px,#d8e000 389.9px,#f0a000 400.7px,#f06000 407.7px,#e83000 410.4px,#000 411.1px)"></i>
<i style="left:727px;width:2px;background:linear-gradient(#000 223.3px,#d07000 224.2px,#d8a000 228.9px,#c8c800 232.9px,#90c800 244.4px,#40c000 255.9px,#10c010 267.4px,#10c018 277.2px,#10b040 280.6px,#0048d0 281.2px,#0038c8 293.1px,#0048d0 323.2px,#0060d8 340.5px,#0090e0 351.8px,#30e0d8 357.0px,#20d820 358.7px,#38d008 370.6px,#a0d800 381.4px,#d8e000 390.6px,#f0a000 401.5px,#f06000 408.5px,#e83000 411.2px,#000 411.4px)"></i>
<i style="left:729px;width:2px;background:linear-gradient(#000 225.5px,#d07000 225.5px,#d8a000 229.4px,#c8c800 233.4px,#90c800 245.0px,#40c000 256.5px,#10c010 268.1px,#10c018 279.7px,#10b040 283.1px,#0048d0 283.7px,#0038c8 293.8px,#0048d0 323.8px,#0060d8 341.0px,#0090e0 352.2px,#30e0d8 357.5px,#20d820 359.1px,#38d008 371.1px,#a0d800 382.0px,#d8e000 391.3px,#f0a000 402.2px,#f06000 409.3px,#e83000 412.0px,#000 413.5px)"></i>
<i style="left:731px;width:2px;background:linear-gradient(#000 224.1px,#d07000 225.2px,#d8a000 229.9px,#c8c800 233.9px,#90c800 245.5px,#40c000 257.1px,#10c010 268.7px,#10c018 276.6px,#10b040 280.1px,#0048d0 280.7px,#0038c8 294.4px,#0048d0 324.3px,#0060d8 341.5px,#0090e0 352.7px,#30e0d8 358.0px,#20d820 359.6px,#38d008 371.7px,#a0d800 382.6px,#d8e000 392.0px,#f0a000 402.9px,#f06000 410.1px,#e83000 412.8px,#000 413.9px)"></i>
<i style="left:733px;width:2px;background:linear-gradient(#000 224.7px,#d07000 225.8px,#d8a000 230.4px,#c8c800 234.5px,#90c800 246.1px,#40c000 257.8px,#10c010 269.4px,#10c018 278.6px,#10b040 282.1px,#0048d0 282.6px,#0038c8 295.1px,#0048d0 324.9px,#0060d8 342.1px,#0090e0 353.2px,#30e0d8 358.4px,#20d820 360.1px,#38d008 372.2px,#a0d800 383.3px,#d8e000 392.6px,#f0a000 403.7px,#f06000 410.8px,#e83000 413.6px,#000 414.3px)"></i>
<i style="left:735px;width:2px;background:linear-gradient(#000 226.5px,#d07000 226.5px,#d8a000 230.9px,#c8c800 235.0px,#90c800 246.7px,#40c000 258.4px,#10c010 270.1px,#10c018 283.0px,#10b040 286.5px,#0048d0 287.1px,#0038c8 295.8px,#0048d0 325.5px,#0060d8 342.6px,#0090e0 353.7px,#30e0d8 358.9px,#20d820 360.6px,#38d008 372.8px,#a0d800 383.9px,#d8e000 393.3px,#f0a000 404.4px,#f06000 411.6px,#e83000 414.4px,#000 416.0px)"></i>
<i style="left:737px;width:2px;background:linear-gradient(#000 227.1px,#d07000 227.1px,#d8a000 231.4px,#c8c800 235.6px,#90c800 247.3px,#40c000 259.0px,#10c010 270.8px,#10c018 284.0px,#10b040 287.5px,#0048d0 288.1px,#0038c8 296.5px,#0048d0 326.1px,#0060d8 343.1px,#0090e0 354.2px,#30e0d8 359.4px,#20d820 361.0px,#38d008 373.3px,#a0d800 384.5px,#d8e000 394.0px,#f0a000 405.2px,#f06000 412.4px,#e83000 415.2px,#000 413.7px)"></i>
<i style="left:739px;width:2px;background:linear-gradient(#000 227.7px,#d07000 227.7px,#d8a000 232.0px,#c8c800 236.1px,#90c800 247.9px,#40c000 259.7px,#10c010 271.4px,#10c018 279.3px,#10b040 282.8px,#0048d0 283.4px,#0038c8 297.2px,#0048d0 326.7px,#0060d8 343.6px,#0090e0 354.7px,#30e0d8 359.8px,#20d820 361.5px,#38d008 373.9px,#a0d800 385.1px,#d8e000 394.7px,#f0a000 405.9px,#f06000 413.2px,#e83000 416.0px,#000 415.1px)"></i>
<i style="left:741px;width:2px;background:linear-gradient(#000 228.5px,#d07000 228.5px,#d8a000 232.5px,#c8c800 236.6px,#90c800 248.5px,#40c000 260.3px,#10c010 272.1px,#10c018 279.8px,#10b040 283.3px,#0048d0 283.9px,#0038c8 297.9px,#0048d0 327.3px,#0060d8 344.2px,#0090e0 355.2px,#30e0d8 360.3px,#20d820 362.0px,#38d008 374.4px,#a0d800 385.7px,#d8e000 395.3px,#f0a000 406.6px,#f06000 414.0px,#e83000 416.8px,#000 415.1px)"></i>
<i style="left:743px;width:2px;background:linear-gradient(#000 227.8px,#d07000 228.2px,#d8a000 233.0px,#c8c800 237.2px,#90c800 249.0px,#40c000 260.9px,#10c010 272.8px,#10c018 285.1px,#10b040 288.6px,#0048d0 289.2px,#0038c8 298.6px,#0048d0 327.9px,#0060d8 344.7px,#0090e0 355.6px,#30e0d8 360.8px,#20d820 362.5px,#38d008 375.0px,#a0d800 386.3px,#d8e000 396.0px,#f0a000 407.4px,#f06000 414.8px,#e83000 417.6px,#000 418.2px)"></i>
<i style="left:745px;width:2px;background:linear-gradient(#000 227.9px,#d07000 228.8px,#d8a000 233.5px,#c8c800 237.7px,#90c800 249.6px,#40c000 261.5px,#10c010 273.5px,#10c018 283.9px,#10b040 287.5px,#0048d0 288.1px,#0038c8 299.3px,#0048d0 328.4px,#0060d8 345.2px,#0090e0 356.1px,#30e0d8 361.2px,#20d820 362.9px,#38d008 375.5px,#a0d800 387.0px,#d8e000 396.7px,#f0a000 408.1px,#f06000 415.5px,#e83000 418.4px,#000 418.9px)"></i>
<i style="left:747px;width:2px;background:linear-gradient(#000 229.7px,#d07000 229.7px,#d8a000 234.0px,#c8c800 238.2px,#90c800 250.2px,#40c000 262.2px,#10c010 274.1px,#10c018 286.5px,#10b040 290.1px,#0048d0 290.7px,#0038c8 300.0px,#0048d0 329.0px,#0060d8 345.7px,#0090e0 356.6px,#30e0d8 361.7px,#20d820 363.4px,#38d008 376.1px,#a0d800 387.6px,#d8e000 397.4px,#f0a000 408.9px,#f06000 416.3px,#e83000 419.2px,#000 420.0px)"></i>
<i style="left:749px;width:2px;background:linear-gradient(#000 230.7px,#d07000 230.7px,#d8a000 234.6px,#c8c800 238.8px,#90c800 250.8px,#40c000 262.8px,#10c010 274.8px,#10c018 286.5px,#10b040 290.1px,#0048d0 290.7px,#0038c8 300.7px,#0048d0 329.6px,#0060d8 346.3px,#0090e0 357.1px,#30e0d8 362.2px,#20d820 363.9px,#38d008 376.6px,#a0d800 388.2px,#d8e000 398.0px,#f0a000 409.6px,#f06000 417.1px,#e83000 420.0px,#000 419.7px)"></i>
<i style="left:751px;width:2px;background:linear-gradient(#000 229.4px,#d07000 230.2px,#d8a000 235.1px,#c8c800 239.3px,#90c800 251.4px,#40c000 263.4px,#10c010 275.5px,#10c018 286.0px,#10b040 289.7px,#0048d0 290.3px,#0038c8 301.4px,#0048d0 330.2px,#0060d8 346.8px,#0090e0 357.6px,#30e0d8 362.6px,#20d820 364.4px,#38d008 377.2px,#a0d800 388.8px,#d8e000 398.7px,#f0a000 410.3px,#f06000 417.9px,#e83000 420.8px,#000 419.9px)"></i>
<i style="left:753px;width:2px;background:linear-gradient(#000 230.5px,#d07000 230.8px,#d8a000 235.6px,#c8c800 239.8px,#90c800 251.9px,#40c000 264.1px,#10c010 276.2px,#10c018 288.3px,#10b040 292.0px,#0048d0 292.6px,#0038c8 302.1px,#0048d0 330.8px,#0060d8 347.3px,#0090e0 358.1px,#30e0d8 363.1px,#20d820 364.9px,#38d008 377.7px,#a0d800 389.4px,#d8e000 399.4px,#f0a000 411.1px,#f06000 418.7px,#e83000 421.6px,#000 420.0px)"></i>
<i style="left:755px;width:2px;background:linear-gradient(#000 231.8px,#d07000 231.8px,#d8a000 236.1px,#c8c800 240.4px,#90c800 252.5px,#40c000 264.7px,#10c010 276.8px,#10c018 288.4px,#10b040 292.1px,#0048d0 292.7px,#0038c8 302.8px,#0048d0 331.4px,#0060d8 347.8px,#0090e0 358.6px,#30e0d8 363.6px,#20d820 365.3px,#38d008 378.3px,#a0d800 390.0px,#d8e000 400.0px,#f0a000 411.8px,#f06000 419.5px,#e83000 422.4px,#000 420.8px)"></i>
<i style="left:757px;width:2px;background:linear-gradient(#000 230.7px,#d07000 231.8px,#d8a000 236.6px,#c8c800 240.9px,#90c800 253.1px,#40c000 265.3px,#10c010 277.5px,#10c018 285.6px,#10b040 289.3px,#0048d0 289.9px,#0038c8 303.5px,#0048d0 332.0px,#0060d8 348.4px,#0090e0 359.0px,#30e0d8 364.0px,#20d820 365.8px,#38d008 378.8px,#a0d800 390.7px,#d8e000 400.7px,#f0a000 412.6px,#f06000 420.2px,#e83000 423.2px,#000 424.8px)"></i>
<i style="left:759px;width:2px;background:linear-gradient(#000 233.0px,#d07000 233.0px,#d8a000 237.1px,#c8c800 241.4px,#90c800 253.7px,#40c000 265.9px,#10c010 278.2px,#10c018 289.0px,#10b040 292.7px,#0048d0 293.3px,#0038c8 304.1px,#0048d0 332.6px,#0060d8 348.9px,#0090e0 359.5px,#30e0d8 364.5px,#20d820 366.3px,#38d008 379.4px,#a0d800 391.3px,#d8e000 401.4px,#f0a000 413.3px,#f06000 421.0px,#e83000 424.0px,#000 423.1px)"></i>
<i style="left:761px;width:2px;background:linear-gradient(#000 232.4px,#d07000 232.8px,#d8a000 237.7px,#c8c800 242.0px,#90c800 254.3px,#40c000 266.6px,#10c010 278.9px,#10c018 292.2px,#10b040 295.9px,#0048d0 296.5px,#0038c8 304.8px,#0048d0 333.1px,#0060d8 349.4px,#0090e0 360.0px,#30e0d8 365.0px,#20d820 366.8px,#38d008 379.9px,#a0d800 391.9px,#d8e000 402.1px,#f0a000 414.0px,#f06000 421.8px,#e83000 424.8px,#000 426.0px)"></i>
<i style="left:763px;width:2px;background:linear-gradient(#000 233.5px,#d07000 233.5px,#d8a000 238.2px,#c8c800 242.5px,#90c800 254.9px,#40c000 267.2px,#10c010 279.5px,#10c018 292.3px,#10b040 296.0px,#0048d0 296.6px,#0038c8 305.5px,#0048d0 333.7px,#0060d8 349.9px,#0090e0 360.5px,#30e0d8 365.4px,#20d820 367.2px,#38d008 380.5px,#a0d800 392.5px,#d8e000 402.7px,#f0a000 414.8px,#f06000 422.6px,#e83000 425.6px,#000 424.8px)"></i>
<i style="left:765px;width:2px;background:linear-gradient(#000 233.6px,#d07000 233.8px,#d8a000 238.7px,#c8c800 243.0px,#90c800 255.4px,#40c000 267.8px,#10c010 280.2px,#10c018 292.3px,#10b040 296.0px,#0048d0 296.6px,#0038c8 306.2px,#0048d0 334.3px,#0060d8 350.5px,#0090e0 361.0px,#30e0d8 365.9px,#20d820 367.7px,#38d008 381.0px,#a0d800 393.1px,#d8e000 403.4px,#f0a000 415.5px,#f06000 423.3px,#e83000 426.4px,#000 427.7px)"></i>
<i style="left:767px;width:2px;background:linear-gradient(#000 233.1px,#d07000 234.2px,#d8a000 239.2px,#c8c800 243.6px,#90c800 256.0px,#40c000 268.5px,#10c010 280.9px,#10c018 292.8px,#10b040 296.5px,#0048d0 297.2px,#0038c8 306.9px,#0048d0 334.9px,#0060d8 351.0px,#0090e0 361.5px,#30e0d8 366.4px,#20d820 368.2px,#38d008 381.6px,#a0d800 393.7px,#d8e000 404.1px,#f0a000 416.2px,#f06000 424.1px,#e83000 427.1px,#000 429.0px)"></i>
<i style="left:769px;width:2px;background:linear-gradient(#000 234.9px,#d07000 234.9px,#d8a000 239.7px,#c8c800 244.1px,#90c800 256.6px,#40c000 269.1px,#10c010 281.6px,#10c018 294.7px,#10b040 298.4px,#0048d0 299.1px,#0038c8 307.6px,#0048d0 335.5px,#0060d8 351.5px,#0090e0 362.0px,#30e0d8 366.8px,#20d820 368.7px,#38d008 382.1px,#a0d800 394.3px,#d8e000 404.7px,#f0a000 416.9px,#f06000 424.9px,#e83000 427.9px,#000 426.9px)"></i>
<i style="left:771px;width:2px;background:linear-gradient(#000 236.0px,#d07000 236.0px,#d8a000 240.3px,#c8c800 244.6px,#90c800 257.2px,#40c000 269.7px,#10c010 282.2px,#10c018 292.3px,#10b040 296.0px,#0048d0 296.6px,#0038c8 308.3px,#0048d0 336.1px,#0060d8 352.0px,#0090e0 362.4px,#30e0d8 367.3px,#20d820 369.1px,#38d008 382.6px,#a0d800 394.9px,#d8e000 405.4px,#f0a000 417.6px,#f06000 425.6px,#e83000 428.7px,#000 427.3px)"></i>
<i style="left:773px;width:2px;background:linear-gradient(#000 235.5px,#d07000 235.8px,#d8a000 240.8px,#c8c800 245.2px,#90c800 257.8px,#40c000 270.3px,#10c010 282.9px,#10c018 293.6px,#10b040 297.4px,#0048d0 298.0px,#0038c8 309.0px,#0048d0 336.7px,#0060d8 352.6px,#0090e0 362.9px,#30e0d8 367.8px,#20d820 369.6px,#38d008 383.2px,#a0d800 395.5px,#d8e000 406.0px,#f0a000 418.3px,#f06000 426.4px,#e83000 429.4px,#000 429.9px)"></i>
<i style="left:775px;width:2px;background:linear-gradient(#000 235.9px,#d07000 236.5px,#d8a000 241.5px,#c8c800 245.9px,#90c800 258.5px,#40c000 271.1px,#10c010 283.7px,#10c018 295.8px,#10b040 299.6px,#0048d0 300.2px,#0038c8 309.8px,#0048d0 337.4px,#0060d8 353.2px,#0090e0 363.6px,#30e0d8 368.4px,#20d820 370.3px,#38d008 383.8px,#a0d800 396.2px,#d8e000 406.7px,#f0a000 419.1px,#f06000 427.1px,#e83000 430.2px,#000 431.7px)"></i>
<i style="left:777px;width:2px;background:linear-gradient(#000 238.0px,#d07000 238.0px,#d8a000 242.5px,#c8c800 246.9px,#90c800 259.5px,#40c000 272.1px,#10c010 284.6px,#10c018 297.9px,#10b040 301.6px,#0048d0 302.3px,#0038c8 310.7px,#0048d0 338.2px,#0060d8 354.1px,#0090e0 364.4px,#30e0d8 369.2px,#20d820 371.1px,#38d008 384.6px,#a0d800 397.0px,#d8e000 407.5px,#f0a000 419.8px,#f06000 427.8px,#e83000 430.9px,#000 429.8px)"></i>
<i style="left:779px;width:2px;background:linear-gradient(#000 237.7px,#d07000 238.5px,#d8a000 243.5px,#c8c800 247.9px,#90c800 260.5px,#40c000 273.0px,#10c010 285.6px,#10c018 295.8px,#10b040 299.6px,#0048d0 300.2px,#0038c8 311.6px,#0048d0 339.1px,#0060d8 354.9px,#0090e0 365.2px,#30e0d8 370.0px,#20d820 371.9px,#38d008 385.4px,#a0d800 397.8px,#d8e000 408.2px,#f0a000 420.6px,#f06000 428.6px,#e83000 431.7px,#000 430.2px)"></i>
<i style="left:781px;width:2px;background:linear-gradient(#000 239.7px,#d07000 239.7px,#d8a000 244.5px,#c8c800 248.9px,#90c800 261.4px,#40c000 274.0px,#10c010 286.5px,#10c018 295.8px,#10b040 299.5px,#0048d0 300.2px,#0038c8 312.4px,#0048d0 339.9px,#0060d8 355.7px,#0090e0 366.0px,#30e0d8 370.8px,#20d820 372.6px,#38d008 386.2px,#a0d800 398.5px,#d8e000 409.0px,#f0a000 421.3px,#f06000 429.3px,#e83000 432.4px,#000 431.3px)"></i>
<i style="left:783px;width:2px;background:linear-gradient(#000 240.6px,#d07000 240.6px,#d8a000 245.5px,#c8c800 249.9px,#90c800 262.4px,#40c000 274.9px,#10c010 287.4px,#10c018 297.3px,#10b040 301.1px,#0048d0 301.7px,#0038c8 313.3px,#0048d0 340.8px,#0060d8 356.5px,#0090e0 366.8px,#30e0d8 371.6px,#20d820 373.4px,#38d008 387.0px,#a0d800 399.3px,#d8e000 409.7px,#f0a000 422.0px,#f06000 430.0px,#e83000 433.1px,#000 434.3px)"></i>
<i style="left:785px;width:2px;background:linear-gradient(#000 242.4px,#d07000 242.4px,#d8a000 246.5px,#c8c800 250.9px,#90c800 263.4px,#40c000 275.8px,#10c010 288.3px,#10c018 299.2px,#10b040 303.0px,#0048d0 303.6px,#0038c8 314.2px,#0048d0 341.6px,#0060d8 357.3px,#0090e0 367.6px,#30e0d8 372.4px,#20d820 374.2px,#38d008 387.7px,#a0d800 400.0px,#d8e000 410.5px,#f0a000 422.7px,#f06000 430.7px,#e83000 433.8px,#000 432.5px)"></i>
<i style="left:787px;width:2px;background:linear-gradient(#000 242.1px,#d07000 242.5px,#d8a000 247.5px,#c8c800 251.9px,#90c800 264.3px,#40c000 276.8px,#10c010 289.3px,#10c018 298.1px,#10b040 301.8px,#0048d0 302.4px,#0038c8 315.1px,#0048d0 342.4px,#0060d8 358.2px,#0090e0 368.4px,#30e0d8 373.2px,#20d820 375.0px,#38d008 388.5px,#a0d800 400.8px,#d8e000 411.2px,#f0a000 423.4px,#f06000 431.4px,#e83000 434.5px,#000 434.3px)"></i>
<i style="left:789px;width:2px;background:linear-gradient(#000 243.2px,#d07000 243.5px,#d8a000 248.5px,#c8c800 252.8px,#90c800 265.3px,#40c000 277.7px,#10c010 290.2px,#10c018 302.2px,#10b040 305.9px,#0048d0 306.5px,#0038c8 316.0px,#0048d0 343.3px,#0060d8 359.0px,#0090e0 369.2px,#30e0d8 374.0px,#20d820 375.8px,#38d008 389.3px,#a0d800 401.5px,#d8e000 411.9px,#f0a000 424.1px,#f06000 432.1px,#e83000 435.1px,#000 435.0px)"></i>
<i style="left:791px;width:2px;background:linear-gradient(#000 244.4px,#d07000 244.5px,#d8a000 249.5px,#c8c800 253.8px,#90c800 266.3px,#40c000 278.7px,#10c010 291.1px,#10c018 304.7px,#10b040 308.4px,#0048d0 309.0px,#0038c8 316.9px,#0048d0 344.1px,#0060d8 359.8px,#0090e0 370.0px,#30e0d8 374.8px,#20d820 376.6px,#38d008 390.0px,#a0d800 402.2px,#d8e000 412.6px,#f0a000 424.8px,#f06000 432.7px,#e83000 435.8px,#000 436.9px)"></i>
<i style="left:793px;width:2px;background:linear-gradient(#000 245.0px,#d07000 245.5px,#d8a000 250.5px,#c8c800 254.8px,#90c800 267.2px,#40c000 279.6px,#10c010 292.0px,#10c018 302.3px,#10b040 306.0px,#0048d0 306.6px,#0038c8 317.8px,#0048d0 345.0px,#0060d8 360.6px,#0090e0 370.8px,#30e0d8 375.6px,#20d820 377.4px,#38d008 390.8px,#a0d800 403.0px,#d8e000 413.3px,#f0a000 425.5px,#f06000 433.4px,#e83000 436.4px,#000 436.1px)"></i>
<i style="left:795px;width:2px;background:linear-gradient(#000 246.0px,#d07000 246.2px,#d8a000 251.2px,#c8c800 255.5px,#90c800 268.0px,#40c000 280.4px,#10c010 292.8px,#10c018 306.7px,#10b040 310.4px,#0048d0 311.0px,#0038c8 318.5px,#0048d0 345.8px,#0060d8 361.4px,#0090e0 371.6px,#30e0d8 376.4px,#20d820 378.2px,#38d008 391.6px,#a0d800 403.8px,#d8e000 414.1px,#f0a000 426.2px,#f06000 434.0px,#e83000 437.0px,#000 436.0px)"></i>
<i style="left:797px;width:2px;background:linear-gradient(#000 247.0px,#d07000 247.0px,#d8a000 251.7px,#c8c800 256.0px,#90c800 268.5px,#40c000 280.9px,#10c010 293.3px,#10c018 304.1px,#10b040 307.8px,#0048d0 308.4px,#0038c8 319.1px,#0048d0 346.5px,#0060d8 362.2px,#0090e0 372.4px,#30e0d8 377.2px,#20d820 379.0px,#38d008 392.5px,#a0d800 404.7px,#d8e000 415.0px,#f0a000 427.0px,#f06000 434.7px,#e83000 437.6px,#000 437.5px)"></i>
<i style="left:799px;width:2px;background:linear-gradient(#000 248.1px,#d07000 248.1px,#d8a000 252.1px,#c8c800 256.5px,#90c800 269.0px,#40c000 281.4px,#10c010 293.9px,#10c018 305.3px,#10b040 309.1px,#0048d0 309.7px,#0038c8 319.8px,#0048d0 347.2px,#0060d8 362.9px,#0090e0 373.2px,#30e0d8 378.0px,#20d820 379.8px,#38d008 393.3px,#a0d800 405.5px,#d8e000 415.9px,#f0a000 427.7px,#f06000 435.3px,#e83000 438.2px,#000 439.5px)"></i>
<i style="left:801px;width:2px;background:linear-gradient(#000 246.9px,#d07000 247.6px,#d8a000 252.6px,#c8c800 257.0px,#90c800 269.5px,#40c000 282.0px,#10c010 294.5px,#10c018 308.6px,#10b040 312.3px,#0048d0 313.0px,#0038c8 320.4px,#0048d0 347.9px,#0060d8 363.7px,#0090e0 374.0px,#30e0d8 378.8px,#20d820 380.6px,#38d008 394.2px,#a0d800 406.4px,#d8e000 416.7px,#f0a000 428.5px,#f06000 436.0px,#e83000 438.8px,#000 438.0px)"></i>
<i style="left:803px;width:2px;background:linear-gradient(#000 248.7px,#d07000 248.7px,#d8a000 253.0px,#c8c800 257.4px,#90c800 270.0px,#40c000 282.5px,#10c010 295.0px,#10c018 307.6px,#10b040 311.3px,#0048d0 312.0px,#0038c8 321.0px,#0048d0 348.6px,#0060d8 364.4px,#0090e0 374.8px,#30e0d8 379.6px,#20d820 381.4px,#38d008 395.1px,#a0d800 407.3px,#d8e000 417.6px,#f0a000 429.2px,#f06000 436.6px,#e83000 439.4px,#000 439.7px)"></i>
<i style="left:805px;width:2px;background:linear-gradient(#000 247.3px,#d07000 248.5px,#d8a000 253.5px,#c8c800 257.9px,#90c800 270.5px,#40c000 283.0px,#10c010 295.6px,#10c018 306.9px,#10b040 310.7px,#0048d0 311.3px,#0038c8 321.7px,#0048d0 349.3px,#0060d8 365.2px,#0090e0 375.6px,#30e0d8 380.4px,#20d820 382.2px,#38d008 395.9px,#a0d800 408.2px,#d8e000 418.4px,#f0a000 430.0px,#f06000 437.2px,#e83000 440.0px,#000 440.5px)"></i>
<i style="left:807px;width:2px;background:linear-gradient(#000 248.7px,#d07000 248.9px,#d8a000 254.0px,#c8c800 258.4px,#90c800 271.0px,#40c000 283.6px,#10c010 296.2px,#10c018 309.0px,#10b040 312.8px,#0048d0 313.4px,#0038c8 322.3px,#0048d0 350.0px,#0060d8 366.0px,#0090e0 376.3px,#30e0d8 381.2px,#20d820 383.0px,#38d008 396.7px,#a0d800 409.0px,#d8e000 419.3px,#f0a000 430.7px,#f06000 437.9px,#e83000 440.6px,#000 441.6px)"></i>
<i style="left:809px;width:2px;background:linear-gradient(#000 250.0px,#d07000 250.0px,#d8a000 254.4px,#c8c800 258.8px,#90c800 271.5px,#40c000 284.1px,#10c010 296.7px,#10c018 307.9px,#10b040 311.7px,#0048d0 312.3px,#0038c8 322.9px,#0048d0 350.7px,#0060d8 366.7px,#0090e0 377.1px,#30e0d8 382.0px,#20d820 383.8px,#38d008 397.6px,#a0d800 409.9px,#d8e000 420.1px,#f0a000 431.4px,#f06000 438.5px,#e83000 441.1px,#000 442.6px)"></i>
<i style="left:811px;width:2px;background:linear-gradient(#000 250.3px,#d07000 250.3px,#d8a000 254.9px,#c8c800 259.3px,#90c800 272.0px,#40c000 284.6px,#10c010 297.3px,#10c018 310.0px,#10b040 313.8px,#0048d0 314.4px,#0038c8 323.6px,#0048d0 351.4px,#0060d8 367.5px,#0090e0 377.9px,#30e0d8 382.8px,#20d820 384.6px,#38d008 398.4px,#a0d800 410.7px,#d8e000 421.0px,#f0a000 432.2px,#f06000 439.1px,#e83000 441.7px,#000 443.2px)"></i>
<i style="left:813px;width:2px;background:linear-gradient(#000 249.8px,#d07000 250.3px,#d8a000 255.3px,#c8c800 259.8px,#90c800 272.5px,#40c000 285.2px,#10c010 297.8px,#10c018 307.6px,#10b040 311.4px,#0048d0 312.0px,#0038c8 324.2px,#0048d0 352.1px,#0060d8 368.2px,#0090e0 378.7px,#30e0d8 383.6px,#20d820 385.4px,#38d008 399.3px,#a0d800 411.6px,#d8e000 421.8px,#f0a000 432.9px,#f06000 439.7px,#e83000 442.2px,#000 441.6px)"></i>
<i style="left:815px;width:2px;background:linear-gradient(#000 249.7px,#d07000 250.7px,#d8a000 255.8px,#c8c800 260.3px,#90c800 273.0px,#40c000 285.7px,#10c010 298.4px,#10c018 307.3px,#10b040 311.1px,#0048d0 311.8px,#0038c8 324.8px,#0048d0 352.9px,#0060d8 369.0px,#0090e0 379.5px,#30e0d8 384.4px,#20d820 386.2px,#38d008 400.1px,#a0d800 412.4px,#d8e000 422.6px,#f0a000 433.6px,#f06000 440.3px,#e83000 442.8px,#000 444.1px)"></i>
<i style="left:817px;width:2px;background:linear-gradient(#000 250.3px,#d07000 251.2px,#d8a000 256.3px,#c8c800 260.7px,#90c800 273.5px,#40c000 286.2px,#10c010 299.0px,#10c018 311.0px,#10b040 314.9px,#0048d0 315.5px,#0038c8 325.4px,#0048d0 353.6px,#0060d8 369.7px,#0090e0 380.3px,#30e0d8 385.2px,#20d820 386.9px,#38d008 401.0px,#a0d800 413.3px,#d8e000 423.5px,#f0a000 434.3px,#f06000 440.9px,#e83000 443.3px,#000 443.5px)"></i>
<i style="left:819px;width:2px;background:linear-gradient(#000 251.6px,#d07000 251.6px,#d8a000 256.7px,#c8c800 261.2px,#90c800 274.0px,#40c000 286.8px,#10c010 299.5px,#10c018 311.2px,#10b040 315.0px,#0048d0 315.6px,#0038c8 326.1px,#0048d0 354.3px,#0060d8 370.5px,#0090e0 381.1px,#30e0d8 386.0px,#20d820 387.7px,#38d008 401.8px,#a0d800 414.1px,#d8e000 424.3px,#f0a000 435.0px,#f06000 441.5px,#e83000 443.9px,#000 445.0px)"></i>
<i style="left:821px;width:2px;background:linear-gradient(#000 251.8px,#d07000 252.1px,#d8a000 257.2px,#c8c800 261.7px,#90c800 274.5px,#40c000 287.3px,#10c010 300.1px,#10c018 311.4px,#10b040 315.2px,#0048d0 315.9px,#0038c8 326.7px,#0048d0 355.0px,#0060d8 371.2px,#0090e0 381.9px,#30e0d8 386.8px,#20d820 388.5px,#38d008 402.6px,#a0d800 414.9px,#d8e000 425.1px,#f0a000 435.7px,#f06000 442.1px,#e83000 444.4px,#000 443.1px)"></i>
<i style="left:823px;width:2px;background:linear-gradient(#000 252.2px,#d07000 252.5px,#d8a000 257.7px,#c8c800 262.2px,#90c800 275.0px,#40c000 287.8px,#10c010 300.7px,#10c018 309.9px,#10b040 313.8px,#0048d0 314.4px,#0038c8 327.3px,#0048d0 355.7px,#0060d8 372.0px,#0090e0 382.6px,#30e0d8 387.6px,#20d820 389.3px,#38d008 403.5px,#a0d800 415.8px,#d8e000 425.9px,#f0a000 436.4px,#f06000 442.7px,#e83000 445.0px,#000 443.3px)"></i>
<i style="left:825px;width:2px;background:linear-gradient(#000 252.5px,#d07000 253.0px,#d8a000 258.1px,#c8c800 262.6px,#90c800 275.5px,#40c000 288.4px,#10c010 301.2px,#10c018 315.4px,#10b040 319.3px,#0048d0 319.9px,#0038c8 328.0px,#0048d0 356.4px,#0060d8 372.8px,#0090e0 383.4px,#30e0d8 388.4px,#20d820 390.1px,#38d008 404.3px,#a0d800 416.6px,#d8e000 426.8px,#f0a000 437.1px,#f06000 443.2px,#e83000 445.5px,#000 446.0px)"></i>
<i style="left:827px;width:2px;background:linear-gradient(#000 252.4px,#d07000 253.4px,#d8a000 258.6px,#c8c800 263.1px,#90c800 276.0px,#40c000 288.9px,#10c010 301.8px,#10c018 311.1px,#10b040 314.9px,#0048d0 315.6px,#0038c8 328.6px,#0048d0 357.1px,#0060d8 373.5px,#0090e0 384.2px,#30e0d8 389.2px,#20d820 390.9px,#38d008 405.1px,#a0d800 417.4px,#d8e000 427.6px,#f0a000 437.8px,#f06000 443.8px,#e83000 446.0px,#000 447.8px)"></i>
<i style="left:829px;width:2px;background:linear-gradient(#000 254.0px,#d07000 254.0px,#d8a000 259.0px,#c8c800 263.6px,#90c800 276.5px,#40c000 289.4px,#10c010 302.3px,#10c018 316.8px,#10b040 320.7px,#0048d0 321.3px,#0038c8 329.2px,#0048d0 357.8px,#0060d8 374.3px,#0090e0 385.0px,#30e0d8 390.0px,#20d820 391.7px,#38d008 406.0px,#a0d800 418.3px,#d8e000 428.4px,#f0a000 438.5px,#f06000 444.4px,#e83000 446.6px,#000 445.9px)"></i>
<i style="left:831px;width:2px;background:linear-gradient(#000 255.1px,#d07000 255.1px,#d8a000 259.5px,#c8c800 264.0px,#90c800 277.0px,#40c000 290.0px,#10c010 302.9px,#10c018 313.5px,#10b040 317.4px,#0048d0 318.0px,#0038c8 329.9px,#0048d0 358.5px,#0060d8 375.0px,#0090e0 385.8px,#30e0d8 390.8px,#20d820 392.5px,#38d008 406.8px,#a0d800 419.1px,#d8e000 429.2px,#f0a000 439.2px,#f06000 445.0px,#e83000 447.1px,#000 445.9px)"></i>
<i style="left:833px;width:2px;background:linear-gradient(#000 254.3px,#d07000 254.8px,#d8a000 260.0px,#c8c800 264.5px,#90c800 277.5px,#40c000 290.5px,#10c010 303.5px,#10c018 313.8px,#10b040 317.7px,#0048d0 318.4px,#0038c8 330.5px,#0048d0 359.2px,#0060d8 375.8px,#0090e0 386.6px,#30e0d8 391.6px,#20d820 393.3px,#38d008 407.6px,#a0d800 419.9px,#d8e000 430.0px,#f0a000 439.9px,#f06000 445.6px,#e83000 447.6px,#000 449.3px)"></i>
<i style="left:835px;width:2px;background:linear-gradient(#000 254.6px,#d07000 255.2px,#d8a000 260.4px,#c8c800 265.0px,#90c800 277.9px,#40c000 290.9px,#10c010 303.9px,#10c018 318.3px,#10b040 322.2px,#0048d0 322.8px,#0038c8 331.0px,#0048d0 359.8px,#0060d8 376.4px,#0090e0 387.2px,#30e0d8 392.3px,#20d820 393.9px,#38d008 408.3px,#a0d800 420.7px,#d8e000 430.7px,#f0a000 440.6px,#f06000 446.1px,#e83000 448.2px,#000 449.1px)"></i>
<i style="left:837px;width:2px;background:linear-gradient(#000 254.6px,#d07000 255.6px,#d8a000 260.8px,#c8c800 265.4px,#90c800 278.3px,#40c000 291.3px,#10c010 304.3px,#10c018 318.7px,#10b040 322.6px,#0048d0 323.3px,#0038c8 331.3px,#0048d0 360.3px,#0060d8 376.9px,#0090e0 387.7px,#30e0d8 392.8px,#20d820 394.5px,#38d008 409.0px,#a0d800 421.4px,#d8e000 431.5px,#f0a000 441.2px,#f06000 446.7px,#e83000 448.7px,#000 448.9px)"></i>
<i style="left:839px;width:2px;background:linear-gradient(#000 256.5px,#d07000 256.5px,#d8a000 261.3px,#c8c800 265.8px,#90c800 278.7px,#40c000 291.7px,#10c010 304.6px,#10c018 317.5px,#10b040 321.4px,#0048d0 322.0px,#0038c8 331.7px,#0048d0 360.7px,#0060d8 377.4px,#0090e0 388.3px,#30e0d8 393.3px,#20d820 395.0px,#38d008 409.6px,#a0d800 422.0px,#d8e000 432.2px,#f0a000 441.9px,#f06000 447.3px,#e83000 449.2px,#000 448.2px)"></i>
<i style="left:841px;width:2px;background:linear-gradient(#000 256.1px,#d07000 256.5px,#d8a000 261.7px,#c8c800 266.2px,#90c800 279.1px,#40c000 292.1px,#10c010 305.0px,#10c018 319.4px,#10b040 323.3px,#0048d0 323.9px,#0038c8 332.1px,#0048d0 361.2px,#0060d8 377.9px,#0090e0 388.8px,#30e0d8 393.9px,#20d820 395.5px,#38d008 410.2px,#a0d800 422.7px,#d8e000 432.9px,#f0a000 442.5px,#f06000 447.8px,#e83000 449.7px,#000 449.9px)"></i>
<i style="left:843px;width:2px;background:linear-gradient(#000 257.2px,#d07000 257.2px,#d8a000 262.1px,#c8c800 266.6px,#90c800 279.5px,#40c000 292.5px,#10c010 305.4px,#10c018 315.0px,#10b040 318.9px,#0048d0 319.5px,#0038c8 332.4px,#0048d0 361.6px,#0060d8 378.4px,#0090e0 389.3px,#30e0d8 394.4px,#20d820 396.1px,#38d008 410.9px,#a0d800 423.4px,#d8e000 433.6px,#f0a000 443.1px,#f06000 448.4px,#e83000 450.2px,#000 449.0px)"></i>
<i style="left:845px;width:2px;background:linear-gradient(#000 257.2px,#d07000 257.4px,#d8a000 262.5px,#c8c800 267.1px,#90c800 279.9px,#40c000 292.8px,#10c010 305.7px,#10c018 319.5px,#10b040 323.3px,#0048d0 324.0px,#0038c8 332.8px,#0048d0 362.0px,#0060d8 378.9px,#0090e0 389.8px,#30e0d8 394.9px,#20d820 396.6px,#38d008 411.5px,#a0d800 424.1px,#d8e000 434.3px,#f0a000 443.8px,#f06000 448.9px,#e83000 450.7px,#000 452.5px)"></i>
<i style="left:847px;width:2px;background:linear-gradient(#000 257.4px,#d07000 257.8px,#d8a000 263.0px,#c8c800 267.5px,#90c800 280.3px,#40c000 293.2px,#10c010 306.1px,#10c018 318.4px,#10b040 322.2px,#0048d0 322.9px,#0038c8 333.2px,#0048d0 362.5px,#0060d8 379.3px,#0090e0 390.3px,#30e0d8 395.5px,#20d820 397.1px,#38d008 412.1px,#a0d800 424.8px,#d8e000 435.0px,#f0a000 444.4px,#f06000 449.4px,#e83000 451.2px,#000 452.3px)"></i>
<i style="left:849px;width:2px;background:linear-gradient(#000 257.5px,#d07000 258.2px,#d8a000 263.4px,#c8c800 267.9px,#90c800 280.7px,#40c000 293.6px,#10c010 306.4px,#10c018 316.8px,#10b040 320.6px,#0048d0 321.3px,#0038c8 333.5px,#0048d0 362.9px,#0060d8 379.8px,#0090e0 390.9px,#30e0d8 396.0px,#20d820 397.7px,#38d008 412.7px,#a0d800 425.4px,#d8e000 435.7px,#f0a000 445.0px,#f06000 450.0px,#e83000 451.8px,#000 451.6px)"></i>
<i style="left:851px;width:2px;background:linear-gradient(#000 258.7px,#d07000 258.7px,#d8a000 263.8px,#c8c800 268.3px,#90c800 281.1px,#40c000 294.0px,#10c010 306.8px,#10c018 318.9px,#10b040 322.8px,#0048d0 323.4px,#0038c8 333.9px,#0048d0 363.4px,#0060d8 380.3px,#0090e0 391.4px,#30e0d8 396.5px,#20d820 398.2px,#38d008 413.4px,#a0d800 426.1px,#d8e000 436.4px,#f0a000 445.7px,#f06000 450.5px,#e83000 452.2px,#000 452.6px)"></i>
<i style="left:853px;width:2px;background:linear-gradient(#000 259.6px,#d07000 259.6px,#d8a000 264.2px,#c8c800 268.7px,#90c800 281.5px,#40c000 294.3px,#10c010 307.2px,#10c018 316.3px,#10b040 320.2px,#0048d0 320.8px,#0038c8 334.3px,#0048d0 363.8px,#0060d8 380.8px,#0090e0 391.9px,#30e0d8 397.1px,#20d820 398.7px,#38d008 414.0px,#a0d800 426.8px,#d8e000 437.1px,#f0a000 446.3px,#f06000 451.1px,#e83000 452.8px,#000 453.8px)"></i>
<i style="left:855px;width:2px;background:linear-gradient(#000 260.0px,#d07000 260.0px,#d8a000 264.7px,#c8c800 269.1px,#90c800 281.9px,#40c000 294.7px,#10c010 307.5px,#10c018 320.8px,#10b040 324.6px,#0048d0 325.3px,#0038c8 334.6px,#0048d0 364.3px,#0060d8 381.3px,#0090e0 392.4px,#30e0d8 397.6px,#20d820 399.3px,#38d008 414.6px,#a0d800 427.5px,#d8e000 437.8px,#f0a000 446.9px,#f06000 451.6px,#e83000 453.2px,#000 454.4px)"></i>
<i style="left:857px;width:2px;background:linear-gradient(#000 260.9px,#d07000 260.9px,#d8a000 265.1px,#c8c800 269.6px,#90c800 282.3px,#40c000 295.1px,#10c010 307.9px,#10c018 320.2px,#10b040 324.0px,#0048d0 324.7px,#0038c8 335.0px,#0048d0 364.7px,#0060d8 381.8px,#0090e0 392.9px,#30e0d8 398.1px,#20d820 399.8px,#38d008 415.2px,#a0d800 428.1px,#d8e000 438.5px,#f0a000 447.5px,#f06000 452.1px,#e83000 453.8px,#000 453.1px)"></i>
<i style="left:859px;width:2px;background:linear-gradient(#000 261.2px,#d07000 261.2px,#d8a000 265.5px,#c8c800 270.0px,#90c800 282.7px,#40c000 295.5px,#10c010 308.2px,#10c018 317.3px,#10b040 321.2px,#0048d0 321.8px,#0038c8 335.3px,#0048d0 365.1px,#0060d8 382.3px,#0090e0 393.5px,#30e0d8 398.7px,#20d820 400.3px,#38d008 415.9px,#a0d800 428.8px,#d8e000 439.1px,#f0a000 448.2px,#f06000 452.7px,#e83000 454.2px,#000 454.3px)"></i>
<i style="left:861px;width:2px;background:linear-gradient(#000 260.3px,#d07000 260.9px,#d8a000 265.9px,#c8c800 270.4px,#90c800 283.1px,#40c000 295.9px,#10c010 308.6px,#10c018 318.4px,#10b040 322.2px,#0048d0 322.8px,#0038c8 335.7px,#0048d0 365.6px,#0060d8 382.8px,#0090e0 394.0px,#30e0d8 399.2px,#20d820 400.9px,#38d008 416.5px,#a0d800 429.5px,#d8e000 439.8px,#f0a000 448.8px,#f06000 453.2px,#e83000 454.8px,#000 453.6px)"></i>
<i style="left:863px;width:2px;background:linear-gradient(#000 261.9px,#d07000 261.9px,#d8a000 266.4px,#c8c800 270.8px,#90c800 283.5px,#40c000 296.2px,#10c010 308.9px,#10c018 319.1px,#10b040 322.9px,#0048d0 323.6px,#0038c8 336.1px,#0048d0 366.0px,#0060d8 383.3px,#0090e0 394.5px,#30e0d8 399.7px,#20d820 401.4px,#38d008 417.1px,#a0d800 430.1px,#d8e000 440.5px,#f0a000 449.4px,#f06000 453.8px,#e83000 455.2px,#000 455.7px)"></i>
<i style="left:865px;width:2px;background:linear-gradient(#000 260.7px,#d07000 261.7px,#d8a000 266.8px,#c8c800 271.2px,#90c800 283.9px,#40c000 296.6px,#10c010 309.3px,#10c018 320.6px,#10b040 324.4px,#0048d0 325.0px,#0038c8 336.4px,#0048d0 366.5px,#0060d8 383.7px,#0090e0 395.0px,#30e0d8 400.3px,#20d820 401.9px,#38d008 417.7px,#a0d800 430.8px,#d8e000 441.2px,#f0a000 450.0px,#f06000 454.3px,#e83000 455.8px,#000 456.1px)"></i>
<i style="left:867px;width:2px;background:linear-gradient(#000 261.1px,#d07000 262.1px,#d8a000 267.2px,#c8c800 271.7px,#90c800 284.3px,#40c000 297.0px,#10c010 309.7px,#10c018 319.4px,#10b040 323.3px,#0048d0 323.9px,#0038c8 336.8px,#0048d0 366.9px,#0060d8 384.2px,#0090e0 395.5px,#30e0d8 400.8px,#20d820 402.5px,#38d008 418.4px,#a0d800 431.5px,#d8e000 441.9px,#f0a000 450.7px,#f06000 454.8px,#e83000 456.2px,#000 455.9px)"></i>
<i style="left:869px;width:2px;background:linear-gradient(#000 262.8px,#d07000 262.8px,#d8a000 267.6px,#c8c800 272.1px,#90c800 284.7px,#40c000 297.4px,#10c010 310.0px,#10c018 320.2px,#10b040 324.0px,#0048d0 324.6px,#0038c8 337.2px,#0048d0 367.4px,#0060d8 384.7px,#0090e0 396.0px,#30e0d8 401.3px,#20d820 403.0px,#38d008 419.0px,#a0d800 432.2px,#d8e000 442.6px,#f0a000 451.3px,#f06000 455.4px,#e83000 456.8px,#000 457.3px)"></i>
<i style="left:871px;width:2px;background:linear-gradient(#000 262.2px,#d07000 263.0px,#d8a000 268.1px,#c8c800 272.5px,#90c800 285.1px,#40c000 297.7px,#10c010 310.4px,#10c018 322.1px,#10b040 325.8px,#0048d0 326.5px,#0038c8 337.5px,#0048d0 367.8px,#0060d8 385.2px,#0090e0 396.6px,#30e0d8 401.9px,#20d820 403.5px,#38d008 419.6px,#a0d800 432.8px,#d8e000 443.3px,#f0a000 451.9px,#f06000 455.9px,#e83000 457.2px,#000 455.6px)"></i>
<i style="left:873px;width:2px;background:linear-gradient(#000 263.6px,#d07000 263.6px,#d8a000 268.5px,#c8c800 272.9px,#90c800 285.5px,#40c000 298.1px,#10c010 310.7px,#10c018 320.0px,#10b040 323.8px,#0048d0 324.4px,#0038c8 337.9px,#0048d0 368.2px,#0060d8 385.7px,#0090e0 397.1px,#30e0d8 402.4px,#20d820 404.1px,#38d008 420.2px,#a0d800 433.5px,#d8e000 444.0px,#f0a000 452.5px,#f06000 456.4px,#e83000 457.8px,#000 458.9px)"></i>
<i style="left:875px;width:2px;background:linear-gradient(#000 264.6px,#d07000 264.6px,#d8a000 268.9px,#c8c800 273.3px,#90c800 285.9px,#40c000 298.5px,#10c010 311.1px,#10c018 323.9px,#10b040 327.7px,#0048d0 328.4px,#0038c8 338.2px,#0048d0 368.7px,#0060d8 386.2px,#0090e0 397.6px,#30e0d8 402.9px,#20d820 404.6px,#38d008 420.9px,#a0d800 434.2px,#d8e000 444.7px,#f0a000 453.1px,#f06000 457.0px,#e83000 458.2px,#000 457.7px)"></i>
<i style="left:877px;width:2px;background:linear-gradient(#000 264.5px,#d07000 264.5px,#d8a000 269.3px,#c8c800 273.7px,#90c800 286.3px,#40c000 298.9px,#10c010 311.5px,#10c018 322.5px,#10b040 326.2px,#0048d0 326.9px,#0038c8 338.6px,#0048d0 369.1px,#0060d8 386.7px,#0090e0 398.1px,#30e0d8 403.5px,#20d820 405.1px,#38d008 421.5px,#a0d800 434.8px,#d8e000 445.4px,#f0a000 453.8px,#f06000 457.5px,#e83000 458.8px,#000 459.5px)"></i>
<i style="left:879px;width:2px;background:linear-gradient(#000 265.6px,#d07000 265.6px,#d8a000 269.8px,#c8c800 274.2px,#90c800 286.7px,#40c000 299.3px,#10c010 311.8px,#10c018 322.6px,#10b040 326.3px,#0048d0 326.9px,#0038c8 339.0px,#0048d0 369.6px,#0060d8 387.2px,#0090e0 398.6px,#30e0d8 404.0px,#20d820 405.7px,#38d008 422.1px,#a0d800 435.5px,#d8e000 446.1px,#f0a000 454.4px,#f06000 458.1px,#e83000 459.2px,#000 459.2px)"></i>
<i style="left:881px;width:2px;background:linear-gradient(#000 266.1px,#d07000 266.1px,#d8a000 270.2px,#c8c800 274.6px,#90c800 287.1px,#40c000 299.6px,#10c010 312.2px,#10c018 323.9px,#10b040 327.6px,#0048d0 328.3px,#0038c8 339.3px,#0048d0 370.0px,#0060d8 387.7px,#0090e0 399.2px,#30e0d8 404.5px,#20d820 406.2px,#38d008 422.7px,#a0d800 436.2px,#d8e000 446.8px,#f0a000 455.0px,#f06000 458.6px,#e83000 459.8px,#000 459.1px)"></i>
<i style="left:883px;width:2px;background:linear-gradient(#000 264.9px,#d07000 265.6px,#d8a000 270.6px,#c8c800 275.0px,#90c800 287.5px,#40c000 300.0px,#10c010 312.5px,#10c018 321.7px,#10b040 325.5px,#0048d0 326.1px,#0038c8 339.7px,#0048d0 370.5px,#0060d8 388.1px,#0090e0 399.7px,#30e0d8 405.1px,#20d820 406.7px,#38d008 423.4px,#a0d800 436.9px,#d8e000 447.5px,#f0a000 455.7px,#f06000 459.2px,#e83000 460.3px,#000 459.5px)"></i>
<i style="left:885px;width:2px;background:linear-gradient(#000 266.6px,#d07000 266.6px,#d8a000 271.0px,#c8c800 275.4px,#90c800 287.9px,#40c000 300.4px,#10c010 312.9px,#10c018 326.5px,#10b040 330.2px,#0048d0 330.8px,#0038c8 340.1px,#0048d0 370.9px,#0060d8 388.6px,#0090e0 400.2px,#30e0d8 405.6px,#20d820 407.3px,#38d008 424.0px,#a0d800 437.6px,#d8e000 448.2px,#f0a000 456.3px,#f06000 459.7px,#e83000 460.8px,#000 462.1px)"></i>
<i style="left:887px;width:2px;background:linear-gradient(#000 266.4px,#d07000 266.5px,#d8a000 271.5px,#c8c800 275.8px,#90c800 288.3px,#40c000 300.8px,#10c010 313.2px,#10c018 322.2px,#10b040 325.9px,#0048d0 326.5px,#0038c8 340.4px,#0048d0 371.3px,#0060d8 389.1px,#0090e0 400.7px,#30e0d8 406.1px,#20d820 407.8px,#38d008 424.7px,#a0d800 438.3px,#d8e000 448.9px,#f0a000 457.0px,#f06000 460.3px,#e83000 461.4px,#000 462.0px)"></i>
<i style="left:889px;width:2px;background:linear-gradient(#000 266.0px,#d07000 266.9px,#d8a000 271.9px,#c8c800 276.3px,#90c800 288.7px,#40c000 301.2px,#10c010 313.6px,#10c018 325.1px,#10b040 328.8px,#0048d0 329.4px,#0038c8 340.8px,#0048d0 371.8px,#0060d8 389.6px,#0090e0 401.2px,#30e0d8 406.7px,#20d820 408.3px,#38d008 425.3px,#a0d800 439.0px,#d8e000 449.7px,#f0a000 457.7px,#f06000 460.9px,#e83000 461.9px,#000 461.8px)"></i>
<i style="left:891px;width:2px;background:linear-gradient(#000 267.2px,#d07000 267.4px,#d8a000 272.3px,#c8c800 276.7px,#90c800 289.1px,#40c000 301.5px,#10c010 314.0px,#10c018 327.9px,#10b040 331.7px,#0048d0 332.3px,#0038c8 341.2px,#0048d0 372.2px,#0060d8 390.1px,#0090e0 401.8px,#30e0d8 407.2px,#20d820 408.9px,#38d008 425.9px,#a0d800 439.7px,#d8e000 450.4px,#f0a000 458.4px,#f06000 461.5px,#e83000 462.5px,#000 462.0px)"></i>
<i style="left:893px;width:2px;background:linear-gradient(#000 267.0px,#d07000 267.8px,#d8a000 272.7px,#c8c800 277.1px,#90c800 289.5px,#40c000 301.9px,#10c010 314.3px,#10c018 323.3px,#10b040 327.0px,#0048d0 327.7px,#0038c8 341.5px,#0048d0 372.7px,#0060d8 390.6px,#0090e0 402.3px,#30e0d8 407.7px,#20d820 409.4px,#38d008 426.6px,#a0d800 440.4px,#d8e000 451.2px,#f0a000 459.1px,#f06000 462.2px,#e83000 463.1px,#000 463.2px)"></i>
<i style="left:895px;width:2px;background:linear-gradient(#000 268.7px,#d07000 268.7px,#d8a000 273.2px,#c8c800 277.6px,#90c800 290.0px,#40c000 302.5px,#10c010 314.9px,#10c018 327.3px,#10b040 331.0px,#0048d0 331.6px,#0038c8 342.0px,#0048d0 372.9px,#0060d8 390.7px,#0090e0 402.2px,#30e0d8 407.6px,#20d820 409.3px,#38d008 426.8px,#a0d800 440.9px,#d8e000 451.8px,#f0a000 459.7px,#f06000 462.8px,#e83000 463.7px,#000 463.9px)"></i>
<i style="left:897px;width:2px;background:linear-gradient(#000 269.4px,#d07000 269.4px,#d8a000 273.8px,#c8c800 278.2px,#90c800 290.7px,#40c000 303.2px,#10c010 315.7px,#10c018 329.8px,#10b040 333.6px,#0048d0 334.2px,#0038c8 342.7px,#0048d0 372.9px,#0060d8 390.3px,#0090e0 401.6px,#30e0d8 406.9px,#20d820 408.6px,#38d008 426.7px,#a0d800 441.1px,#d8e000 452.3px,#f0a000 460.4px,#f06000 463.4px,#e83000 464.3px,#000 463.9px)"></i>
<i style="left:899px;width:2px;background:linear-gradient(#000 270.2px,#d07000 270.2px,#d8a000 274.4px,#c8c800 278.8px,#90c800 291.4px,#40c000 304.0px,#10c010 316.5px,#10c018 330.8px,#10b040 334.6px,#0048d0 335.2px,#0038c8 343.4px,#0048d0 372.9px,#0060d8 389.9px,#0090e0 401.0px,#30e0d8 406.2px,#20d820 407.9px,#38d008 426.5px,#a0d800 441.3px,#d8e000 452.9px,#f0a000 461.0px,#f06000 464.0px,#e83000 464.9px,#000 465.1px)"></i>
<i style="left:901px;width:2px;background:linear-gradient(#000 270.8px,#d07000 270.8px,#d8a000 275.0px,#c8c800 279.4px,#90c800 292.1px,#40c000 304.7px,#10c010 317.4px,#10c018 327.8px,#10b040 331.6px,#0048d0 332.3px,#0038c8 344.0px,#0048d0 372.9px,#0060d8 389.6px,#0090e0 400.4px,#30e0d8 405.5px,#20d820 407.3px,#38d008 426.4px,#a0d800 441.6px,#d8e000 453.4px,#f0a000 461.7px,#f06000 464.7px,#e83000 465.5px,#000 465.2px)"></i>
<i style="left:903px;width:2px;background:linear-gradient(#000 270.9px,#d07000 270.9px,#d8a000 275.5px,#c8c800 280.0px,#90c800 292.7px,#40c000 305.5px,#10c010 318.2px,#10c018 330.4px,#10b040 334.2px,#0048d0 334.8px,#0038c8 344.7px,#0048d0 372.9px,#0060d8 389.2px,#0090e0 399.8px,#30e0d8 404.7px,#20d820 406.6px,#38d008 426.2px,#a0d800 441.8px,#d8e000 453.9px,#f0a000 462.3px,#f06000 465.3px,#e83000 466.1px,#000 465.2px)"></i>
<i style="left:905px;width:2px;background:linear-gradient(#000 270.0px,#d07000 271.0px,#d8a000 276.1px,#c8c800 280.6px,#90c800 293.4px,#40c000 306.2px,#10c010 319.0px,#10c018 333.2px,#10b040 337.0px,#0048d0 337.7px,#0038c8 345.4px,#0048d0 372.9px,#0060d8 388.8px,#0090e0 399.2px,#30e0d8 404.0px,#20d820 405.9px,#38d008 426.1px,#a0d800 442.1px,#d8e000 454.5px,#f0a000 463.0px,#f06000 465.9px,#e83000 466.7px,#000 468.6px)"></i>
<i style="left:907px;width:2px;background:linear-gradient(#000 271.1px,#d07000 271.4px,#d8a000 276.5px,#c8c800 281.0px,#90c800 293.9px,#40c000 306.7px,#10c010 319.5px,#10c018 331.8px,#10b040 335.7px,#0048d0 336.3px,#0038c8 345.9px,#0048d0 373.6px,#0060d8 389.5px,#0090e0 399.8px,#30e0d8 404.7px,#20d820 406.5px,#38d008 426.8px,#a0d800 442.9px,#d8e000 455.3px,#f0a000 463.7px,#f06000 466.6px,#e83000 467.4px,#000 465.9px)"></i>
<i style="left:909px;width:2px;background:linear-gradient(#000 272.1px,#d07000 272.1px,#d8a000 277.0px,#c8c800 281.5px,#90c800 294.3px,#40c000 307.2px,#10c010 320.1px,#10c018 333.9px,#10b040 337.7px,#0048d0 338.4px,#0038c8 346.5px,#0048d0 374.2px,#0060d8 390.1px,#0090e0 400.5px,#30e0d8 405.3px,#20d820 407.2px,#38d008 427.6px,#a0d800 443.7px,#d8e000 456.2px,#f0a000 464.5px,#f06000 467.3px,#e83000 468.0px,#000 469.7px)"></i>
<i style="left:911px;width:2px;background:linear-gradient(#000 272.9px,#d07000 272.9px,#d8a000 277.4px,#c8c800 281.9px,#90c800 294.8px,#40c000 307.7px,#10c010 320.6px,#10c018 333.4px,#10b040 337.3px,#0048d0 337.9px,#0038c8 347.1px,#0048d0 374.8px,#0060d8 390.7px,#0090e0 401.1px,#30e0d8 406.0px,#20d820 407.8px,#38d008 428.3px,#a0d800 444.5px,#d8e000 457.0px,#f0a000 465.3px,#f06000 467.9px,#e83000 468.6px,#000 470.5px)"></i>
<i style="left:913px;width:2px;background:linear-gradient(#000 273.7px,#d07000 273.7px,#d8a000 277.8px,#c8c800 282.3px,#90c800 295.3px,#40c000 308.2px,#10c010 321.1px,#10c018 330.0px,#10b040 333.9px,#0048d0 334.5px,#0038c8 347.7px,#0048d0 375.4px,#0060d8 391.4px,#0090e0 401.8px,#30e0d8 406.6px,#20d820 408.5px,#38d008 429.1px,#a0d800 445.3px,#d8e000 457.8px,#f0a000 466.0px,#f06000 468.6px,#e83000 469.2px,#000 469.1px)"></i>
<i style="left:915px;width:2px;background:linear-gradient(#000 272.4px,#d07000 273.0px,#d8a000 278.2px,#c8c800 282.8px,#90c800 295.7px,#40c000 308.7px,#10c010 321.7px,#10c018 332.4px,#10b040 336.3px,#0048d0 336.9px,#0038c8 348.3px,#0048d0 376.0px,#0060d8 392.0px,#0090e0 402.4px,#30e0d8 407.3px,#20d820 409.1px,#38d008 429.8px,#a0d800 446.1px,#d8e000 458.6px,#f0a000 466.7px,#f06000 469.2px,#e83000 469.8px,#000 468.3px)"></i>
<i style="left:917px;width:2px;background:linear-gradient(#000 272.9px,#d07000 273.4px,#d8a000 278.6px,#c8c800 283.2px,#90c800 296.2px,#40c000 309.2px,#10c010 322.2px,#10c018 336.2px,#10b040 340.1px,#0048d0 340.8px,#0038c8 348.9px,#0048d0 376.6px,#0060d8 392.6px,#0090e0 403.1px,#30e0d8 407.9px,#20d820 409.8px,#38d008 430.4px,#a0d800 446.7px,#d8e000 459.2px,#f0a000 467.3px,#f06000 469.8px,#e83000 470.4px,#000 470.9px)"></i>
<i style="left:919px;width:2px;background:linear-gradient(#000 274.8px,#d07000 274.8px,#d8a000 279.1px,#c8c800 283.6px,#90c800 296.7px,#40c000 309.7px,#10c010 322.7px,#10c018 334.3px,#10b040 338.2px,#0048d0 338.8px,#0038c8 349.4px,#0048d0 377.3px,#0060d8 393.3px,#0090e0 403.7px,#30e0d8 408.6px,#20d820 410.4px,#38d008 431.0px,#a0d800 447.3px,#d8e000 459.8px,#f0a000 467.9px,#f06000 470.4px,#e83000 471.0px,#000 469.2px)"></i>
<i style="left:921px;width:2px;background:linear-gradient(#000 275.0px,#d07000 275.0px,#d8a000 279.5px,#c8c800 284.1px,#90c800 297.1px,#40c000 310.2px,#10c010 323.2px,#10c018 334.6px,#10b040 338.5px,#0048d0 339.2px,#0038c8 350.0px,#0048d0 377.9px,#0060d8 393.9px,#0090e0 404.3px,#30e0d8 409.2px,#20d820 411.1px,#38d008 431.7px,#a0d800 447.9px,#d8e000 460.3px,#f0a000 468.5px,#f06000 470.9px,#e83000 471.6px,#000 472.5px)"></i>
<i style="left:923px;width:2px;background:linear-gradient(#000 275.1px,#d07000 275.1px,#d8a000 279.9px,#c8c800 284.5px,#90c800 297.6px,#40c000 310.7px,#10c010 323.8px,#10c018 334.4px,#10b040 338.3px,#0048d0 339.0px,#0038c8 350.6px,#0048d0 378.5px,#0060d8 394.5px,#0090e0 405.0px,#30e0d8 409.9px,#20d820 411.7px,#38d008 432.3px,#a0d800 448.5px,#d8e000 460.9px,#f0a000 469.0px,#f06000 471.5px,#e83000 472.1px,#000 470.8px)"></i>
<i style="left:925px;width:2px;background:linear-gradient(#000 274.0px,#d06e00 275.1px,#d89e00 280.4px,#c8c700 285.1px,#91c800 298.2px,#41c000 311.3px,#11c010 324.4px,#10c019 334.1px,#10af42 338.0px,#0048d0 338.7px,#0038c8 351.2px,#0048d0 379.1px,#0060d8 395.2px,#0090e0 405.6px,#30e0d8 410.5px,#20d820 412.4px,#38d008 432.9px,#a0d800 449.1px,#d8e000 461.5px,#f0a000 469.6px,#f06000 472.1px,#e83000 472.7px,#000 473.6px)"></i>
<i style="left:927px;width:2px;background:linear-gradient(#000 275.8px,#d16a00 275.8px,#d89b00 281.0px,#c9c500 285.9px,#93c800 298.9px,#44c000 311.9px,#12c010 325.0px,#11bf1a 337.7px,#10ae45 341.6px,#0048d0 342.3px,#0038c8 351.8px,#0048d0 379.7px,#0060d8 395.8px,#0090e0 406.3px,#30e0d8 411.2px,#20d820 413.0px,#38d008 433.5px,#a0d800 449.7px,#d8e000 462.1px,#f0a000 470.2px,#f06000 472.7px,#e83000 473.3px,#000 472.8px)"></i>
<i style="left:929px;width:2px;background:linear-gradient(#000 275.5px,#d16700 275.9px,#d99700 281.7px,#cac300 286.7px,#95c700 299.6px,#47c100 312.6px,#14c011 325.6px,#11bf1b 336.6px,#10ad49 340.6px,#0048d0 341.2px,#0038c8 352.4px,#0048d0 380.3px,#0060d8 396.4px,#0090e0 406.9px,#30e0d8 411.8px,#20d820 413.7px,#38d008 434.2px,#a0d800 450.3px,#d8e000 462.7px,#f0a000 470.8px,#f06000 473.2px,#e83000 473.9px,#000 472.2px)"></i>
<i style="left:931px;width:2px;background:linear-gradient(#000 277.5px,#d26300 277.5px,#d99400 282.3px,#cbc100 287.5px,#97c700 300.4px,#49c100 313.2px,#16c011 326.3px,#12be1d 340.1px,#10ac4c 344.1px,#0048d0 344.7px,#0038c8 352.9px,#0048d0 381.0px,#0060d8 397.1px,#0090e0 407.6px,#30e0d8 412.5px,#20d820 414.3px,#38d008 434.8px,#a0d800 450.9px,#d8e000 463.3px,#f0a000 471.3px,#f06000 473.8px,#e83000 474.4px,#000 475.6px)"></i>
<i style="left:933px;width:2px;background:linear-gradient(#000 277.9px,#d25f00 277.9px,#d99000 282.9px,#ccbe00 288.3px,#9ac700 301.1px,#4cc100 313.9px,#17c011 326.9px,#12be1e 335.6px,#10ab50 339.6px,#0048d0 340.3px,#0038c8 353.5px,#0048d0 381.6px,#0060d8 397.7px,#0090e0 408.2px,#30e0d8 413.1px,#20d820 415.0px,#38d008 435.4px,#a0d800 451.5px,#d8e000 463.9px,#f0a000 471.9px,#f06000 474.4px,#e83000 475.0px,#000 476.1px)"></i>
<i style="left:935px;width:2px;background:linear-gradient(#000 277.0px,#d35b00 277.1px,#d98d00 283.5px,#ccbc00 289.2px,#9cc700 301.8px,#4fc100 314.5px,#19c011 327.6px,#13bd1f 341.2px,#10aa53 345.2px,#0048d0 345.8px,#0038c8 354.1px,#0048d0 382.2px,#0060d8 398.3px,#0090e0 408.9px,#30e0d8 413.8px,#20d820 415.6px,#38d008 436.0px,#a0d800 452.1px,#d8e000 464.5px,#f0a000 472.5px,#f06000 475.0px,#e83000 475.6px,#000 476.8px)"></i>
<i style="left:937px;width:2px;background:linear-gradient(#000 276.8px,#d35800 277.5px,#da8900 284.2px,#cdba00 290.0px,#9ec600 302.6px,#51c200 315.2px,#1ac012 328.2px,#13bd21 337.0px,#10a957 341.0px,#0048d0 341.7px,#0038c8 354.7px,#0048d0 382.8px,#0060d8 399.0px,#0090e0 409.5px,#30e0d8 414.4px,#20d820 416.3px,#38d008 436.7px,#a0d800 452.7px,#d8e000 465.0px,#f0a000 473.1px,#f06000 475.5px,#e83000 476.1px,#000 476.8px)"></i>
<i style="left:939px;width:2px;background:linear-gradient(#000 277.3px,#d45400 277.9px,#da8600 284.8px,#ceb800 290.8px,#a0c600 303.3px,#54c200 315.8px,#1cc012 328.9px,#14bc22 342.0px,#10a85a 346.0px,#0048d0 346.7px,#0038c8 355.3px,#0048d0 383.4px,#0060d8 399.6px,#0090e0 410.2px,#30e0d8 415.1px,#20d820 417.0px,#38d008 437.3px,#a0d800 453.3px,#d8e000 465.6px,#f0a000 473.6px,#f06000 476.1px,#e83000 476.7px,#000 476.3px)"></i>
<i style="left:941px;width:2px;background:linear-gradient(#000 279.2px,#d55000 279.2px,#da8300 285.4px,#cfb600 291.6px,#a2c600 304.1px,#57c200 316.5px,#1ec012 329.5px,#15bb23 340.3px,#10a75d 344.4px,#0048d0 345.0px,#0038c8 355.9px,#0048d0 384.0px,#0060d8 400.3px,#0090e0 410.8px,#30e0d8 415.8px,#20d820 417.6px,#38d008 437.9px,#a0d800 453.9px,#d8e000 466.2px,#f0a000 474.2px,#f06000 476.7px,#e83000 477.3px,#000 477.0px)"></i>
<i style="left:943px;width:2px;background:linear-gradient(#000 279.7px,#d54d00 279.7px,#db7f00 286.0px,#d0b400 292.4px,#a4c500 304.8px,#59c300 317.1px,#1fc013 330.1px,#15bb25 342.6px,#10a661 346.6px,#0048d0 347.3px,#0038c8 356.4px,#0048d0 384.7px,#0060d8 400.9px,#0090e0 411.5px,#30e0d8 416.4px,#20d820 418.3px,#38d008 438.5px,#a0d800 454.5px,#d8e000 466.8px,#f0a000 474.8px,#f06000 477.3px,#e83000 477.9px,#000 478.2px)"></i>
<i style="left:945px;width:2px;background:linear-gradient(#000 278.7px,#d64900 279.2px,#db7c00 286.7px,#d0b200 293.3px,#a6c500 305.5px,#5cc300 317.8px,#21c013 330.8px,#16ba26 341.4px,#10a564 345.5px,#0048d0 346.1px,#0038c8 357.0px,#0048d0 385.3px,#0060d8 401.5px,#0090e0 412.1px,#30e0d8 417.1px,#20d820 418.9px,#38d008 439.2px,#a0d800 455.1px,#d8e000 467.4px,#f0a000 475.4px,#f06000 477.8px,#e83000 478.5px,#000 477.6px)"></i>
<i style="left:947px;width:2px;background:linear-gradient(#000 278.4px,#d64500 279.6px,#db7800 287.3px,#d1af00 294.1px,#a9c500 306.3px,#5fc300 318.5px,#22c013 331.4px,#16ba27 340.2px,#10a468 344.3px,#0048d0 345.0px,#0038c8 357.6px,#0048d0 385.9px,#0060d8 402.2px,#0090e0 412.8px,#30e0d8 417.7px,#20d820 419.6px,#38d008 439.8px,#a0d800 455.7px,#d8e000 468.0px,#f0a000 476.0px,#f06000 478.4px,#e83000 479.1px,#000 479.3px)"></i>
<i style="left:949px;width:2px;background:linear-gradient(#000 280.8px,#d74100 280.8px,#db7500 287.9px,#d2ad00 294.9px,#abc500 307.0px,#61c300 319.1px,#24c013 332.1px,#17b929 345.5px,#10a36b 349.6px,#0048d0 350.3px,#0038c8 358.2px,#0048d0 386.5px,#0060d8 402.8px,#0090e0 413.4px,#30e0d8 418.4px,#20d820 420.2px,#38d008 440.4px,#a0d800 456.4px,#d8e000 468.6px,#f0a000 476.6px,#f06000 479.0px,#e83000 479.7px,#000 478.6px)"></i>
<i style="left:951px;width:2px;background:linear-gradient(#000 280.3px,#d73e00 280.4px,#dc7100 288.6px,#d3ab00 295.7px,#adc400 307.8px,#64c400 319.8px,#26c014 332.7px,#17b92a 344.3px,#10a26f 348.3px,#0048d0 349.0px,#0038c8 358.8px,#0048d0 387.1px,#0060d8 403.4px,#0090e0 414.1px,#30e0d8 419.0px,#20d820 420.9px,#38d008 441.1px,#a0d800 457.0px,#d8e000 469.2px,#f0a000 477.2px,#f06000 479.6px,#e83000 480.3px,#000 481.9px)"></i>
<i style="left:953px;width:2px;background:linear-gradient(#000 280.5px,#d83a00 280.8px,#dc6e00 289.2px,#d4a900 296.6px,#afc400 308.5px,#67c400 320.4px,#27c014 333.4px,#18b82b 342.2px,#10a172 346.3px,#0048d0 347.0px,#0038c8 359.4px,#0048d0 387.7px,#0060d8 404.1px,#0090e0 414.7px,#30e0d8 419.7px,#20d820 421.5px,#38d008 441.7px,#a0d800 457.6px,#d8e000 469.9px,#f0a000 477.8px,#f06000 480.3px,#e83000 480.9px,#000 482.3px)"></i>
<i style="left:955px;width:2px;background:linear-gradient(#000 281.9px,#d83600 281.9px,#dc6a00 289.7px,#d4a700 297.3px,#b1c400 309.2px,#69c400 321.0px,#29c014 334.0px,#18b82d 345.0px,#109f76 349.1px,#0048d0 349.8px,#0038c8 359.9px,#0048d0 388.3px,#0060d8 404.7px,#0090e0 415.4px,#30e0d8 420.4px,#20d820 422.2px,#38d008 442.4px,#a0d800 458.3px,#d8e000 470.5px,#f0a000 478.4px,#f06000 480.9px,#e83000 481.5px,#000 481.3px)"></i>
<i style="left:957px;width:2px;background:linear-gradient(#000 281.7px,#d93200 281.7px,#dc6700 290.2px,#d5a500 298.0px,#b3c400 309.8px,#6cc400 321.6px,#2ac014 334.5px,#19b72e 343.2px,#109e79 347.3px,#0048d0 348.0px,#0038c8 360.4px,#0048d0 388.9px,#0060d8 405.4px,#0090e0 416.1px,#30e0d8 421.0px,#20d820 422.9px,#38d008 443.0px,#a0d800 458.9px,#d8e000 471.1px,#f0a000 479.1px,#f06000 481.5px,#e83000 482.1px,#000 480.4px)"></i>
<i style="left:959px;width:2px;background:linear-gradient(#000 281.6px,#d92f00 281.6px,#dd6300 290.7px,#d6a300 298.7px,#b5c300 310.4px,#6fc500 322.1px,#2cc015 335.0px,#19b72f 344.8px,#109d7d 348.9px,#0048d0 349.6px,#0038c8 360.9px,#0048d0 389.5px,#0060d8 406.0px,#0090e0 416.7px,#30e0d8 421.8px,#20d820 423.6px,#38d008 443.7px,#a0d800 459.6px,#d8e000 471.8px,#f0a000 479.7px,#f06000 482.1px,#e83000 482.7px,#000 483.6px)"></i>
<i style="left:961px;width:2px;background:linear-gradient(#000 281.2px,#da2b00 281.8px,#dd6000 291.1px,#d7a100 299.4px,#b7c300 311.0px,#71c500 322.6px,#2ec015 335.6px,#1ab631 346.4px,#109c80 350.5px,#0048d0 351.2px,#0038c8 361.4px,#0048d0 390.1px,#0060d8 406.7px,#0090e0 417.4px,#30e0d8 422.5px,#20d820 424.3px,#38d008 444.4px,#a0d800 460.2px,#d8e000 472.4px,#f0a000 480.3px,#f06000 482.8px,#e83000 483.4px,#000 481.7px)"></i>
<i style="left:963px;width:2px;background:linear-gradient(#000 280.9px,#da2700 282.1px,#dd5c00 291.6px,#d89e00 300.0px,#bac300 311.6px,#74c500 323.2px,#2fc015 336.1px,#1ab632 346.9px,#109b84 351.1px,#0048d0 351.8px,#0038c8 361.9px,#0048d0 390.7px,#0060d8 407.3px,#0090e0 418.1px,#30e0d8 423.1px,#20d820 425.0px,#38d008 445.1px,#a0d800 460.9px,#d8e000 473.1px,#f0a000 481.0px,#f06000 483.4px,#e83000 484.0px,#000 482.8px)"></i>
<i style="left:965px;width:2px;background:linear-gradient(#000 281.7px,#db2300 282.3px,#dd5900 292.1px,#d89c00 300.7px,#bcc300 312.2px,#77c500 323.7px,#31c015 336.6px,#1bb533 344.4px,#109a87 348.5px,#0048d0 349.2px,#0038c8 362.4px,#0048d0 391.3px,#0060d8 407.9px,#0090e0 418.8px,#30e0d8 423.9px,#20d820 425.7px,#38d008 445.7px,#a0d800 461.6px,#d8e000 473.7px,#f0a000 481.6px,#f06000 484.1px,#e83000 484.7px,#000 485.8px)"></i>
<i style="left:967px;width:2px;background:linear-gradient(#000 282.4px,#db2000 282.5px,#de5500 292.6px,#d99a00 301.4px,#bec200 312.8px,#79c600 324.2px,#32c016 337.1px,#1bb535 345.3px,#10998b 349.5px,#0048d0 350.2px,#0038c8 362.9px,#0048d0 391.9px,#0060d8 408.6px,#0090e0 419.5px,#30e0d8 424.5px,#20d820 426.4px,#38d008 446.4px,#a0d800 462.2px,#d8e000 474.4px,#f0a000 482.3px,#f06000 484.7px,#e83000 485.3px,#000 485.5px)"></i>
<i style="left:969px;width:2px;background:linear-gradient(#000 282.3px,#dc1c00 282.8px,#de5200 293.0px,#da9800 302.1px,#c0c200 313.4px,#7cc600 324.8px,#34c016 337.7px,#1cb436 347.4px,#10988e 351.6px,#0048d0 352.2px,#0038c8 363.4px,#0048d0 392.5px,#0060d8 409.2px,#0090e0 420.2px,#30e0d8 425.2px,#20d820 427.1px,#38d008 447.1px,#a0d800 462.9px,#d8e000 475.1px,#f0a000 483.0px,#f06000 485.4px,#e83000 486.0px,#000 485.3px)"></i>
<i style="left:971px;width:2px;background:linear-gradient(#000 283.1px,#dd1800 283.1px,#de4f00 293.5px,#db9600 302.8px,#c2c200 314.1px,#7fc600 325.3px,#36c016 338.2px,#1db337 348.2px,#109791 352.4px,#0048d0 353.1px,#0038c8 363.9px,#0048d0 393.1px,#0060d8 409.9px,#0090e0 420.8px,#30e0d8 426.0px,#20d820 427.8px,#38d008 447.8px,#a0d800 463.6px,#d8e000 475.7px,#f0a000 483.6px,#f06000 486.1px,#e83000 486.7px,#000 487.6px)"></i>
<i style="left:973px;width:2px;background:linear-gradient(#000 282.5px,#dd1500 283.2px,#df4b00 294.0px,#dc9400 303.5px,#c4c100 314.7px,#81c700 325.8px,#37c017 338.7px,#1db339 350.7px,#109695 354.9px,#0048d0 355.6px,#0038c8 364.4px,#0048d0 393.7px,#0060d8 410.5px,#0090e0 421.5px,#30e0d8 426.6px,#20d820 428.5px,#38d008 448.5px,#a0d800 464.3px,#d8e000 476.4px,#f0a000 484.3px,#f06000 486.7px,#e83000 487.3px,#000 487.1px)"></i>
<i style="left:975px;width:2px;background:linear-gradient(#000 283.8px,#de1100 283.8px,#df4800 294.5px,#dc9200 304.2px,#c6c100 315.3px,#84c700 326.4px,#39c017 339.3px,#1eb23a 349.4px,#109598 353.7px,#0048d0 354.4px,#0038c8 364.9px,#0048d0 394.3px,#0060d8 411.2px,#0090e0 422.2px,#30e0d8 427.4px,#20d820 429.2px,#38d008 449.2px,#a0d800 465.0px,#d8e000 477.1px,#f0a000 485.0px,#f06000 487.4px,#e83000 488.0px,#000 489.7px)"></i>
<i style="left:977px;width:2px;background:linear-gradient(#000 283.1px,#de0d00 283.7px,#df4400 295.0px,#dd8f00 304.9px,#c9c100 315.9px,#87c700 326.9px,#3ac017 339.8px,#1eb23b 351.3px,#10949c 355.5px,#0048d0 356.2px,#0038c8 365.4px,#0048d0 394.9px,#0060d8 411.8px,#0090e0 422.9px,#30e0d8 428.0px,#20d820 429.9px,#38d008 449.9px,#a0d800 465.6px,#d8e000 477.8px,#f0a000 485.6px,#f06000 488.1px,#e83000 488.7px,#000 488.3px)"></i>
<i style="left:979px;width:2px;background:linear-gradient(#000 284.1px,#df0900 284.1px,#df4100 295.4px,#de8d00 305.6px,#cbc100 316.5px,#89c700 327.5px,#3cc017 340.4px,#1fb13d 349.1px,#10939f 353.3px,#0048d0 354.1px,#0038c8 365.9px,#0048d0 395.5px,#0060d8 412.5px,#0090e0 423.6px,#30e0d8 428.8px,#20d820 430.6px,#38d008 450.6px,#a0d800 466.3px,#d8e000 478.4px,#f0a000 486.3px,#f06000 488.7px,#e83000 489.3px,#000 488.0px)"></i>
<i style="left:981px;width:2px;background:linear-gradient(#000 284.4px,#df0600 284.4px,#e03d00 295.9px,#df8b00 306.3px,#cdc000 317.2px,#8cc800 328.0px,#3ec018 340.9px,#1fb13e 348.4px,#1092a3 352.7px,#0048d0 353.4px,#0038c8 366.4px,#0048d0 396.1px,#0060d8 413.1px,#0090e0 424.3px,#30e0d8 429.5px,#20d820 431.3px,#38d008 451.2px,#a0d800 467.0px,#d8e000 479.1px,#f0a000 487.0px,#f06000 489.4px,#e83000 490.0px,#000 491.7px)"></i>
<i style="left:983px;width:2px;background:linear-gradient(#000 283.8px,#e00200 284.4px,#e03a00 296.4px,#e08900 307.0px,#cfc000 317.8px,#8fc800 328.6px,#3fc018 341.4px,#20b03f 349.4px,#1091a6 353.7px,#0048d0 354.4px,#0038c8 366.9px,#0048d0 396.7px,#0060d8 413.8px,#0090e0 424.9px,#30e0d8 430.1px,#20d820 432.0px,#38d008 451.9px,#a0d800 467.7px,#d8e000 479.8px,#f0a000 487.6px,#f06000 490.1px,#e83000 490.7px,#000 490.6px)"></i>
<i style="left:985px;width:2px;background:linear-gradient(#000 283.7px,#e00000 284.6px,#e03800 296.8px,#e08800 307.5px,#d0c000 318.3px,#90c800 329.0px,#40c018 341.9px,#20b040 348.4px,#1090a8 352.7px,#0048d0 353.4px,#0038c8 367.4px,#0048d0 397.3px,#0060d8 414.4px,#0090e0 425.6px,#30e0d8 430.9px,#20d820 432.7px,#38d008 452.6px,#a0d800 468.3px,#d8e000 480.4px,#f0a000 488.3px,#f06000 490.7px,#e83000 491.3px,#000 491.4px)"></i>
<i style="left:987px;width:2px;background:linear-gradient(#000 286.0px,#e00000 286.0px,#e03800 297.1px,#e08800 307.8px,#d0c000 318.6px,#90c800 329.4px,#40c018 342.3px,#20b040 350.9px,#1090a8 355.2px,#0048d0 355.9px,#0038c8 367.9px,#0048d0 397.9px,#0060d8 415.1px,#0090e0 426.3px,#30e0d8 431.5px,#20d820 433.4px,#38d008 453.3px,#a0d800 469.0px,#d8e000 481.1px,#f0a000 489.0px,#f06000 491.4px,#e83000 492.0px,#000 492.2px)"></i>
<i style="left:989px;width:2px;background:linear-gradient(#000 284.4px,#e00000 285.1px,#e03800 297.3px,#e08800 308.1px,#d0c000 319.0px,#90c800 329.8px,#40c018 342.8px,#20b040 352.9px,#1090a8 357.3px,#0048d0 358.0px,#0038c8 368.4px,#0048d0 398.5px,#0060d8 415.7px,#0090e0 427.0px,#30e0d8 432.2px,#20d820 434.1px,#38d008 454.0px,#a0d800 469.7px,#d8e000 481.8px,#f0a000 489.6px,#f06000 492.1px,#e83000 492.7px,#000 492.0px)"></i>
<i style="left:991px;width:2px;background:linear-gradient(#000 285.6px,#e00000 285.6px,#e03800 297.6px,#e08800 308.5px,#d0c000 319.3px,#90c800 330.2px,#40c018 343.2px,#20b040 354.6px,#1090a8 359.0px,#0048d0 359.7px,#0038c8 368.9px,#0048d0 399.1px,#0060d8 416.4px,#0090e0 427.7px,#30e0d8 433.0px,#20d820 434.8px,#38d008 454.7px,#a0d800 470.4px,#d8e000 482.5px,#f0a000 490.3px,#f06000 492.7px,#e83000 493.3px,#000 494.6px)"></i>
<i style="left:993px;width:2px;background:linear-gradient(#000 285.4px,#e00000 285.6px,#e03800 297.9px,#e08800 308.8px,#d0c000 319.6px,#90c800 330.5px,#40c018 343.6px,#20b040 351.4px,#1090a8 355.8px,#0048d0 356.5px,#0038c8 369.4px,#0048d0 399.7px,#0060d8 417.0px,#0090e0 428.4px,#30e0d8 433.6px,#20d820 435.5px,#38d008 455.4px,#a0d800 471.1px,#d8e000 483.1px,#f0a000 491.0px,#f06000 493.4px,#e83000 494.0px,#000 494.0px)"></i>
<i style="left:995px;width:2px;background:linear-gradient(#000 286.5px,#e00000 286.5px,#e03800 298.2px,#e08800 309.1px,#d0c000 320.0px,#90c800 330.9px,#40c018 344.0px,#20b040 354.7px,#1090a8 359.1px,#0048d0 359.8px,#0038c8 369.9px,#0048d0 400.2px,#0060d8 417.7px,#0090e0 429.0px,#30e0d8 434.4px,#20d820 436.2px,#38d008 456.1px,#a0d800 471.7px,#d8e000 483.8px,#f0a000 491.7px,#f06000 494.1px,#e83000 494.7px,#000 493.2px)"></i>
<i style="left:997px;width:2px;background:linear-gradient(#000 287.1px,#e00000 287.1px,#e03800 298.4px,#e08800 309.4px,#d0c000 320.3px,#90c800 331.3px,#40c018 344.4px,#20b040 355.4px,#1090a8 359.7px,#0048d0 360.5px,#0038c8 370.4px,#0048d0 400.8px,#0060d8 418.3px,#0090e0 429.7px,#30e0d8 435.0px,#20d820 436.9px,#38d008 456.8px,#a0d800 472.4px,#d8e000 484.5px,#f0a000 492.3px,#f06000 494.7px,#e83000 495.3px,#000 495.2px)"></i>
<i style="left:999px;width:2px;background:linear-gradient(#000 285.8px,#e00000 286.2px,#e03800 298.7px,#e08800 309.7px,#d0c000 320.7px,#90c800 331.7px,#40c018 344.9px,#20b040 355.4px,#1090a8 359.8px,#0048d0 360.6px,#0038c8 370.9px,#0048d0 401.4px,#0060d8 419.0px,#0090e0 430.4px,#30e0d8 435.8px,#20d820 437.6px,#38d008 457.4px,#a0d800 473.1px,#d8e000 485.2px,#f0a000 493.0px,#f06000 495.4px,#e83000 496.0px,#000 497.0px)"></i>
<i style="left:1001px;width:2px;background:linear-gradient(#000 285.9px,#e00000 286.5px,#e03800 299.0px,#e08800 310.0px,#d0c000 321.0px,#90c800 332.0px,#40c018 345.3px,#20b040 357.3px,#1090a8 361.7px,#0048d0 362.4px,#0038c8 371.4px,#0048d0 402.0px,#0060d8 419.6px,#0090e0 431.1px,#30e0d8 436.5px,#20d820 438.3px,#38d008 458.1px,#a0d800 473.8px,#d8e000 485.8px,#f0a000 493.7px,#f06000 496.1px,#e83000 496.7px,#000 495.4px)"></i>
<i style="left:1003px;width:2px;background:linear-gradient(#000 286.1px,#e00000 286.7px,#e03800 299.2px,#e08800 310.3px,#d0c000 321.4px,#90c800 332.4px,#40c018 345.7px,#20b040 355.7px,#1090a8 360.1px,#0048d0 360.8px,#0038c8 371.9px,#0048d0 402.6px,#0060d8 420.3px,#0090e0 431.8px,#30e0d8 437.1px,#20d820 439.0px,#38d008 458.8px,#a0d800 474.5px,#d8e000 486.5px,#f0a000 494.3px,#f06000 496.7px,#e83000 497.3px,#000 498.0px)"></i>
<i style="left:1005px;width:2px;background:linear-gradient(#000 286.0px,#e00000 286.9px,#e03800 299.5px,#e08800 310.6px,#d0c000 321.7px,#90c800 332.8px,#40c018 346.1px,#20b040 355.4px,#1090a8 359.9px,#0048d0 360.6px,#0038c8 372.4px,#0048d0 403.2px,#0060d8 420.9px,#0090e0 432.5px,#30e0d8 437.9px,#20d820 439.7px,#38d008 459.5px,#a0d800 475.1px,#d8e000 487.2px,#f0a000 495.0px,#f06000 497.4px,#e83000 498.0px,#000 497.8px)"></i>
<i style="left:1007px;width:2px;background:linear-gradient(#000 286.5px,#e00000 287.2px,#e03800 299.8px,#e08800 310.9px,#d0c000 322.0px,#90c800 333.2px,#40c018 346.5px,#20b040 356.3px,#1090a8 360.8px,#0048d0 361.5px,#0038c8 372.9px,#0048d0 403.8px,#0060d8 421.6px,#0090e0 433.1px,#30e0d8 438.5px,#20d820 440.4px,#38d008 460.2px,#a0d800 475.8px,#d8e000 487.8px,#f0a000 495.6px,#f06000 498.0px,#e83000 498.6px,#000 498.8px)"></i>
<i style="left:1009px;width:2px;background:linear-gradient(#000 286.5px,#e00000 287.4px,#e03800 300.1px,#e08800 311.2px,#d0c000 322.4px,#90c800 333.6px,#40c018 346.9px,#20b040 354.4px,#1090a8 358.9px,#0048d0 359.6px,#0038c8 373.4px,#0048d0 404.4px,#0060d8 422.2px,#0090e0 433.8px,#30e0d8 439.2px,#20d820 441.1px,#38d008 460.9px,#a0d800 476.5px,#d8e000 488.5px,#f0a000 496.3px,#f06000 498.7px,#e83000 499.3px,#000 500.3px)"></i>
<i style="left:1011px;width:2px;background:linear-gradient(#000 288.7px,#e00000 288.7px,#e03800 300.3px,#e08800 311.5px,#d0c000 322.7px,#90c800 333.9px,#40c018 347.4px,#20b040 355.0px,#1090a8 359.4px,#0048d0 360.2px,#0038c8 373.9px,#0048d0 405.0px,#0060d8 422.9px,#0090e0 434.5px,#30e0d8 440.0px,#20d820 441.8px,#38d008 461.6px,#a0d800 477.2px,#d8e000 489.2px,#f0a000 497.0px,#f06000 499.4px,#e83000 500.0px,#000 499.3px)"></i>
<i style="left:1013px;width:2px;background:linear-gradient(#000 287.5px,#e00000 287.9px,#e03800 300.6px,#e08800 311.8px,#d0c000 323.1px,#90c800 334.3px,#40c018 347.8px,#20b040 357.5px,#1090a8 362.0px,#0048d0 362.7px,#0038c8 374.4px,#0048d0 405.6px,#0060d8 423.5px,#0090e0 435.2px,#30e0d8 440.6px,#20d820 442.4px,#38d008 462.2px,#a0d800 477.8px,#d8e000 489.8px,#f0a000 497.6px,#f06000 500.0px,#e83000 500.6px,#000 501.0px)"></i>
<i style="left:1015px;width:2px;background:linear-gradient(#000 288.9px,#e00000 288.9px,#e03800 301.1px,#e08800 312.3px,#d0c000 323.6px,#90c800 334.8px,#40c018 348.3px,#20b040 357.5px,#1090a8 362.0px,#0048d0 362.8px,#0038c8 375.0px,#0048d0 406.2px,#0060d8 424.1px,#0090e0 435.8px,#30e0d8 441.3px,#20d820 443.1px,#38d008 462.9px,#a0d800 478.5px,#d8e000 490.5px,#f0a000 498.2px,#f06000 500.6px,#e83000 501.2px,#000 499.7px)"></i>
<i style="left:1017px;width:2px;background:linear-gradient(#000 289.5px,#e00000 289.5px,#e03800 301.8px,#e08800 313.0px,#d0c000 324.2px,#90c800 335.4px,#40c018 348.8px,#20b040 357.2px,#1090a8 361.7px,#0048d0 362.4px,#0038c8 375.5px,#0048d0 406.8px,#0060d8 424.7px,#0090e0 436.5px,#30e0d8 441.9px,#20d820 443.7px,#38d008 463.5px,#a0d800 479.1px,#d8e000 491.1px,#f0a000 498.9px,#f06000 501.3px,#e83000 501.9px,#000 503.1px)"></i>
<i style="left:1019px;width:2px;background:linear-gradient(#000 290.6px,#e00000 290.6px,#e03800 302.5px,#e08800 313.7px,#d0c000 324.8px,#90c800 336.0px,#40c018 349.4px,#20b040 358.5px,#1090a8 363.0px,#0048d0 363.7px,#0038c8 376.0px,#0048d0 407.3px,#0060d8 425.3px,#0090e0 437.1px,#30e0d8 442.6px,#20d820 444.4px,#38d008 464.2px,#a0d800 479.8px,#d8e000 491.7px,#f0a000 499.5px,#f06000 501.9px,#e83000 502.5px,#000 502.3px)"></i>
<i style="left:1021px;width:2px;background:linear-gradient(#000 291.4px,#e00000 291.4px,#e03800 303.2px,#e08800 314.3px,#d0c000 325.5px,#90c800 336.6px,#40c018 349.9px,#20b040 360.0px,#1090a8 364.5px,#0048d0 365.2px,#0038c8 376.5px,#0048d0 407.9px,#0060d8 425.9px,#0090e0 437.7px,#30e0d8 443.2px,#20d820 445.0px,#38d008 464.8px,#a0d800 480.4px,#d8e000 492.4px,#f0a000 500.2px,#f06000 502.6px,#e83000 503.2px,#000 503.4px)"></i>
<i style="left:1023px;width:2px;background:linear-gradient(#000 290.6px,#e00000 291.4px,#e03800 303.9px,#e08800 315.0px,#d0c000 326.1px,#90c800 337.2px,#40c018 350.5px,#20b040 360.1px,#1090a8 364.6px,#0048d0 365.3px,#0038c8 377.0px,#0048d0 408.5px,#0060d8 426.5px,#0090e0 438.3px,#30e0d8 443.8px,#20d820 445.6px,#38d008 465.4px,#a0d800 481.0px,#d8e000 493.1px,#f0a000 500.9px,#f06000 503.3px,#e83000 503.9px,#000 503.0px)"></i>
<i style="left:1025px;width:2px;background:linear-gradient(#000 292.3px,#e00000 292.3px,#e03800 304.6px,#e08800 315.7px,#d0c000 326.7px,#90c800 337.8px,#40c018 351.0px,#20b040 360.3px,#1090a8 364.7px,#0048d0 365.4px,#0038c8 377.6px,#0048d0 409.0px,#0060d8 427.1px,#0090e0 438.9px,#30e0d8 444.4px,#20d820 446.2px,#38d008 466.1px,#a0d800 481.7px,#d8e000 493.7px,#f0a000 501.5px,#f06000 503.9px,#e83000 504.5px,#000 504.6px)"></i>
<i style="left:1027px;width:2px;background:linear-gradient(#000 293.6px,#df0400 293.6px,#e03c00 305.1px,#df8a00 315.9px,#cec000 327.0px,#8dc800 338.2px,#3ec018 351.4px,#1fb13e 361.8px,#1091a4 366.2px,#0048d0 367.0px,#0038c8 378.1px,#0048d0 409.6px,#0060d8 427.7px,#0090e0 439.5px,#30e0d8 445.1px,#20d820 446.9px,#38d008 466.7px,#a0d800 482.4px,#d8e000 494.4px,#f0a000 502.2px,#f06000 504.6px,#e83000 505.2px,#000 505.8px)"></i>
<i style="left:1029px;width:2px;background:linear-gradient(#000 292.9px,#de0d00 293.6px,#df4400 305.3px,#dd8f00 315.6px,#c9c100 327.0px,#87c700 338.4px,#3ac017 351.7px,#1eb23b 360.5px,#10949c 364.9px,#0048d0 365.6px,#0038c8 378.6px,#0048d0 410.2px,#0060d8 428.3px,#0090e0 440.2px,#30e0d8 445.7px,#20d820 447.5px,#38d008 467.4px,#a0d800 483.0px,#d8e000 495.1px,#f0a000 502.9px,#f06000 505.3px,#e83000 505.9px,#000 505.3px)"></i>
<i style="left:1031px;width:2px;background:linear-gradient(#000 296.4px,#dd1600 296.4px,#de4c00 306.6px,#db9400 316.3px,#c4c200 327.7px,#81c600 339.2px,#37c016 352.3px,#1db338 363.2px,#109694 367.5px,#0048d0 368.3px,#0038c8 379.3px,#0048d0 410.9px,#0060d8 429.1px,#0090e0 441.0px,#30e0d8 446.6px,#20d820 448.4px,#38d008 468.2px,#a0d800 483.8px,#d8e000 495.8px,#f0a000 503.6px,#f06000 506.0px,#e83000 506.6px,#000 506.2px)"></i>
<i style="left:1033px;width:2px;background:linear-gradient(#000 298.4px,#dc1e00 299.1px,#de5400 309.1px,#da9900 318.0px,#bfc200 329.3px,#7ac600 340.6px,#33c016 353.4px,#1cb435 363.7px,#10998c 367.8px,#0048d0 368.5px,#0038c8 380.1px,#0048d0 411.9px,#0060d8 430.2px,#0090e0 442.1px,#30e0d8 447.7px,#20d820 449.5px,#38d008 469.1px,#a0d800 484.6px,#d8e000 496.6px,#f0a000 504.3px,#f06000 506.7px,#e83000 507.3px,#000 508.7px)"></i>
<i style="left:1035px;width:2px;background:linear-gradient(#000 302.3px,#da2700 302.4px,#dd5c00 311.7px,#d89e00 319.8px,#bac300 330.9px,#74c500 342.0px,#2fc015 354.4px,#1ab632 364.1px,#109b84 368.1px,#0048d0 368.7px,#0038c8 380.9px,#0048d0 412.8px,#0060d8 431.2px,#0090e0 443.2px,#30e0d8 448.8px,#20d820 450.6px,#38d008 470.1px,#a0d800 485.5px,#d8e000 497.3px,#f0a000 505.0px,#f06000 507.4px,#e83000 508.0px,#000 507.2px)"></i>
<i style="left:1037px;width:2px;background:linear-gradient(#000 305.8px,#d92f00 305.8px,#dd6400 314.2px,#d6a300 321.6px,#b5c300 332.6px,#6ec500 343.5px,#2cc015 355.5px,#19b72f 365.5px,#109e7c 369.3px,#0048d0 370.0px,#0038c8 381.7px,#0048d0 413.8px,#0060d8 432.3px,#0090e0 444.3px,#30e0d8 449.9px,#20d820 451.7px,#38d008 471.1px,#a0d800 486.4px,#d8e000 498.1px,#f0a000 505.8px,#f06000 508.1px,#e83000 508.7px,#000 507.9px)"></i>
<i style="left:1039px;width:2px;background:linear-gradient(#000 308.6px,#d83800 309.2px,#dc6c00 316.8px,#d4a800 323.6px,#b0c400 334.3px,#68c400 345.0px,#28c014 356.6px,#18b82c 366.8px,#10a074 370.4px,#0048d0 371.0px,#0038c8 382.5px,#0048d0 414.8px,#0060d8 433.3px,#0090e0 445.4px,#30e0d8 451.1px,#20d820 452.8px,#38d008 472.1px,#a0d800 487.3px,#d8e000 498.9px,#f0a000 506.5px,#f06000 508.9px,#e83000 509.5px,#000 510.0px)"></i>
<i style="left:1041px;width:2px;background:linear-gradient(#000 313.3px,#d74100 313.3px,#db7400 319.5px,#d2ad00 325.6px,#abc500 336.0px,#62c300 346.5px,#24c013 357.7px,#17b929 367.2px,#10a26c 370.7px,#0048d0 371.3px,#0038c8 383.3px,#0048d0 415.7px,#0060d8 434.4px,#0090e0 446.5px,#30e0d8 452.2px,#20d820 453.9px,#38d008 473.1px,#a0d800 488.2px,#d8e000 499.8px,#f0a000 507.3px,#f06000 509.6px,#e83000 510.2px,#000 509.8px)"></i>
<i style="left:1043px;width:2px;background:linear-gradient(#000 315.1px,#d64900 315.9px,#db7c00 322.2px,#d0b200 327.6px,#a6c500 337.8px,#5cc300 348.1px,#21c013 358.9px,#16ba26 368.1px,#10a564 371.5px,#0048d0 372.1px,#0038c8 384.1px,#0048d0 416.7px,#0060d8 435.4px,#0090e0 447.6px,#30e0d8 453.3px,#20d820 455.0px,#38d008 474.1px,#a0d800 489.1px,#d8e000 500.6px,#f0a000 508.1px,#f06000 510.4px,#e83000 511.0px,#000 510.8px)"></i>
<i style="left:1045px;width:2px;background:linear-gradient(#000 319.1px,#d45200 319.3px,#da8400 324.9px,#ceb700 329.7px,#a1c600 339.7px,#56c200 349.6px,#1dc012 360.0px,#14bc23 369.1px,#10a75c 372.3px,#0048d0 372.8px,#0038c8 384.9px,#0048d0 417.6px,#0060d8 436.4px,#0090e0 448.7px,#30e0d8 454.4px,#20d820 456.2px,#38d008 475.1px,#a0d800 490.0px,#d8e000 501.4px,#f0a000 508.9px,#f06000 511.2px,#e83000 511.8px,#000 511.4px)"></i>
<i style="left:1047px;width:2px;background:linear-gradient(#000 322.0px,#d35a00 322.6px,#da8c00 327.5px,#cdbc00 331.8px,#9cc600 341.5px,#4fc200 351.1px,#19c012 361.1px,#13bd20 370.0px,#10aa54 373.0px,#0048d0 373.5px,#0038c8 385.6px,#0048d0 418.5px,#0060d8 437.4px,#0090e0 449.7px,#30e0d8 455.5px,#20d820 457.2px,#38d008 476.0px,#a0d800 490.9px,#d8e000 502.3px,#f0a000 509.7px,#f06000 512.0px,#e83000 512.6px,#000 513.4px)"></i>
<i style="left:1049px;width:2px;background:linear-gradient(#000 325.0px,#d26300 325.8px,#d99400 330.1px,#cbc100 333.9px,#97c700 343.2px,#49c100 352.5px,#16c011 362.0px,#12be1d 370.6px,#10ac4c 373.5px,#0048d0 373.9px,#0038c8 386.2px,#0048d0 419.3px,#0060d8 438.3px,#0090e0 450.7px,#30e0d8 456.5px,#20d820 458.2px,#38d008 477.0px,#a0d800 491.7px,#d8e000 503.1px,#f0a000 510.5px,#f06000 512.8px,#e83000 513.4px,#000 511.6px)"></i>
<i style="left:1051px;width:2px;background:linear-gradient(#000 329.4px,#d16c00 329.4px,#d89c00 332.7px,#c9c600 336.0px,#92c800 345.0px,#43c000 354.0px,#12c010 363.0px,#11bf1a 371.0px,#10af44 373.7px,#0048d0 374.2px,#0038c8 386.7px,#0048d0 420.0px,#0060d8 439.2px,#0090e0 451.7px,#30e0d8 457.5px,#20d820 459.2px,#38d008 477.9px,#a0d800 492.6px,#d8e000 504.0px,#f0a000 511.3px,#f06000 513.6px,#e83000 514.2px,#000 515.0px)"></i>
<i style="left:1053px;width:2px;background:linear-gradient(#000 331.5px,#d07000 332.1px,#d8a000 335.5px,#c8c800 338.5px,#90c800 347.0px,#40c000 355.6px,#10c010 364.1px,#10c018 371.7px,#10b040 374.3px,#0048d0 374.7px,#0038c8 387.3px,#0048d0 420.8px,#0060d8 440.1px,#0090e0 452.6px,#30e0d8 458.5px,#20d820 460.2px,#38d008 478.8px,#a0d800 493.5px,#d8e000 504.8px,#f0a000 512.1px,#f06000 514.4px,#e83000 515.0px,#000 513.7px)"></i>
<i style="left:1055px;width:2px;background:linear-gradient(#000 335.4px,#d07000 335.4px,#d8a000 338.4px,#c8c800 341.2px,#90c800 349.2px,#40c000 357.2px,#10c010 365.2px,#10c018 372.4px,#10b040 374.9px,#0048d0 375.2px,#0038c8 387.9px,#0048d0 421.6px,#0060d8 441.0px,#0090e0 453.6px,#30e0d8 459.5px,#20d820 461.2px,#38d008 479.8px,#a0d800 494.4px,#d8e000 505.6px,#f0a000 513.0px,#f06000 515.2px,#e83000 515.8px,#000 517.3px)"></i>
<i style="left:1057px;width:2px;background:linear-gradient(#000 337.8px,#d07000 338.4px,#d8a000 341.4px,#c8c800 344.0px,#90c800 351.5px,#40c000 358.9px,#10c010 366.4px,#10c018 373.1px,#10b040 375.4px,#0048d0 375.8px,#0038c8 388.5px,#0048d0 422.4px,#0060d8 441.9px,#0090e0 454.6px,#30e0d8 460.5px,#20d820 462.2px,#38d008 480.7px,#a0d800 495.3px,#d8e000 506.5px,#f0a000 513.8px,#f06000 516.0px,#e83000 516.6px,#000 516.7px)"></i>
<i style="left:1059px;width:2px;background:linear-gradient(#000 340.2px,#d07000 340.8px,#d8a000 343.6px,#c8c800 346.1px,#90c800 353.3px,#40c000 360.4px,#10c010 367.6px,#10c018 374.0px,#10b040 376.1px,#0048d0 376.5px,#0038c8 389.3px,#0048d0 423.3px,#0060d8 442.9px,#0090e0 455.6px,#30e0d8 461.6px,#20d820 463.3px,#38d008 481.6px,#a0d800 496.1px,#d8e000 507.3px,#f0a000 514.5px,#f06000 516.8px,#e83000 517.3px,#000 518.3px)"></i>
<i style="left:1061px;width:2px;background:linear-gradient(#000 342.2px,#d07000 342.2px,#d8a000 345.1px,#c8c800 347.5px,#90c800 354.6px,#40c000 361.6px,#10c010 368.7px,#10c018 375.0px,#10b040 377.1px,#0048d0 377.5px,#0038c8 390.3px,#0048d0 424.4px,#0060d8 444.0px,#0090e0 456.8px,#30e0d8 462.8px,#20d820 464.4px,#38d008 482.6px,#a0d800 497.0px,#d8e000 508.1px,#f0a000 515.2px,#f06000 517.4px,#e83000 518.0px,#000 517.8px)"></i>
<i style="left:1063px;width:2px;background:linear-gradient(#000 344.1px,#d07000 344.1px,#d8a000 346.5px,#c8c800 349.0px,#90c800 355.9px,#40c000 362.9px,#10c010 369.8px,#10c018 376.1px,#10b040 378.2px,#0048d0 378.5px,#0038c8 391.3px,#0048d0 425.5px,#0060d8 445.1px,#0090e0 457.9px,#30e0d8 463.9px,#20d820 465.6px,#38d008 483.6px,#a0d800 497.8px,#d8e000 508.8px,#f0a000 515.9px,#f06000 518.1px,#e83000 518.6px,#000 519.2px)"></i>
<i style="left:1065px;width:2px;background:linear-gradient(#000 344.5px,#d07000 345.2px,#d8a000 348.0px,#c8c800 350.4px,#90c800 357.2px,#40c000 364.1px,#10c010 370.9px,#10c018 377.1px,#10b040 379.2px,#0048d0 379.5px,#0038c8 392.3px,#0048d0 426.6px,#0060d8 446.3px,#0090e0 459.1px,#30e0d8 465.1px,#20d820 466.7px,#38d008 484.6px,#a0d800 498.6px,#d8e000 509.5px,#f0a000 516.5px,#f06000 518.7px,#e83000 519.2px,#000 519.6px)"></i>
<i style="left:1067px;width:2px;background:linear-gradient(#000 347.8px,#d07000 347.8px,#d8a000 349.4px,#c8c800 351.8px,#90c800 358.6px,#40c000 365.3px,#10c010 372.1px,#10c018 378.1px,#10b040 380.2px,#0048d0 380.5px,#0038c8 393.4px,#0048d0 427.7px,#0060d8 447.4px,#0090e0 460.2px,#30e0d8 466.2px,#20d820 467.9px,#38d008 485.5px,#a0d800 499.4px,#d8e000 510.1px,#f0a000 517.1px,#f06000 519.2px,#e83000 519.8px,#000 521.8px)"></i>
<i style="left:1069px;width:2px;background:linear-gradient(#000 348.3px,#d07000 348.3px,#d8a000 350.9px,#c8c800 353.2px,#90c800 359.9px,#40c000 366.5px,#10c010 373.2px,#10c018 379.2px,#10b040 381.2px,#0048d0 381.5px,#0038c8 394.4px,#0048d0 428.8px,#0060d8 448.5px,#0090e0 461.4px,#30e0d8 467.4px,#20d820 469.0px,#38d008 486.4px,#a0d800 500.2px,#d8e000 510.7px,#f0a000 517.6px,#f06000 519.7px,#e83000 520.2px,#000 522.2px)"></i><svg style="left:0;top:0" width="1071" height="547" viewBox="285 129 1071 547">
<defs>
<filter id="b2" x="-50%" y="-50%" width="200%" height="200%"><feGaussianBlur stdDeviation="2.5"/></filter>
<filter id="b4" x="-50%" y="-50%" width="200%" height="200%"><feGaussianBlur stdDeviation="4"/></filter>
<filter id="b1" x="-50%" y="-50%" width="200%" height="200%"><feGaussianBlur stdDeviation="1"/></filter>
</defs>
<path d="M978 395L990 388L1008 387L1025 392L1040 400L1044 414L1036 420L1012 416L992 410L978 404Z" fill="#18d0d0" filter="url(#b2)"/>
<path d="M500 258L525 257L555 266L560 275L540 276L510 270Z" fill="#0020c8" filter="url(#b4)"/>
<path d="M778 392L800 386L822 392L840 402L850 412L846 420L832 412L812 405L790 402Z" fill="#40b8e8" opacity="0.7" filter="url(#b2)"/>
<g fill="#000">
<path d="M447 232L452 231L462 235L460 238L452 236Z"/>
<path d="M1286 447L1290 446L1292 450L1288 452L1286 450Z"/>
<path d="M1286 491L1291 492L1298 497L1297 500L1292 498L1288 500L1284 499L1281 501L1278 500L1280 497L1283 495Z"/>
<path d="M1275 494L1277 494L1277 498L1275 498Z"/>
<path d="M1310.3 535.4L1317.9 538.8L1324.7 542.2L1335 547.3L1345.2 551.6L1356 555V567.5L1348.6 563.5L1338.4 558.4L1328.1 553.3L1317.9 550.7L1310 549Z"/>
<path d="M1323 582.2L1328.1 578L1335 576.3L1338.4 580.5L1345.2 585.6L1352 592.4L1356 598L1352 597.5L1345.2 590.7L1336.7 586.5L1328.1 584.8Z"/>
<path d="M1267 535L1269 535L1269 537L1267 537ZM1272 536L1274 536L1274 538L1272 538Z"/>
</g>
</svg>
</div>
<div id="cbar" class="a"></div>
<div id="rb" class="a"></div>
<div id="labels" class="a" style="left:1290px;top:129px;width:66px;height:547px">
<span style="top:9.0px">-5.97</span>
<span style="top:29.9px">-5.74</span>
<span style="top:50.8px">-5.52</span>
<span style="top:71.7px">-5.29</span>
<span style="top:92.6px">-5.06</span>
<span style="top:113.5px">-4.84</span>
<span style="top:134.4px">-4.61</span>
<span style="top:155.3px">-4.38</span>
<span style="top:176.2px">-4.16</span>
<span style="top:197.1px">-3.93</span>
<span style="top:218.0px">-3.70</span>
<span style="top:238.9px">-3.47</span>
<span style="top:259.8px">-3.25</span>
<span style="top:280.7px">-3.02</span>
<span style="top:301.6px">-2.79</span>
<span style="top:322.5px">-2.57</span>
<span style="top:343.4px">-2.34</span>
<span style="top:364.3px">-2.11</span>
<span style="top:385.2px">-1.88</span>
<span style="top:406.1px">-1.66</span>
<span style="top:427.0px">-1.43</span>
<span style="top:447.9px">-1.20</span>
<span style="top:468.8px">-0.98</span>
<span style="top:489.7px">-0.75</span>
<span style="top:510.6px">-0.52</span>
</div>
</body></html>
